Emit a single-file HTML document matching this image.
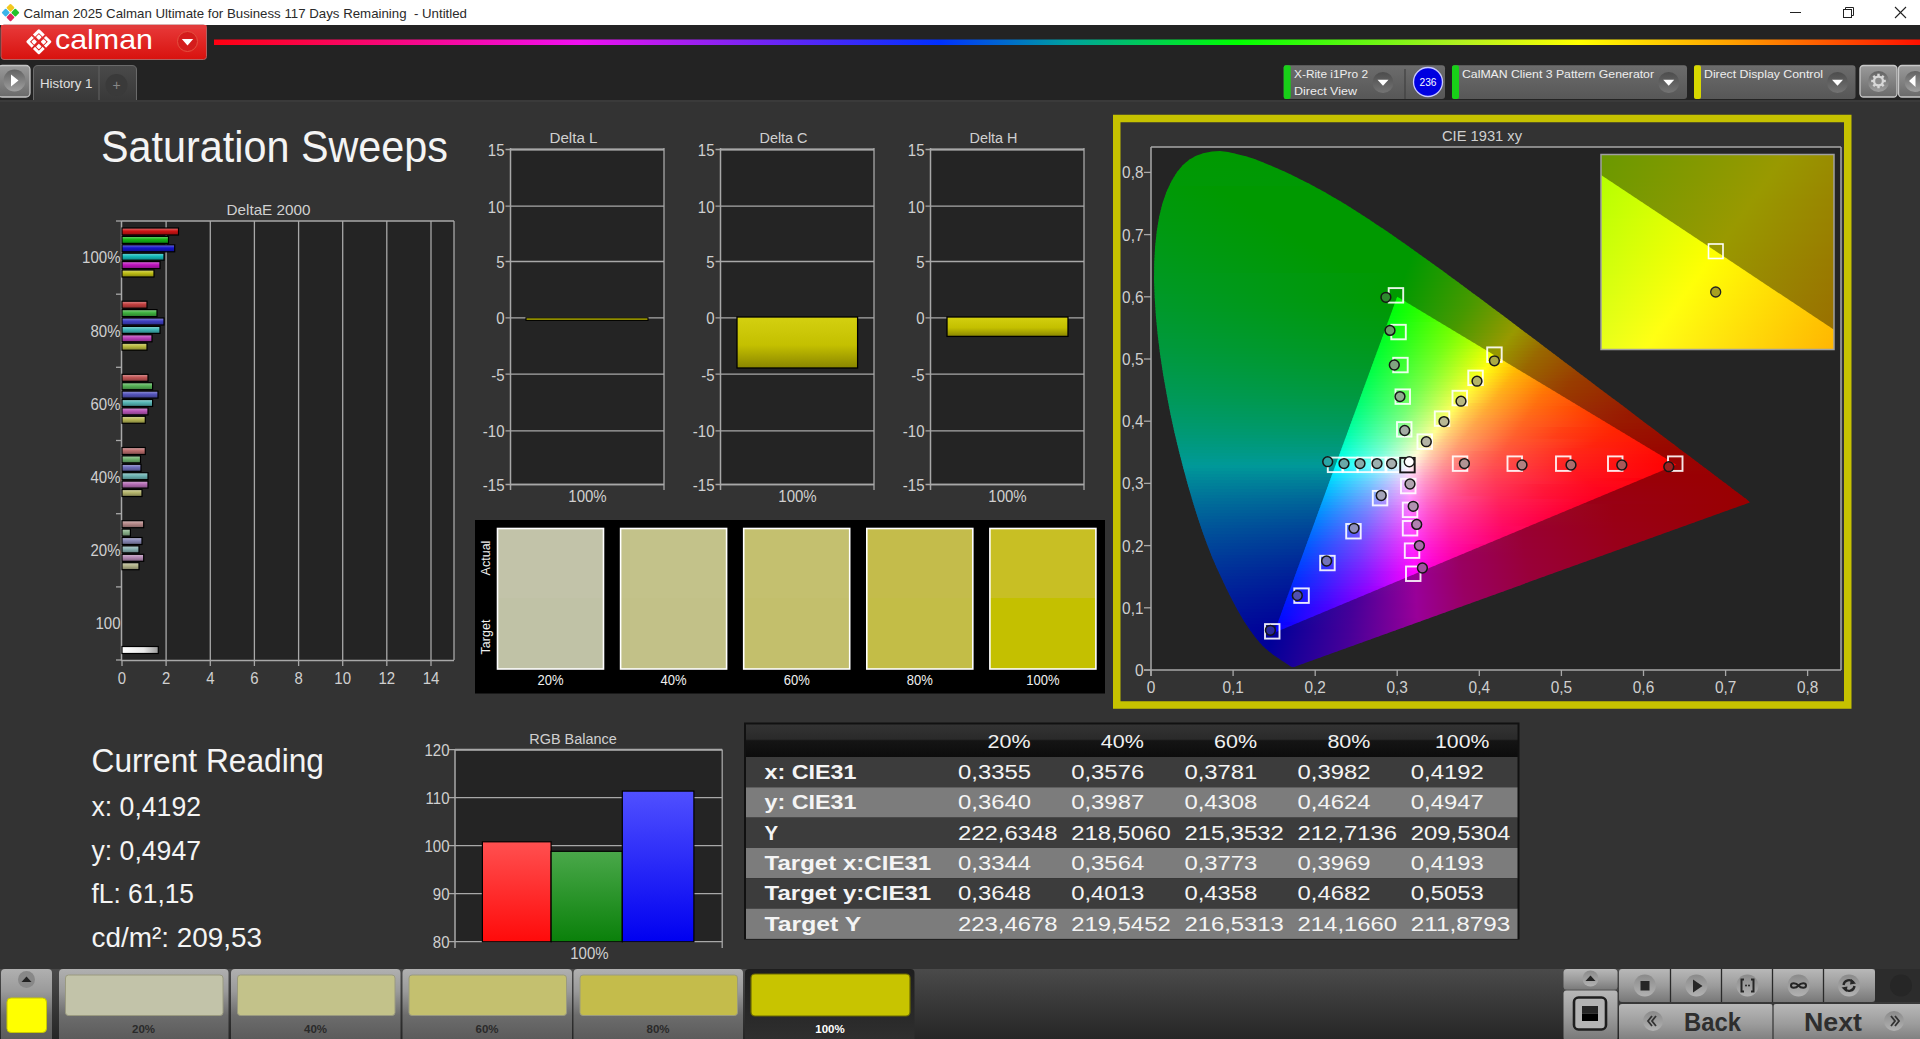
<!DOCTYPE html><html><head><meta charset="utf-8"><style>html,body{margin:0;padding:0;background:#333;overflow:hidden}svg{display:block;font-family:"Liberation Sans",sans-serif}</style></head><body><svg width="1920" height="1039" viewBox="0 0 1920 1039"><defs><linearGradient id="redbtn" x1="0" y1="0" x2="0" y2="1"><stop offset="0" stop-color="#e83a3a"/><stop offset="1" stop-color="#d8120e"/></linearGradient><linearGradient id="rainbow" gradientUnits="userSpaceOnUse" x1="214" x2="1920"><stop offset="0" stop-color="#ff0010"/><stop offset="0.214" stop-color="#f010f0"/><stop offset="0.28" stop-color="#a020f0"/><stop offset="0.425" stop-color="#0030ff"/><stop offset="0.5" stop-color="#00a0a0"/><stop offset="0.6" stop-color="#00ff00"/><stop offset="0.73" stop-color="#b0f020"/><stop offset="0.8" stop-color="#ffff00"/><stop offset="0.89" stop-color="#ffa000"/><stop offset="1" stop-color="#ff1000"/></linearGradient><linearGradient id="btn" x1="0" y1="0" x2="0" y2="1"><stop offset="0" stop-color="#9a9a9a"/><stop offset="1" stop-color="#6a6a6a"/></linearGradient><linearGradient id="knobg" x1="0" y1="0" x2="0" y2="1"><stop offset="0" stop-color="#626262"/><stop offset="1" stop-color="#a0a0a0"/></linearGradient><linearGradient id="dknob" x1="0" y1="0" x2="0" y2="1"><stop offset="0" stop-color="#4c4c4c"/><stop offset="1" stop-color="#747474"/></linearGradient><radialGradient id="knob" cx="0.5" cy="0.5" r="0.5"><stop offset="0.6" stop-color="#777"/><stop offset="1" stop-color="#999"/></radialGradient><linearGradient id="tab" x1="0" y1="0" x2="0" y2="1"><stop offset="0" stop-color="#4a4a4a"/><stop offset="1" stop-color="#393939"/></linearGradient><linearGradient id="ibox" x1="0" y1="0" x2="0" y2="1"><stop offset="0" stop-color="#6c6c6c"/><stop offset="1" stop-color="#575757"/></linearGradient><linearGradient id="bar0_0" x1="0" y1="0" x2="0" y2="1"><stop offset="0" stop-color="rgb(225, 114, 114)"/><stop offset="0.45" stop-color="rgb(205, 20, 20)"/><stop offset="1" stop-color="rgb(143, 14, 14)"/></linearGradient><linearGradient id="bar0_1" x1="0" y1="0" x2="0" y2="1"><stop offset="0" stop-color="rgb(114, 210, 114)"/><stop offset="0.45" stop-color="rgb(20, 180, 20)"/><stop offset="1" stop-color="rgb(14, 125, 14)"/></linearGradient><linearGradient id="bar0_2" x1="0" y1="0" x2="0" y2="1"><stop offset="0" stop-color="rgb(114, 114, 222)"/><stop offset="0.45" stop-color="rgb(20, 20, 200)"/><stop offset="1" stop-color="rgb(14, 14, 140)"/></linearGradient><linearGradient id="bar0_3" x1="0" y1="0" x2="0" y2="1"><stop offset="0" stop-color="rgb(114, 213, 213)"/><stop offset="0.45" stop-color="rgb(20, 185, 185)"/><stop offset="1" stop-color="rgb(14, 129, 129)"/></linearGradient><linearGradient id="bar0_4" x1="0" y1="0" x2="0" y2="1"><stop offset="0" stop-color="rgb(216, 114, 216)"/><stop offset="0.45" stop-color="rgb(190, 20, 190)"/><stop offset="1" stop-color="rgb(133, 14, 133)"/></linearGradient><linearGradient id="bar0_5" x1="0" y1="0" x2="0" y2="1"><stop offset="0" stop-color="rgb(216, 216, 114)"/><stop offset="0.45" stop-color="rgb(190, 190, 20)"/><stop offset="1" stop-color="rgb(133, 133, 14)"/></linearGradient><linearGradient id="bar1_0" x1="0" y1="0" x2="0" y2="1"><stop offset="0" stop-color="rgb(219, 139, 139)"/><stop offset="0.45" stop-color="rgb(196, 63, 63)"/><stop offset="1" stop-color="rgb(137, 44, 44)"/></linearGradient><linearGradient id="bar1_1" x1="0" y1="0" x2="0" y2="1"><stop offset="0" stop-color="rgb(139, 208, 139)"/><stop offset="0.45" stop-color="rgb(63, 178, 63)"/><stop offset="1" stop-color="rgb(44, 124, 44)"/></linearGradient><linearGradient id="bar1_2" x1="0" y1="0" x2="0" y2="1"><stop offset="0" stop-color="rgb(139, 139, 217)"/><stop offset="0.45" stop-color="rgb(63, 63, 193)"/><stop offset="1" stop-color="rgb(44, 44, 135)"/></linearGradient><linearGradient id="bar1_3" x1="0" y1="0" x2="0" y2="1"><stop offset="0" stop-color="rgb(139, 211, 211)"/><stop offset="0.45" stop-color="rgb(63, 182, 182)"/><stop offset="1" stop-color="rgb(44, 127, 127)"/></linearGradient><linearGradient id="bar1_4" x1="0" y1="0" x2="0" y2="1"><stop offset="0" stop-color="rgb(213, 139, 213)"/><stop offset="0.45" stop-color="rgb(185, 63, 185)"/><stop offset="1" stop-color="rgb(129, 44, 129)"/></linearGradient><linearGradient id="bar1_5" x1="0" y1="0" x2="0" y2="1"><stop offset="0" stop-color="rgb(213, 213, 139)"/><stop offset="0.45" stop-color="rgb(185, 185, 63)"/><stop offset="1" stop-color="rgb(129, 129, 44)"/></linearGradient><linearGradient id="bar2_0" x1="0" y1="0" x2="0" y2="1"><stop offset="0" stop-color="rgb(217, 153, 153)"/><stop offset="0.45" stop-color="rgb(192, 85, 85)"/><stop offset="1" stop-color="rgb(134, 59, 59)"/></linearGradient><linearGradient id="bar2_1" x1="0" y1="0" x2="0" y2="1"><stop offset="0" stop-color="rgb(153, 208, 153)"/><stop offset="0.45" stop-color="rgb(85, 177, 85)"/><stop offset="1" stop-color="rgb(59, 123, 59)"/></linearGradient><linearGradient id="bar2_2" x1="0" y1="0" x2="0" y2="1"><stop offset="0" stop-color="rgb(153, 153, 215)"/><stop offset="0.45" stop-color="rgb(85, 85, 189)"/><stop offset="1" stop-color="rgb(59, 59, 132)"/></linearGradient><linearGradient id="bar2_3" x1="0" y1="0" x2="0" y2="1"><stop offset="0" stop-color="rgb(153, 210, 210)"/><stop offset="0.45" stop-color="rgb(85, 180, 180)"/><stop offset="1" stop-color="rgb(59, 125, 125)"/></linearGradient><linearGradient id="bar2_4" x1="0" y1="0" x2="0" y2="1"><stop offset="0" stop-color="rgb(211, 153, 211)"/><stop offset="0.45" stop-color="rgb(183, 85, 183)"/><stop offset="1" stop-color="rgb(128, 59, 128)"/></linearGradient><linearGradient id="bar2_5" x1="0" y1="0" x2="0" y2="1"><stop offset="0" stop-color="rgb(211, 211, 153)"/><stop offset="0.45" stop-color="rgb(183, 183, 85)"/><stop offset="1" stop-color="rgb(128, 128, 59)"/></linearGradient><linearGradient id="bar3_0" x1="0" y1="0" x2="0" y2="1"><stop offset="0" stop-color="rgb(214, 167, 167)"/><stop offset="0.45" stop-color="rgb(187, 109, 109)"/><stop offset="1" stop-color="rgb(130, 76, 76)"/></linearGradient><linearGradient id="bar3_1" x1="0" y1="0" x2="0" y2="1"><stop offset="0" stop-color="rgb(167, 208, 167)"/><stop offset="0.45" stop-color="rgb(109, 177, 109)"/><stop offset="1" stop-color="rgb(76, 123, 76)"/></linearGradient><linearGradient id="bar3_2" x1="0" y1="0" x2="0" y2="1"><stop offset="0" stop-color="rgb(167, 167, 213)"/><stop offset="0.45" stop-color="rgb(109, 109, 185)"/><stop offset="1" stop-color="rgb(76, 76, 129)"/></linearGradient><linearGradient id="bar3_3" x1="0" y1="0" x2="0" y2="1"><stop offset="0" stop-color="rgb(167, 209, 209)"/><stop offset="0.45" stop-color="rgb(109, 179, 179)"/><stop offset="1" stop-color="rgb(76, 125, 125)"/></linearGradient><linearGradient id="bar3_4" x1="0" y1="0" x2="0" y2="1"><stop offset="0" stop-color="rgb(210, 167, 210)"/><stop offset="0.45" stop-color="rgb(181, 109, 181)"/><stop offset="1" stop-color="rgb(126, 76, 126)"/></linearGradient><linearGradient id="bar3_5" x1="0" y1="0" x2="0" y2="1"><stop offset="0" stop-color="rgb(210, 210, 167)"/><stop offset="0.45" stop-color="rgb(181, 181, 109)"/><stop offset="1" stop-color="rgb(126, 126, 76)"/></linearGradient><linearGradient id="bar4_0" x1="0" y1="0" x2="0" y2="1"><stop offset="0" stop-color="rgb(211, 183, 183)"/><stop offset="0.45" stop-color="rgb(182, 136, 136)"/><stop offset="1" stop-color="rgb(127, 95, 95)"/></linearGradient><linearGradient id="bar4_1" x1="0" y1="0" x2="0" y2="1"><stop offset="0" stop-color="rgb(183, 207, 183)"/><stop offset="0.45" stop-color="rgb(136, 176, 136)"/><stop offset="1" stop-color="rgb(95, 123, 95)"/></linearGradient><linearGradient id="bar4_2" x1="0" y1="0" x2="0" y2="1"><stop offset="0" stop-color="rgb(183, 183, 210)"/><stop offset="0.45" stop-color="rgb(136, 136, 181)"/><stop offset="1" stop-color="rgb(95, 95, 126)"/></linearGradient><linearGradient id="bar4_3" x1="0" y1="0" x2="0" y2="1"><stop offset="0" stop-color="rgb(183, 208, 208)"/><stop offset="0.45" stop-color="rgb(136, 177, 177)"/><stop offset="1" stop-color="rgb(95, 123, 123)"/></linearGradient><linearGradient id="bar4_4" x1="0" y1="0" x2="0" y2="1"><stop offset="0" stop-color="rgb(208, 183, 208)"/><stop offset="0.45" stop-color="rgb(178, 136, 178)"/><stop offset="1" stop-color="rgb(124, 95, 124)"/></linearGradient><linearGradient id="bar4_5" x1="0" y1="0" x2="0" y2="1"><stop offset="0" stop-color="rgb(208, 208, 183)"/><stop offset="0.45" stop-color="rgb(178, 178, 136)"/><stop offset="1" stop-color="rgb(124, 124, 95)"/></linearGradient><linearGradient id="wbar" x1="0" y1="0" x2="1" y2="0"><stop offset="0" stop-color="#fff"/><stop offset="0.6" stop-color="#e8e8e8"/><stop offset="1" stop-color="#9a9a9a"/></linearGradient><linearGradient id="ybar" x1="0" y1="0" x2="0" y2="1"><stop offset="0" stop-color="#d4d010"/><stop offset="0.55" stop-color="#c4c000"/><stop offset="1" stop-color="#8a8600"/></linearGradient><clipPath id="locus"><path d="M1293.9,666.9 1293.9,666.9 1293.9,666.9 1293.8,666.9 1293.8,666.9 1293.8,666.9 1293.7,666.9 1293.7,666.9 1293.7,667.0 1293.6,667.0 1293.6,667.0 1293.5,666.9 1293.5,667.0 1293.4,667.0 1293.4,667.0 1293.3,667.0 1293.2,667.0 1293.2,667.0 1293.1,667.0 1293.1,667.0 1293.0,667.0 1292.9,667.0 1292.8,667.0 1292.8,667.0 1292.7,667.0 1292.6,667.0 1292.5,667.0 1292.4,667.0 1292.3,667.0 1292.1,667.0 1292.0,666.9 1291.9,666.9 1291.7,666.8 1291.5,666.7 1291.3,666.6 1291.0,666.5 1290.8,666.4 1290.5,666.2 1290.3,666.1 1290.0,665.9 1289.6,665.7 1289.3,665.5 1288.9,665.2 1288.4,665.0 1288.0,664.7 1287.5,664.3 1287.0,664.0 1286.5,663.6 1285.9,663.2 1285.3,662.8 1284.7,662.4 1284.0,661.9 1283.2,661.4 1282.4,660.9 1281.5,660.3 1280.5,659.7 1279.5,659.0 1278.5,658.3 1277.4,657.6 1276.2,656.8 1274.9,655.9 1273.6,654.9 1272.2,653.9 1270.7,652.8 1269.2,651.5 1267.6,650.2 1265.9,648.8 1264.2,647.2 1262.2,645.2 1260.1,642.9 1257.8,640.3 1255.4,637.4 1252.9,634.0 1250.1,630.3 1247.3,626.1 1244.2,621.4 1241.0,616.0 1237.5,609.9 1233.9,603.3 1230.0,595.8 1225.9,587.5 1221.6,578.2 1216.9,568.2 1212.1,557.2 1207.4,545.2 1202.6,532.0 1197.8,517.8 1193.0,502.6 1188.3,486.5 1183.6,469.3 1178.9,451.1 1174.4,432.3 1170.3,413.3 1166.6,394.0 1163.1,374.2 1160.1,354.4 1157.7,335.1 1155.9,316.3 1154.7,297.7 1154.0,279.8 1154.2,262.7 1155.1,246.5 1156.8,230.9 1159.2,216.4 1162.4,203.4 1166.5,191.7 1171.4,181.3 1176.9,172.3 1182.9,164.9 1189.5,159.4 1196.7,155.5 1204.3,152.9 1212.0,151.4 1219.9,151.1 1228.1,152.1 1236.4,153.9 1244.7,156.1 1253.1,158.6 1261.4,161.8 1269.8,165.2 1278.0,168.7 1286.0,172.3 1293.8,176.0 1301.6,179.9 1309.3,183.8 1317.0,187.9 1324.5,192.1 1332.0,196.4 1339.5,200.8 1346.9,205.3 1354.4,210.0 1361.8,214.7 1369.2,219.5 1376.5,224.4 1383.9,229.3 1391.2,234.3 1398.6,239.4 1405.9,244.5 1413.2,249.7 1420.5,254.9 1427.9,260.2 1435.2,265.5 1442.6,270.8 1449.9,276.2 1457.2,281.6 1464.6,287.0 1471.9,292.4 1479.2,297.8 1486.5,303.3 1493.8,308.7 1501.0,314.1 1508.3,319.6 1515.5,325.0 1522.7,330.4 1529.8,335.8 1536.9,341.1 1544.0,346.4 1551.0,351.7 1558.0,357.0 1564.8,362.2 1571.7,367.3 1578.4,372.4 1585.1,377.5 1591.7,382.5 1598.2,387.4 1604.6,392.2 1610.9,396.9 1617.1,401.6 1623.1,406.1 1629.0,410.6 1634.8,415.0 1640.4,419.3 1645.9,423.4 1651.1,427.3 1656.1,431.1 1660.9,434.8 1665.6,438.3 1670.2,441.8 1674.7,445.1 1679.0,448.4 1683.0,451.4 1686.9,454.3 1690.6,457.1 1694.1,459.7 1697.5,462.3 1700.7,464.7 1703.7,466.9 1706.5,469.1 1709.2,471.1 1711.8,473.1 1714.2,474.9 1716.4,476.6 1718.6,478.2 1720.6,479.8 1722.5,481.2 1724.3,482.5 1726.1,483.8 1727.7,485.1 1729.2,486.2 1730.7,487.3 1732.0,488.4 1733.4,489.4 1734.7,490.4 1735.9,491.3 1737.1,492.2 1738.2,493.0 1739.2,493.8 1740.2,494.6 1741.2,495.3 1742.1,495.9 1742.9,496.6 1743.7,497.2 1744.4,497.7 1745.1,498.2 1745.7,498.6 1746.3,499.1 1746.9,499.6 1747.7,500.3 1748.5,501.1 1749.2,501.8 1749.8,502.4Z"/></clipPath><clipPath id="tri"><path d="M1676.3,464.7 L1397.2,296.8 L1274.1,632.7 Z"/></clipPath><linearGradient id="o0" gradientUnits="userSpaceOnUse" x1="1153" x2="1751"><stop offset=".000" stop-color="#009900"/><stop offset=".497" stop-color="#009900"/><stop offset=".679" stop-color="#479900"/><stop offset=".844" stop-color="#999900"/><stop offset="1.000" stop-color="#995d00"/></linearGradient><linearGradient id="o1" gradientUnits="userSpaceOnUse" x1="1153" x2="1751"><stop offset=".000" stop-color="#009901"/><stop offset=".495" stop-color="#009900"/><stop offset=".677" stop-color="#479900"/><stop offset=".841" stop-color="#999900"/><stop offset="1.000" stop-color="#995c00"/></linearGradient><linearGradient id="o2" gradientUnits="userSpaceOnUse" x1="1153" x2="1751"><stop offset=".000" stop-color="#009902"/><stop offset=".493" stop-color="#009900"/><stop offset=".674" stop-color="#479900"/><stop offset=".836" stop-color="#999900"/><stop offset="1.000" stop-color="#995a00"/></linearGradient><linearGradient id="o3" gradientUnits="userSpaceOnUse" x1="1153" x2="1751"><stop offset=".000" stop-color="#009902"/><stop offset=".492" stop-color="#009900"/><stop offset=".672" stop-color="#489900"/><stop offset=".833" stop-color="#999900"/><stop offset=".908" stop-color="#997600"/><stop offset="1.000" stop-color="#995900"/></linearGradient><linearGradient id="o4" gradientUnits="userSpaceOnUse" x1="1153" x2="1751"><stop offset=".000" stop-color="#009903"/><stop offset=".490" stop-color="#009900"/><stop offset=".667" stop-color="#479900"/><stop offset=".829" stop-color="#999900"/><stop offset=".906" stop-color="#997500"/><stop offset="1.000" stop-color="#995800"/></linearGradient><linearGradient id="o5" gradientUnits="userSpaceOnUse" x1="1153" x2="1751"><stop offset=".000" stop-color="#009903"/><stop offset=".488" stop-color="#009900"/><stop offset=".666" stop-color="#479900"/><stop offset=".824" stop-color="#999900"/><stop offset=".903" stop-color="#997400"/><stop offset="1.000" stop-color="#995600"/></linearGradient><linearGradient id="o6" gradientUnits="userSpaceOnUse" x1="1153" x2="1751"><stop offset=".000" stop-color="#009904"/><stop offset=".487" stop-color="#009900"/><stop offset=".664" stop-color="#489900"/><stop offset=".821" stop-color="#999900"/><stop offset=".901" stop-color="#997300"/><stop offset="1.000" stop-color="#995500"/></linearGradient><linearGradient id="o7" gradientUnits="userSpaceOnUse" x1="1153" x2="1751"><stop offset=".000" stop-color="#009905"/><stop offset=".485" stop-color="#009900"/><stop offset=".661" stop-color="#489900"/><stop offset=".816" stop-color="#999900"/><stop offset=".900" stop-color="#997200"/><stop offset="1.000" stop-color="#995400"/></linearGradient><linearGradient id="o8" gradientUnits="userSpaceOnUse" x1="1153" x2="1751"><stop offset=".000" stop-color="#009905"/><stop offset=".483" stop-color="#009900"/><stop offset=".657" stop-color="#489900"/><stop offset=".813" stop-color="#999900"/><stop offset=".896" stop-color="#997200"/><stop offset="1.000" stop-color="#995300"/></linearGradient><linearGradient id="o9" gradientUnits="userSpaceOnUse" x1="1153" x2="1751"><stop offset=".000" stop-color="#009906"/><stop offset=".482" stop-color="#009900"/><stop offset=".654" stop-color="#489900"/><stop offset=".809" stop-color="#999900"/><stop offset=".895" stop-color="#997100"/><stop offset="1.000" stop-color="#995100"/></linearGradient><linearGradient id="o10" gradientUnits="userSpaceOnUse" x1="1153" x2="1751"><stop offset=".000" stop-color="#009907"/><stop offset=".478" stop-color="#009900"/><stop offset=".651" stop-color="#479900"/><stop offset=".804" stop-color="#999900"/><stop offset=".891" stop-color="#997000"/><stop offset="1.000" stop-color="#995000"/></linearGradient><linearGradient id="o11" gradientUnits="userSpaceOnUse" x1="1153" x2="1751"><stop offset=".000" stop-color="#009907"/><stop offset=".477" stop-color="#009900"/><stop offset=".647" stop-color="#479900"/><stop offset=".801" stop-color="#999900"/><stop offset=".888" stop-color="#997000"/><stop offset="1.000" stop-color="#994f00"/></linearGradient><linearGradient id="o12" gradientUnits="userSpaceOnUse" x1="1153" x2="1751"><stop offset=".000" stop-color="#009908"/><stop offset=".105" stop-color="#009900"/><stop offset=".475" stop-color="#009900"/><stop offset=".644" stop-color="#479900"/><stop offset=".796" stop-color="#999900"/><stop offset=".886" stop-color="#996f00"/><stop offset="1.000" stop-color="#994e00"/></linearGradient><linearGradient id="o13" gradientUnits="userSpaceOnUse" x1="1153" x2="1751"><stop offset=".000" stop-color="#009909"/><stop offset=".114" stop-color="#009900"/><stop offset=".473" stop-color="#009900"/><stop offset=".642" stop-color="#489900"/><stop offset=".793" stop-color="#999900"/><stop offset=".883" stop-color="#996e00"/><stop offset="1.000" stop-color="#994c00"/></linearGradient><linearGradient id="o14" gradientUnits="userSpaceOnUse" x1="1153" x2="1751"><stop offset=".000" stop-color="#009909"/><stop offset=".122" stop-color="#009900"/><stop offset=".472" stop-color="#009900"/><stop offset=".639" stop-color="#479900"/><stop offset=".789" stop-color="#999900"/><stop offset=".881" stop-color="#996d00"/><stop offset="1.000" stop-color="#994b00"/></linearGradient><linearGradient id="o15" gradientUnits="userSpaceOnUse" x1="1153" x2="1751"><stop offset=".000" stop-color="#00990a"/><stop offset=".130" stop-color="#009900"/><stop offset=".470" stop-color="#009900"/><stop offset=".637" stop-color="#489900"/><stop offset=".784" stop-color="#999900"/><stop offset=".880" stop-color="#996c00"/><stop offset="1.000" stop-color="#994a00"/></linearGradient><linearGradient id="o16" gradientUnits="userSpaceOnUse" x1="1153" x2="1751"><stop offset=".000" stop-color="#00990b"/><stop offset=".139" stop-color="#009900"/><stop offset=".468" stop-color="#009900"/><stop offset=".634" stop-color="#489900"/><stop offset=".781" stop-color="#999900"/><stop offset=".876" stop-color="#996c00"/><stop offset="1.000" stop-color="#994900"/></linearGradient><linearGradient id="o17" gradientUnits="userSpaceOnUse" x1="1153" x2="1751"><stop offset=".000" stop-color="#00990c"/><stop offset=".147" stop-color="#009900"/><stop offset=".467" stop-color="#009900"/><stop offset=".629" stop-color="#479900"/><stop offset=".778" stop-color="#999800"/><stop offset=".875" stop-color="#996a00"/><stop offset="1.000" stop-color="#994800"/></linearGradient><linearGradient id="o18" gradientUnits="userSpaceOnUse" x1="1153" x2="1751"><stop offset=".000" stop-color="#00990c"/><stop offset=".156" stop-color="#009900"/><stop offset=".465" stop-color="#009900"/><stop offset=".627" stop-color="#489900"/><stop offset=".773" stop-color="#999900"/><stop offset=".871" stop-color="#996a00"/><stop offset="1.000" stop-color="#994700"/></linearGradient><linearGradient id="o19" gradientUnits="userSpaceOnUse" x1="1153" x2="1751"><stop offset=".000" stop-color="#00990d"/><stop offset=".164" stop-color="#009900"/><stop offset=".462" stop-color="#009900"/><stop offset=".622" stop-color="#479900"/><stop offset=".769" stop-color="#999900"/><stop offset=".868" stop-color="#996900"/><stop offset="1.000" stop-color="#994500"/></linearGradient><linearGradient id="o20" gradientUnits="userSpaceOnUse" x1="1153" x2="1751"><stop offset=".000" stop-color="#00990e"/><stop offset=".172" stop-color="#009900"/><stop offset=".460" stop-color="#009900"/><stop offset=".620" stop-color="#479900"/><stop offset=".764" stop-color="#999900"/><stop offset=".866" stop-color="#996800"/><stop offset="1.000" stop-color="#994400"/></linearGradient><linearGradient id="o21" gradientUnits="userSpaceOnUse" x1="1153" x2="1751"><stop offset=".000" stop-color="#00990f"/><stop offset=".181" stop-color="#009900"/><stop offset=".458" stop-color="#009900"/><stop offset=".617" stop-color="#479900"/><stop offset=".761" stop-color="#999900"/><stop offset=".863" stop-color="#996800"/><stop offset="1.000" stop-color="#994300"/></linearGradient><linearGradient id="o22" gradientUnits="userSpaceOnUse" x1="1153" x2="1751"><stop offset=".000" stop-color="#00990f"/><stop offset=".189" stop-color="#009900"/><stop offset=".457" stop-color="#009900"/><stop offset=".614" stop-color="#479900"/><stop offset=".758" stop-color="#999800"/><stop offset=".861" stop-color="#996700"/><stop offset="1.000" stop-color="#994200"/></linearGradient><linearGradient id="o23" gradientUnits="userSpaceOnUse" x1="1153" x2="1751"><stop offset=".000" stop-color="#009910"/><stop offset=".197" stop-color="#009900"/><stop offset=".455" stop-color="#009900"/><stop offset=".612" stop-color="#489900"/><stop offset=".753" stop-color="#999900"/><stop offset=".858" stop-color="#996600"/><stop offset="1.000" stop-color="#994100"/></linearGradient><linearGradient id="o24" gradientUnits="userSpaceOnUse" x1="1153" x2="1751"><stop offset=".000" stop-color="#009911"/><stop offset=".206" stop-color="#009900"/><stop offset=".453" stop-color="#009900"/><stop offset=".609" stop-color="#479900"/><stop offset=".749" stop-color="#999900"/><stop offset=".856" stop-color="#996500"/><stop offset="1.000" stop-color="#994000"/></linearGradient><linearGradient id="o25" gradientUnits="userSpaceOnUse" x1="1153" x2="1751"><stop offset=".000" stop-color="#009912"/><stop offset=".214" stop-color="#009900"/><stop offset=".452" stop-color="#009900"/><stop offset=".607" stop-color="#489900"/><stop offset=".744" stop-color="#999900"/><stop offset=".853" stop-color="#996500"/><stop offset="1.000" stop-color="#993f00"/></linearGradient><linearGradient id="o26" gradientUnits="userSpaceOnUse" x1="1153" x2="1751"><stop offset=".000" stop-color="#009912"/><stop offset=".221" stop-color="#009900"/><stop offset=".450" stop-color="#009900"/><stop offset=".604" stop-color="#489900"/><stop offset=".741" stop-color="#999900"/><stop offset=".849" stop-color="#996400"/><stop offset="1.000" stop-color="#993d00"/></linearGradient><linearGradient id="o27" gradientUnits="userSpaceOnUse" x1="1153" x2="1751"><stop offset=".000" stop-color="#009913"/><stop offset=".229" stop-color="#009900"/><stop offset=".448" stop-color="#009900"/><stop offset=".599" stop-color="#479900"/><stop offset=".737" stop-color="#999800"/><stop offset=".848" stop-color="#996300"/><stop offset="1.000" stop-color="#993c00"/></linearGradient><linearGradient id="o28" gradientUnits="userSpaceOnUse" x1="1153" x2="1751"><stop offset=".000" stop-color="#009914"/><stop offset=".237" stop-color="#009900"/><stop offset=".446" stop-color="#009900"/><stop offset=".599" stop-color="#489900"/><stop offset=".732" stop-color="#999900"/><stop offset=".844" stop-color="#996200"/><stop offset="1.000" stop-color="#993b00"/></linearGradient><linearGradient id="o29" gradientUnits="userSpaceOnUse" x1="1153" x2="1751"><stop offset=".000" stop-color="#009915"/><stop offset=".246" stop-color="#009900"/><stop offset=".445" stop-color="#009900"/><stop offset=".595" stop-color="#489900"/><stop offset=".727" stop-color="#989900"/><stop offset=".843" stop-color="#996100"/><stop offset="1.000" stop-color="#993a00"/></linearGradient><linearGradient id="o30" gradientUnits="userSpaceOnUse" x1="1153" x2="1751"><stop offset=".000" stop-color="#009916"/><stop offset=".254" stop-color="#009900"/><stop offset=".443" stop-color="#009900"/><stop offset=".592" stop-color="#489900"/><stop offset=".724" stop-color="#999900"/><stop offset=".839" stop-color="#996100"/><stop offset="1.000" stop-color="#993900"/></linearGradient><linearGradient id="o31" gradientUnits="userSpaceOnUse" x1="1153" x2="1751"><stop offset=".000" stop-color="#009917"/><stop offset=".263" stop-color="#009900"/><stop offset=".440" stop-color="#009900"/><stop offset=".587" stop-color="#479900"/><stop offset=".721" stop-color="#999900"/><stop offset=".836" stop-color="#996000"/><stop offset="1.000" stop-color="#993800"/></linearGradient><linearGradient id="o32" gradientUnits="userSpaceOnUse" x1="1153" x2="1751"><stop offset=".000" stop-color="#009918"/><stop offset=".271" stop-color="#009900"/><stop offset=".438" stop-color="#009900"/><stop offset=".584" stop-color="#479900"/><stop offset=".716" stop-color="#989900"/><stop offset=".834" stop-color="#995f00"/><stop offset="1.000" stop-color="#993700"/></linearGradient><linearGradient id="o33" gradientUnits="userSpaceOnUse" x1="1153" x2="1751"><stop offset=".000" stop-color="#009918"/><stop offset=".279" stop-color="#009900"/><stop offset=".436" stop-color="#009900"/><stop offset=".582" stop-color="#479900"/><stop offset=".712" stop-color="#999900"/><stop offset=".831" stop-color="#995f00"/><stop offset="1.000" stop-color="#993600"/></linearGradient><linearGradient id="o34" gradientUnits="userSpaceOnUse" x1="1153" x2="1751"><stop offset=".000" stop-color="#009919"/><stop offset=".288" stop-color="#009900"/><stop offset=".435" stop-color="#009900"/><stop offset=".579" stop-color="#479900"/><stop offset=".707" stop-color="#989900"/><stop offset=".829" stop-color="#995e00"/><stop offset="1.000" stop-color="#993500"/></linearGradient><linearGradient id="o35" gradientUnits="userSpaceOnUse" x1="1153" x2="1751"><stop offset=".000" stop-color="#00991a"/><stop offset=".296" stop-color="#009900"/><stop offset=".433" stop-color="#009900"/><stop offset=".577" stop-color="#489900"/><stop offset=".704" stop-color="#999900"/><stop offset=".826" stop-color="#995d00"/><stop offset="1.000" stop-color="#993400"/></linearGradient><linearGradient id="o36" gradientUnits="userSpaceOnUse" x1="1153" x2="1751"><stop offset=".000" stop-color="#00991b"/><stop offset=".304" stop-color="#009900"/><stop offset=".431" stop-color="#009900"/><stop offset=".574" stop-color="#489900"/><stop offset=".701" stop-color="#999900"/><stop offset=".823" stop-color="#995c00"/><stop offset="1.000" stop-color="#993300"/></linearGradient><linearGradient id="o37" gradientUnits="userSpaceOnUse" x1="1153" x2="1751"><stop offset=".000" stop-color="#00991c"/><stop offset=".313" stop-color="#009900"/><stop offset=".430" stop-color="#009900"/><stop offset=".570" stop-color="#479900"/><stop offset=".696" stop-color="#989900"/><stop offset=".821" stop-color="#995b00"/><stop offset="1.000" stop-color="#993200"/></linearGradient><linearGradient id="o38" gradientUnits="userSpaceOnUse" x1="1153" x2="1751"><stop offset=".000" stop-color="#00991d"/><stop offset=".321" stop-color="#009900"/><stop offset=".428" stop-color="#009900"/><stop offset=".569" stop-color="#489900"/><stop offset=".692" stop-color="#999900"/><stop offset=".818" stop-color="#995b00"/><stop offset="1.000" stop-color="#993100"/></linearGradient><linearGradient id="o39" gradientUnits="userSpaceOnUse" x1="1153" x2="1751"><stop offset=".000" stop-color="#00991e"/><stop offset=".329" stop-color="#009900"/><stop offset=".426" stop-color="#009900"/><stop offset=".565" stop-color="#489900"/><stop offset=".687" stop-color="#989900"/><stop offset=".814" stop-color="#995a00"/><stop offset="1.000" stop-color="#993000"/></linearGradient><linearGradient id="o40" gradientUnits="userSpaceOnUse" x1="1153" x2="1751"><stop offset=".000" stop-color="#00991f"/><stop offset=".338" stop-color="#009900"/><stop offset=".423" stop-color="#009900"/><stop offset=".560" stop-color="#479900"/><stop offset=".684" stop-color="#989900"/><stop offset=".742" stop-color="#997600"/><stop offset=".813" stop-color="#995900"/><stop offset="1.000" stop-color="#992f00"/></linearGradient><linearGradient id="o41" gradientUnits="userSpaceOnUse" x1="1153" x2="1751"><stop offset=".000" stop-color="#009920"/><stop offset=".421" stop-color="#009900"/><stop offset=".557" stop-color="#479900"/><stop offset=".681" stop-color="#999900"/><stop offset=".739" stop-color="#997500"/><stop offset=".809" stop-color="#995800"/><stop offset="1.000" stop-color="#992e00"/></linearGradient><linearGradient id="o42" gradientUnits="userSpaceOnUse" x1="1153" x2="1751"><stop offset=".000" stop-color="#009921"/><stop offset=".420" stop-color="#009900"/><stop offset=".555" stop-color="#479900"/><stop offset=".676" stop-color="#989900"/><stop offset=".736" stop-color="#997500"/><stop offset=".806" stop-color="#995800"/><stop offset="1.000" stop-color="#992d00"/></linearGradient><linearGradient id="o43" gradientUnits="userSpaceOnUse" x1="1153" x2="1751"><stop offset=".000" stop-color="#009922"/><stop offset=".418" stop-color="#009900"/><stop offset=".552" stop-color="#479900"/><stop offset=".672" stop-color="#999900"/><stop offset=".731" stop-color="#997500"/><stop offset=".803" stop-color="#995700"/><stop offset="1.000" stop-color="#992c00"/></linearGradient><linearGradient id="o44" gradientUnits="userSpaceOnUse" x1="1153" x2="1751"><stop offset=".000" stop-color="#009923"/><stop offset=".416" stop-color="#009900"/><stop offset=".548" stop-color="#479900"/><stop offset=".667" stop-color="#989900"/><stop offset=".729" stop-color="#997300"/><stop offset=".801" stop-color="#995600"/><stop offset="1.000" stop-color="#992b00"/></linearGradient><linearGradient id="o45" gradientUnits="userSpaceOnUse" x1="1153" x2="1751"><stop offset=".000" stop-color="#009924"/><stop offset=".415" stop-color="#009900"/><stop offset=".547" stop-color="#489900"/><stop offset=".664" stop-color="#989900"/><stop offset=".726" stop-color="#997300"/><stop offset=".798" stop-color="#995500"/><stop offset="1.000" stop-color="#992a00"/></linearGradient><linearGradient id="o46" gradientUnits="userSpaceOnUse" x1="1153" x2="1751"><stop offset=".000" stop-color="#009925"/><stop offset=".413" stop-color="#009900"/><stop offset=".543" stop-color="#489900"/><stop offset=".661" stop-color="#999900"/><stop offset=".721" stop-color="#997300"/><stop offset=".794" stop-color="#995500"/><stop offset="1.000" stop-color="#992900"/></linearGradient><linearGradient id="o47" gradientUnits="userSpaceOnUse" x1="1153" x2="1751"><stop offset=".000" stop-color="#009926"/><stop offset=".411" stop-color="#009900"/><stop offset=".540" stop-color="#479900"/><stop offset=".656" stop-color="#989900"/><stop offset=".719" stop-color="#997200"/><stop offset=".793" stop-color="#995400"/><stop offset="1.000" stop-color="#992800"/></linearGradient><linearGradient id="o48" gradientUnits="userSpaceOnUse" x1="1153" x2="1751"><stop offset=".000" stop-color="#009928"/><stop offset=".410" stop-color="#009900"/><stop offset=".538" stop-color="#489900"/><stop offset=".652" stop-color="#999900"/><stop offset=".714" stop-color="#997200"/><stop offset=".789" stop-color="#995300"/><stop offset="1.000" stop-color="#992700"/></linearGradient><linearGradient id="o49" gradientUnits="userSpaceOnUse" x1="1153" x2="1751"><stop offset=".000" stop-color="#009929"/><stop offset=".408" stop-color="#009901"/><stop offset=".535" stop-color="#489900"/><stop offset=".649" stop-color="#999900"/><stop offset=".709" stop-color="#997200"/><stop offset=".786" stop-color="#995200"/><stop offset="1.000" stop-color="#992600"/></linearGradient><linearGradient id="o50" gradientUnits="userSpaceOnUse" x1="1153" x2="1751"><stop offset=".000" stop-color="#00992a"/><stop offset=".405" stop-color="#009902"/><stop offset=".530" stop-color="#479900"/><stop offset=".644" stop-color="#989900"/><stop offset=".707" stop-color="#997100"/><stop offset=".783" stop-color="#995200"/><stop offset="1.000" stop-color="#992500"/></linearGradient><linearGradient id="o51" gradientUnits="userSpaceOnUse" x1="1153" x2="1751"><stop offset=".000" stop-color="#00992b"/><stop offset=".403" stop-color="#009904"/><stop offset=".528" stop-color="#479900"/><stop offset=".640" stop-color="#999900"/><stop offset=".702" stop-color="#997100"/><stop offset=".779" stop-color="#995100"/><stop offset="1.000" stop-color="#992400"/></linearGradient><linearGradient id="o52" gradientUnits="userSpaceOnUse" x1="1153" x2="1751"><stop offset=".000" stop-color="#00992c"/><stop offset=".401" stop-color="#009905"/><stop offset=".525" stop-color="#479900"/><stop offset=".635" stop-color="#989900"/><stop offset=".701" stop-color="#996f00"/><stop offset=".778" stop-color="#995000"/><stop offset="1.000" stop-color="#992300"/></linearGradient><linearGradient id="o53" gradientUnits="userSpaceOnUse" x1="1153" x2="1751"><stop offset=".000" stop-color="#00992d"/><stop offset=".400" stop-color="#009906"/><stop offset=".522" stop-color="#479900"/><stop offset=".632" stop-color="#999900"/><stop offset=".696" stop-color="#997000"/><stop offset=".774" stop-color="#994f00"/><stop offset="1.000" stop-color="#992200"/></linearGradient><linearGradient id="o54" gradientUnits="userSpaceOnUse" x1="1153" x2="1751"><stop offset=".000" stop-color="#00992f"/><stop offset=".398" stop-color="#009908"/><stop offset=".520" stop-color="#489900"/><stop offset=".629" stop-color="#999900"/><stop offset=".691" stop-color="#997000"/><stop offset=".771" stop-color="#994f00"/><stop offset="1.000" stop-color="#992100"/></linearGradient><linearGradient id="o55" gradientUnits="userSpaceOnUse" x1="1153" x2="1751"><stop offset=".000" stop-color="#009930"/><stop offset=".396" stop-color="#009909"/><stop offset=".517" stop-color="#489900"/><stop offset=".624" stop-color="#989900"/><stop offset=".689" stop-color="#996e00"/><stop offset=".768" stop-color="#994e00"/><stop offset="1.000" stop-color="#992000"/></linearGradient><linearGradient id="o56" gradientUnits="userSpaceOnUse" x1="1153" x2="1751"><stop offset=".000" stop-color="#009931"/><stop offset=".395" stop-color="#00990b"/><stop offset=".515" stop-color="#489900"/><stop offset=".620" stop-color="#999900"/><stop offset=".684" stop-color="#996e00"/><stop offset=".764" stop-color="#994d00"/><stop offset="1.000" stop-color="#991f00"/></linearGradient><linearGradient id="o57" gradientUnits="userSpaceOnUse" x1="1153" x2="1751"><stop offset=".000" stop-color="#009932"/><stop offset=".393" stop-color="#00990d"/><stop offset=".510" stop-color="#479900"/><stop offset=".615" stop-color="#989900"/><stop offset=".682" stop-color="#996d00"/><stop offset=".763" stop-color="#994c00"/><stop offset="1.000" stop-color="#991e00"/></linearGradient><linearGradient id="o58" gradientUnits="userSpaceOnUse" x1="1153" x2="1751"><stop offset=".000" stop-color="#009934"/><stop offset=".391" stop-color="#00990e"/><stop offset=".508" stop-color="#489900"/><stop offset=".612" stop-color="#999900"/><stop offset=".677" stop-color="#996d00"/><stop offset=".759" stop-color="#994c00"/><stop offset="1.000" stop-color="#991d00"/></linearGradient><linearGradient id="o59" gradientUnits="userSpaceOnUse" x1="1153" x2="1751"><stop offset=".000" stop-color="#009935"/><stop offset=".390" stop-color="#009910"/><stop offset=".505" stop-color="#489900"/><stop offset=".609" stop-color="#999900"/><stop offset=".672" stop-color="#996d00"/><stop offset=".756" stop-color="#994b00"/><stop offset="1.000" stop-color="#991c00"/></linearGradient><linearGradient id="o60" gradientUnits="userSpaceOnUse" x1="1153" x2="1751"><stop offset=".000" stop-color="#009936"/><stop offset=".386" stop-color="#009912"/><stop offset=".500" stop-color="#469901"/><stop offset=".604" stop-color="#989900"/><stop offset=".671" stop-color="#996c00"/><stop offset=".753" stop-color="#994a00"/><stop offset=".860" stop-color="#993000"/><stop offset="1.000" stop-color="#991c00"/></linearGradient><linearGradient id="o61" gradientUnits="userSpaceOnUse" x1="1153" x2="1751"><stop offset=".000" stop-color="#009938"/><stop offset=".385" stop-color="#009913"/><stop offset=".498" stop-color="#479903"/><stop offset=".600" stop-color="#999900"/><stop offset=".666" stop-color="#996c00"/><stop offset=".749" stop-color="#994a00"/><stop offset=".858" stop-color="#992f00"/><stop offset="1.000" stop-color="#991b00"/></linearGradient><linearGradient id="o62" gradientUnits="userSpaceOnUse" x1="1153" x2="1751"><stop offset=".000" stop-color="#009939"/><stop offset=".383" stop-color="#009915"/><stop offset=".495" stop-color="#479905"/><stop offset=".595" stop-color="#989900"/><stop offset=".662" stop-color="#996b00"/><stop offset=".746" stop-color="#994900"/><stop offset=".856" stop-color="#992e00"/><stop offset="1.000" stop-color="#991a00"/></linearGradient><linearGradient id="o63" gradientUnits="userSpaceOnUse" x1="1153" x2="1751"><stop offset=".000" stop-color="#00993b"/><stop offset=".381" stop-color="#009917"/><stop offset=".492" stop-color="#479907"/><stop offset=".592" stop-color="#989900"/><stop offset=".659" stop-color="#996b00"/><stop offset=".742" stop-color="#994800"/><stop offset=".855" stop-color="#992d00"/><stop offset="1.000" stop-color="#991900"/></linearGradient><linearGradient id="o64" gradientUnits="userSpaceOnUse" x1="1153" x2="1751"><stop offset=".000" stop-color="#00993c"/><stop offset=".380" stop-color="#009919"/><stop offset=".490" stop-color="#489908"/><stop offset=".589" stop-color="#999900"/><stop offset=".654" stop-color="#996b00"/><stop offset=".739" stop-color="#994800"/><stop offset=".851" stop-color="#992d00"/><stop offset="1.000" stop-color="#991800"/></linearGradient><linearGradient id="o65" gradientUnits="userSpaceOnUse" x1="1153" x2="1751"><stop offset=".000" stop-color="#00993d"/><stop offset=".378" stop-color="#00991a"/><stop offset=".487" stop-color="#47990b"/><stop offset=".584" stop-color="#989900"/><stop offset=".651" stop-color="#996a00"/><stop offset=".737" stop-color="#994600"/><stop offset=".851" stop-color="#992b00"/><stop offset="1.000" stop-color="#991700"/></linearGradient><linearGradient id="o66" gradientUnits="userSpaceOnUse" x1="1153" x2="1751"><stop offset=".000" stop-color="#00993f"/><stop offset=".376" stop-color="#00991c"/><stop offset=".485" stop-color="#48990c"/><stop offset=".580" stop-color="#999900"/><stop offset=".647" stop-color="#996900"/><stop offset=".734" stop-color="#994600"/><stop offset=".849" stop-color="#992b00"/><stop offset="1.000" stop-color="#991600"/></linearGradient><linearGradient id="o67" gradientUnits="userSpaceOnUse" x1="1153" x2="1751"><stop offset=".000" stop-color="#009940"/><stop offset=".375" stop-color="#00991e"/><stop offset=".482" stop-color="#48990f"/><stop offset=".575" stop-color="#989900"/><stop offset=".644" stop-color="#996800"/><stop offset=".731" stop-color="#994500"/><stop offset=".846" stop-color="#992a00"/><stop offset="1.000" stop-color="#991500"/></linearGradient><linearGradient id="o68" gradientUnits="userSpaceOnUse" x1="1153" x2="1751"><stop offset=".000" stop-color="#009942"/><stop offset=".373" stop-color="#009920"/><stop offset=".478" stop-color="#489911"/><stop offset=".572" stop-color="#989900"/><stop offset=".639" stop-color="#996900"/><stop offset=".727" stop-color="#994400"/><stop offset=".844" stop-color="#992900"/><stop offset="1.000" stop-color="#991500"/></linearGradient><linearGradient id="o69" gradientUnits="userSpaceOnUse" x1="1153" x2="1751"><stop offset=".000" stop-color="#009944"/><stop offset=".371" stop-color="#009922"/><stop offset=".475" stop-color="#479913"/><stop offset=".569" stop-color="#999902"/><stop offset=".635" stop-color="#996800"/><stop offset=".724" stop-color="#994300"/><stop offset=".843" stop-color="#992800"/><stop offset="1.000" stop-color="#991400"/></linearGradient><linearGradient id="o70" gradientUnits="userSpaceOnUse" x1="1153" x2="1751"><stop offset=".000" stop-color="#009945"/><stop offset=".368" stop-color="#009924"/><stop offset=".470" stop-color="#469916"/><stop offset=".564" stop-color="#989905"/><stop offset=".632" stop-color="#996700"/><stop offset=".721" stop-color="#994300"/><stop offset=".839" stop-color="#992700"/><stop offset="1.000" stop-color="#991300"/></linearGradient><linearGradient id="o71" gradientUnits="userSpaceOnUse" x1="1153" x2="1751"><stop offset=".000" stop-color="#009947"/><stop offset=".366" stop-color="#009926"/><stop offset=".468" stop-color="#479918"/><stop offset=".560" stop-color="#999908"/><stop offset=".627" stop-color="#996700"/><stop offset=".717" stop-color="#994200"/><stop offset=".838" stop-color="#992700"/><stop offset="1.000" stop-color="#991200"/></linearGradient><linearGradient id="o72" gradientUnits="userSpaceOnUse" x1="1153" x2="1751"><stop offset=".000" stop-color="#009949"/><stop offset=".365" stop-color="#009928"/><stop offset=".465" stop-color="#47991b"/><stop offset=".555" stop-color="#98990b"/><stop offset=".625" stop-color="#996600"/><stop offset=".714" stop-color="#994100"/><stop offset=".836" stop-color="#992600"/><stop offset="1.000" stop-color="#991100"/></linearGradient><linearGradient id="o73" gradientUnits="userSpaceOnUse" x1="1153" x2="1751"><stop offset=".000" stop-color="#00994a"/><stop offset=".363" stop-color="#00992b"/><stop offset=".462" stop-color="#46991d"/><stop offset=".552" stop-color="#98990d"/><stop offset=".620" stop-color="#996600"/><stop offset=".711" stop-color="#994100"/><stop offset=".834" stop-color="#992500"/><stop offset="1.000" stop-color="#991000"/></linearGradient><linearGradient id="o74" gradientUnits="userSpaceOnUse" x1="1153" x2="1751"><stop offset=".000" stop-color="#00994c"/><stop offset=".361" stop-color="#00992d"/><stop offset=".460" stop-color="#47991f"/><stop offset=".548" stop-color="#999910"/><stop offset=".615" stop-color="#996601"/><stop offset=".707" stop-color="#994000"/><stop offset=".831" stop-color="#992400"/><stop offset="1.000" stop-color="#991000"/></linearGradient><linearGradient id="o75" gradientUnits="userSpaceOnUse" x1="1153" x2="1751"><stop offset=".000" stop-color="#00994e"/><stop offset=".360" stop-color="#00992f"/><stop offset=".457" stop-color="#479922"/><stop offset=".543" stop-color="#989913"/><stop offset=".612" stop-color="#996503"/><stop offset=".704" stop-color="#993f00"/><stop offset=".829" stop-color="#992300"/><stop offset="1.000" stop-color="#990f00"/></linearGradient><linearGradient id="o76" gradientUnits="userSpaceOnUse" x1="1153" x2="1751"><stop offset=".000" stop-color="#009950"/><stop offset=".358" stop-color="#009931"/><stop offset=".455" stop-color="#489924"/><stop offset=".540" stop-color="#999916"/><stop offset=".609" stop-color="#996405"/><stop offset=".701" stop-color="#993e00"/><stop offset=".828" stop-color="#992200"/><stop offset="1.000" stop-color="#990e00"/></linearGradient><linearGradient id="o77" gradientUnits="userSpaceOnUse" x1="1153" x2="1751"><stop offset=".000" stop-color="#009951"/><stop offset=".356" stop-color="#009934"/><stop offset=".452" stop-color="#489927"/><stop offset=".535" stop-color="#989919"/><stop offset=".605" stop-color="#996307"/><stop offset=".697" stop-color="#993d00"/><stop offset=".824" stop-color="#992200"/><stop offset="1.000" stop-color="#990d00"/></linearGradient><linearGradient id="o78" gradientUnits="userSpaceOnUse" x1="1153" x2="1751"><stop offset=".000" stop-color="#009953"/><stop offset=".355" stop-color="#009936"/><stop offset=".448" stop-color="#48992a"/><stop offset=".532" stop-color="#98991c"/><stop offset=".600" stop-color="#996309"/><stop offset=".694" stop-color="#993d00"/><stop offset=".823" stop-color="#992100"/><stop offset="1.000" stop-color="#990c00"/></linearGradient><linearGradient id="o79" gradientUnits="userSpaceOnUse" x1="1153" x2="1751"><stop offset=".000" stop-color="#009955"/><stop offset=".353" stop-color="#009939"/><stop offset=".446" stop-color="#49992d"/><stop offset=".528" stop-color="#99991f"/><stop offset=".597" stop-color="#99630b"/><stop offset=".691" stop-color="#993c00"/><stop offset=".821" stop-color="#992000"/><stop offset="1.000" stop-color="#990c00"/></linearGradient><linearGradient id="o80" gradientUnits="userSpaceOnUse" x1="1153" x2="1751"><stop offset=".000" stop-color="#009957"/><stop offset=".349" stop-color="#00993c"/><stop offset=".440" stop-color="#459930"/><stop offset=".523" stop-color="#989923"/><stop offset=".594" stop-color="#99620d"/><stop offset=".687" stop-color="#993b00"/><stop offset=".818" stop-color="#991f00"/><stop offset="1.000" stop-color="#990b00"/></linearGradient><linearGradient id="o81" gradientUnits="userSpaceOnUse" x1="1153" x2="1751"><stop offset=".000" stop-color="#009959"/><stop offset=".348" stop-color="#00993e"/><stop offset=".438" stop-color="#479933"/><stop offset=".520" stop-color="#999926"/><stop offset=".589" stop-color="#996210"/><stop offset=".684" stop-color="#993a00"/><stop offset=".816" stop-color="#991e00"/><stop offset="1.000" stop-color="#990a00"/></linearGradient><linearGradient id="o82" gradientUnits="userSpaceOnUse" x1="1153" x2="1751"><stop offset=".000" stop-color="#00995b"/><stop offset=".346" stop-color="#009941"/><stop offset=".435" stop-color="#469936"/><stop offset=".515" stop-color="#97992a"/><stop offset=".585" stop-color="#996112"/><stop offset=".681" stop-color="#993901"/><stop offset=".814" stop-color="#991d00"/><stop offset="1.000" stop-color="#990900"/></linearGradient><linearGradient id="o83" gradientUnits="userSpaceOnUse" x1="1153" x2="1751"><stop offset=".000" stop-color="#00995d"/><stop offset=".344" stop-color="#009944"/><stop offset=".431" stop-color="#469939"/><stop offset=".513" stop-color="#99982d"/><stop offset=".582" stop-color="#996014"/><stop offset=".677" stop-color="#993902"/><stop offset=".811" stop-color="#991d00"/><stop offset="1.000" stop-color="#990800"/></linearGradient><linearGradient id="o84" gradientUnits="userSpaceOnUse" x1="1153" x2="1751"><stop offset=".000" stop-color="#00995f"/><stop offset=".343" stop-color="#009947"/><stop offset=".430" stop-color="#47993c"/><stop offset=".508" stop-color="#999931"/><stop offset=".577" stop-color="#996016"/><stop offset=".672" stop-color="#993804"/><stop offset=".808" stop-color="#991c00"/><stop offset="1.000" stop-color="#990800"/></linearGradient><linearGradient id="o85" gradientUnits="userSpaceOnUse" x1="1153" x2="1751"><stop offset=".000" stop-color="#009962"/><stop offset=".341" stop-color="#00994a"/><stop offset=".426" stop-color="#479940"/><stop offset=".505" stop-color="#999834"/><stop offset=".574" stop-color="#995f19"/><stop offset=".669" stop-color="#993706"/><stop offset=".806" stop-color="#991b00"/><stop offset="1.000" stop-color="#990700"/></linearGradient><linearGradient id="o86" gradientUnits="userSpaceOnUse" x1="1153" x2="1751"><stop offset=".000" stop-color="#009964"/><stop offset=".339" stop-color="#00994d"/><stop offset=".421" stop-color="#459943"/><stop offset=".502" stop-color="#999838"/><stop offset=".570" stop-color="#995e1b"/><stop offset=".667" stop-color="#993607"/><stop offset=".804" stop-color="#991a00"/><stop offset="1.000" stop-color="#990600"/></linearGradient><linearGradient id="o87" gradientUnits="userSpaceOnUse" x1="1153" x2="1751"><stop offset=".000" stop-color="#009966"/><stop offset=".338" stop-color="#009950"/><stop offset=".421" stop-color="#489947"/><stop offset=".497" stop-color="#99993c"/><stop offset=".565" stop-color="#995e1e"/><stop offset=".662" stop-color="#993609"/><stop offset=".801" stop-color="#991900"/><stop offset="1.000" stop-color="#990500"/></linearGradient><linearGradient id="o88" gradientUnits="userSpaceOnUse" x1="1153" x2="1751"><stop offset=".000" stop-color="#009968"/><stop offset=".336" stop-color="#009953"/><stop offset=".416" stop-color="#46994a"/><stop offset=".493" stop-color="#999840"/><stop offset=".562" stop-color="#995d20"/><stop offset=".659" stop-color="#99350a"/><stop offset=".799" stop-color="#991800"/><stop offset="1.000" stop-color="#990500"/></linearGradient><linearGradient id="o89" gradientUnits="userSpaceOnUse" x1="1153" x2="1751"><stop offset=".000" stop-color="#00996b"/><stop offset=".334" stop-color="#009956"/><stop offset=".416" stop-color="#49994e"/><stop offset=".488" stop-color="#999944"/><stop offset=".557" stop-color="#995d23"/><stop offset=".656" stop-color="#99340c"/><stop offset=".796" stop-color="#991800"/><stop offset="1.000" stop-color="#990400"/></linearGradient><linearGradient id="o90" gradientUnits="userSpaceOnUse" x1="1153" x2="1751"><stop offset=".000" stop-color="#00996d"/><stop offset=".331" stop-color="#00995a"/><stop offset=".410" stop-color="#459952"/><stop offset=".485" stop-color="#999848"/><stop offset=".554" stop-color="#995c25"/><stop offset=".652" stop-color="#99330d"/><stop offset=".756" stop-color="#991d00"/><stop offset="1.000" stop-color="#990300"/></linearGradient><linearGradient id="o91" gradientUnits="userSpaceOnUse" x1="1153" x2="1751"><stop offset=".000" stop-color="#009970"/><stop offset=".329" stop-color="#00995d"/><stop offset=".406" stop-color="#449956"/><stop offset=".482" stop-color="#99974c"/><stop offset=".550" stop-color="#995b28"/><stop offset=".649" stop-color="#99320f"/><stop offset=".764" stop-color="#991a00"/><stop offset="1.000" stop-color="#990200"/></linearGradient><linearGradient id="o92" gradientUnits="userSpaceOnUse" x1="1153" x2="1751"><stop offset=".000" stop-color="#009972"/><stop offset=".328" stop-color="#009961"/><stop offset=".405" stop-color="#46995a"/><stop offset=".477" stop-color="#999952"/><stop offset=".545" stop-color="#995b2b"/><stop offset=".644" stop-color="#993211"/><stop offset=".771" stop-color="#991800"/><stop offset="1.000" stop-color="#990200"/></linearGradient><linearGradient id="o93" gradientUnits="userSpaceOnUse" x1="1153" x2="1751"><stop offset=".000" stop-color="#009975"/><stop offset=".326" stop-color="#009964"/><stop offset=".401" stop-color="#45995e"/><stop offset=".473" stop-color="#999856"/><stop offset=".542" stop-color="#995a2d"/><stop offset=".640" stop-color="#993112"/><stop offset=".779" stop-color="#991500"/><stop offset="1.000" stop-color="#990100"/></linearGradient><linearGradient id="o94" gradientUnits="userSpaceOnUse" x1="1153" x2="1751"><stop offset=".000" stop-color="#009977"/><stop offset=".324" stop-color="#009968"/><stop offset=".400" stop-color="#479962"/><stop offset=".468" stop-color="#99995b"/><stop offset=".537" stop-color="#995a31"/><stop offset=".637" stop-color="#993014"/><stop offset=".788" stop-color="#991300"/><stop offset="1.000" stop-color="#990000"/></linearGradient><linearGradient id="o95" gradientUnits="userSpaceOnUse" x1="1153" x2="1751"><stop offset=".000" stop-color="#00997a"/><stop offset=".323" stop-color="#00996c"/><stop offset=".396" stop-color="#469967"/><stop offset=".465" stop-color="#999860"/><stop offset=".495" stop-color="#997648"/><stop offset=".533" stop-color="#995933"/><stop offset=".634" stop-color="#992f15"/><stop offset=".796" stop-color="#991100"/><stop offset="1.000" stop-color="#990000"/></linearGradient><linearGradient id="o96" gradientUnits="userSpaceOnUse" x1="1153" x2="1751"><stop offset=".000" stop-color="#00997d"/><stop offset=".321" stop-color="#009970"/><stop offset=".393" stop-color="#46996b"/><stop offset=".462" stop-color="#999764"/><stop offset=".492" stop-color="#99754b"/><stop offset=".530" stop-color="#995836"/><stop offset=".632" stop-color="#992e17"/><stop offset=".804" stop-color="#990f00"/><stop offset="1.000" stop-color="#990000"/></linearGradient><linearGradient id="o97" gradientUnits="userSpaceOnUse" x1="1153" x2="1751"><stop offset=".000" stop-color="#009980"/><stop offset=".319" stop-color="#009974"/><stop offset=".391" stop-color="#479970"/><stop offset=".457" stop-color="#99996a"/><stop offset=".487" stop-color="#997650"/><stop offset=".525" stop-color="#995839"/><stop offset=".627" stop-color="#992d19"/><stop offset=".813" stop-color="#990d00"/><stop offset="1.000" stop-color="#990000"/></linearGradient><linearGradient id="o98" gradientUnits="userSpaceOnUse" x1="1153" x2="1751"><stop offset=".000" stop-color="#009983"/><stop offset=".318" stop-color="#009978"/><stop offset=".388" stop-color="#479975"/><stop offset=".453" stop-color="#99986f"/><stop offset=".483" stop-color="#997554"/><stop offset=".522" stop-color="#99573c"/><stop offset=".625" stop-color="#992c1a"/><stop offset=".821" stop-color="#990b00"/><stop offset="1.000" stop-color="#990000"/></linearGradient><linearGradient id="o99" gradientUnits="userSpaceOnUse" x1="1153" x2="1751"><stop offset=".000" stop-color="#009986"/><stop offset=".316" stop-color="#01997d"/><stop offset=".383" stop-color="#45997a"/><stop offset=".450" stop-color="#999774"/><stop offset=".480" stop-color="#997457"/><stop offset=".518" stop-color="#99563f"/><stop offset=".622" stop-color="#992b1c"/><stop offset=".829" stop-color="#990900"/><stop offset="1.000" stop-color="#990000"/></linearGradient><linearGradient id="o100" gradientUnits="userSpaceOnUse" x1="1153" x2="1751"><stop offset=".000" stop-color="#009989"/><stop offset=".313" stop-color="#009981"/><stop offset=".380" stop-color="#44997f"/><stop offset=".445" stop-color="#99987b"/><stop offset=".475" stop-color="#99745c"/><stop offset=".513" stop-color="#995643"/><stop offset=".619" stop-color="#992a1d"/><stop offset=".838" stop-color="#990700"/><stop offset="1.000" stop-color="#990000"/></linearGradient><linearGradient id="o101" gradientUnits="userSpaceOnUse" x1="1153" x2="1751"><stop offset=".000" stop-color="#00998c"/><stop offset=".311" stop-color="#009986"/><stop offset=".376" stop-color="#449984"/><stop offset=".441" stop-color="#999780"/><stop offset=".472" stop-color="#997360"/><stop offset=".510" stop-color="#995546"/><stop offset=".615" stop-color="#99291f"/><stop offset=".831" stop-color="#990701"/><stop offset="1.000" stop-color="#990000"/></linearGradient><linearGradient id="o102" gradientUnits="userSpaceOnUse" x1="1153" x2="1751"><stop offset=".000" stop-color="#00998f"/><stop offset=".309" stop-color="#00998b"/><stop offset=".376" stop-color="#479989"/><stop offset=".436" stop-color="#999988"/><stop offset=".467" stop-color="#997466"/><stop offset=".505" stop-color="#99554a"/><stop offset=".610" stop-color="#992821"/><stop offset=".821" stop-color="#990703"/><stop offset="1.000" stop-color="#990000"/></linearGradient><linearGradient id="o103" gradientUnits="userSpaceOnUse" x1="1153" x2="1751"><stop offset=".000" stop-color="#009993"/><stop offset=".308" stop-color="#009990"/><stop offset=".371" stop-color="#45998f"/><stop offset=".433" stop-color="#99988d"/><stop offset=".463" stop-color="#99726a"/><stop offset=".502" stop-color="#99534d"/><stop offset=".609" stop-color="#992723"/><stop offset=".814" stop-color="#990604"/><stop offset="1.000" stop-color="#990000"/></linearGradient><linearGradient id="o104" gradientUnits="userSpaceOnUse" x1="1153" x2="1751"><stop offset=".000" stop-color="#009996"/><stop offset=".306" stop-color="#009995"/><stop offset=".368" stop-color="#449995"/><stop offset=".430" stop-color="#999793"/><stop offset=".460" stop-color="#99716e"/><stop offset=".498" stop-color="#995250"/><stop offset=".605" stop-color="#992624"/><stop offset=".806" stop-color="#990605"/><stop offset="1.000" stop-color="#990000"/></linearGradient><linearGradient id="o105" gradientUnits="userSpaceOnUse" x1="1153" x2="1751"><stop offset=".000" stop-color="#009899"/><stop offset=".304" stop-color="#009799"/><stop offset=".368" stop-color="#479799"/><stop offset=".426" stop-color="#999698"/><stop offset=".457" stop-color="#997072"/><stop offset=".495" stop-color="#995153"/><stop offset=".602" stop-color="#992526"/><stop offset=".806" stop-color="#990506"/><stop offset="1.000" stop-color="#990000"/></linearGradient><linearGradient id="o106" gradientUnits="userSpaceOnUse" x1="1153" x2="1751"><stop offset=".000" stop-color="#009599"/><stop offset=".303" stop-color="#009299"/><stop offset=".368" stop-color="#489199"/><stop offset=".426" stop-color="#998f99"/><stop offset=".457" stop-color="#996b73"/><stop offset=".495" stop-color="#994e54"/><stop offset=".602" stop-color="#992327"/><stop offset=".813" stop-color="#990406"/><stop offset="1.000" stop-color="#990000"/></linearGradient><linearGradient id="o107" gradientUnits="userSpaceOnUse" x1="1153" x2="1751"><stop offset=".000" stop-color="#009199"/><stop offset=".301" stop-color="#008d99"/><stop offset=".365" stop-color="#458b99"/><stop offset=".428" stop-color="#998797"/><stop offset=".460" stop-color="#996470"/><stop offset=".498" stop-color="#994853"/><stop offset=".605" stop-color="#992027"/><stop offset=".824" stop-color="#990206"/><stop offset="1.000" stop-color="#990000"/></linearGradient><linearGradient id="o108" gradientUnits="userSpaceOnUse" x1="1153" x2="1751"><stop offset=".000" stop-color="#008e99"/><stop offset=".299" stop-color="#008899"/><stop offset=".365" stop-color="#458699"/><stop offset=".428" stop-color="#998197"/><stop offset=".460" stop-color="#996071"/><stop offset=".498" stop-color="#994554"/><stop offset=".605" stop-color="#991f28"/><stop offset=".831" stop-color="#990006"/><stop offset="1.000" stop-color="#990000"/></linearGradient><linearGradient id="o109" gradientUnits="userSpaceOnUse" x1="1153" x2="1751"><stop offset=".000" stop-color="#008b99"/><stop offset=".298" stop-color="#018399"/><stop offset=".365" stop-color="#468099"/><stop offset=".428" stop-color="#997c98"/><stop offset=".460" stop-color="#995c72"/><stop offset=".498" stop-color="#994254"/><stop offset=".605" stop-color="#991d29"/><stop offset=".819" stop-color="#990007"/><stop offset="1.000" stop-color="#990000"/></linearGradient><linearGradient id="o110" gradientUnits="userSpaceOnUse" x1="1153" x2="1751"><stop offset=".000" stop-color="#008799"/><stop offset=".294" stop-color="#007e99"/><stop offset=".363" stop-color="#457b99"/><stop offset=".428" stop-color="#997698"/><stop offset=".460" stop-color="#995773"/><stop offset=".498" stop-color="#993f55"/><stop offset=".605" stop-color="#991b2a"/><stop offset=".808" stop-color="#990009"/><stop offset="1.000" stop-color="#990000"/></linearGradient><linearGradient id="o111" gradientUnits="userSpaceOnUse" x1="1153" x2="1751"><stop offset=".000" stop-color="#008499"/><stop offset=".293" stop-color="#007a99"/><stop offset=".363" stop-color="#467699"/><stop offset=".428" stop-color="#997199"/><stop offset=".460" stop-color="#995474"/><stop offset=".498" stop-color="#993c56"/><stop offset=".605" stop-color="#99192b"/><stop offset=".796" stop-color="#99000b"/><stop offset="1.000" stop-color="#990000"/></linearGradient><linearGradient id="o112" gradientUnits="userSpaceOnUse" x1="1153" x2="1751"><stop offset=".000" stop-color="#008199"/><stop offset=".291" stop-color="#007699"/><stop offset=".363" stop-color="#477199"/><stop offset=".428" stop-color="#996c99"/><stop offset=".460" stop-color="#995074"/><stop offset=".500" stop-color="#993856"/><stop offset=".607" stop-color="#99172b"/><stop offset=".784" stop-color="#99000d"/><stop offset="1.000" stop-color="#990000"/></linearGradient><linearGradient id="o113" gradientUnits="userSpaceOnUse" x1="1153" x2="1751"><stop offset=".000" stop-color="#007e99"/><stop offset=".289" stop-color="#007199"/><stop offset=".360" stop-color="#446c99"/><stop offset=".430" stop-color="#996597"/><stop offset=".462" stop-color="#994b74"/><stop offset=".502" stop-color="#993556"/><stop offset=".609" stop-color="#99152b"/><stop offset=".773" stop-color="#99000f"/><stop offset="1.000" stop-color="#990000"/></linearGradient><linearGradient id="o114" gradientUnits="userSpaceOnUse" x1="1153" x2="1751"><stop offset=".000" stop-color="#007b99"/><stop offset=".288" stop-color="#006d99"/><stop offset=".360" stop-color="#456899"/><stop offset=".430" stop-color="#996098"/><stop offset=".462" stop-color="#994774"/><stop offset=".502" stop-color="#993257"/><stop offset=".609" stop-color="#99142c"/><stop offset=".759" stop-color="#990011"/><stop offset="1.000" stop-color="#990000"/></linearGradient><linearGradient id="o115" gradientUnits="userSpaceOnUse" x1="1153" x2="1751"><stop offset=".000" stop-color="#007899"/><stop offset=".286" stop-color="#006999"/><stop offset=".360" stop-color="#466399"/><stop offset=".430" stop-color="#995c98"/><stop offset=".462" stop-color="#994375"/><stop offset=".502" stop-color="#992f58"/><stop offset=".609" stop-color="#99122d"/><stop offset=".747" stop-color="#990013"/><stop offset="1.000" stop-color="#990000"/></linearGradient><linearGradient id="o116" gradientUnits="userSpaceOnUse" x1="1153" x2="1751"><stop offset=".000" stop-color="#007599"/><stop offset=".284" stop-color="#006599"/><stop offset=".361" stop-color="#485f99"/><stop offset=".430" stop-color="#995799"/><stop offset=".462" stop-color="#994076"/><stop offset=".502" stop-color="#992d59"/><stop offset=".609" stop-color="#99102e"/><stop offset=".736" stop-color="#990015"/><stop offset="1.000" stop-color="#990000"/></linearGradient><linearGradient id="o117" gradientUnits="userSpaceOnUse" x1="1153" x2="1751"><stop offset=".000" stop-color="#007299"/><stop offset=".283" stop-color="#006299"/><stop offset=".361" stop-color="#495b99"/><stop offset=".430" stop-color="#995399"/><stop offset=".462" stop-color="#993d77"/><stop offset=".502" stop-color="#992a59"/><stop offset=".609" stop-color="#990f2f"/><stop offset=".724" stop-color="#990018"/><stop offset="1.000" stop-color="#990000"/></linearGradient><linearGradient id="o118" gradientUnits="userSpaceOnUse" x1="1153" x2="1751"><stop offset=".000" stop-color="#006f99"/><stop offset=".281" stop-color="#005e99"/><stop offset=".356" stop-color="#445799"/><stop offset=".431" stop-color="#994d97"/><stop offset=".463" stop-color="#993876"/><stop offset=".503" stop-color="#992759"/><stop offset=".610" stop-color="#990d2f"/><stop offset=".771" stop-color="#990012"/><stop offset="1.000" stop-color="#990000"/></linearGradient><linearGradient id="o119" gradientUnits="userSpaceOnUse" x1="1153" x2="1751"><stop offset=".000" stop-color="#006c99"/><stop offset=".279" stop-color="#005b99"/><stop offset=".356" stop-color="#455399"/><stop offset=".431" stop-color="#994998"/><stop offset=".503" stop-color="#99245a"/><stop offset=".610" stop-color="#990b30"/><stop offset=".769" stop-color="#990013"/><stop offset="1.000" stop-color="#990000"/></linearGradient><linearGradient id="o120" gradientUnits="userSpaceOnUse" x1="1153" x2="1751"><stop offset=".000" stop-color="#006a99"/><stop offset=".276" stop-color="#005799"/><stop offset=".355" stop-color="#444f99"/><stop offset=".431" stop-color="#994598"/><stop offset=".465" stop-color="#993176"/><stop offset=".505" stop-color="#99215a"/><stop offset=".612" stop-color="#990930"/><stop offset=".769" stop-color="#990014"/><stop offset="1.000" stop-color="#990000"/></linearGradient><linearGradient id="o121" gradientUnits="userSpaceOnUse" x1="1153" x2="1751"><stop offset=".000" stop-color="#006799"/><stop offset=".274" stop-color="#005499"/><stop offset=".355" stop-color="#454b99"/><stop offset=".431" stop-color="#994198"/><stop offset=".505" stop-color="#991f5b"/><stop offset=".612" stop-color="#990831"/><stop offset=".769" stop-color="#990014"/><stop offset="1.000" stop-color="#990001"/></linearGradient><linearGradient id="o122" gradientUnits="userSpaceOnUse" x1="1153" x2="1751"><stop offset=".000" stop-color="#006499"/><stop offset=".273" stop-color="#005199"/><stop offset=".356" stop-color="#474799"/><stop offset=".431" stop-color="#993d99"/><stop offset=".505" stop-color="#991c5b"/><stop offset=".612" stop-color="#990632"/><stop offset=".769" stop-color="#990015"/><stop offset="1.000" stop-color="#990001"/></linearGradient><linearGradient id="o123" gradientUnits="userSpaceOnUse" x1="1153" x2="1751"><stop offset=".000" stop-color="#006299"/><stop offset=".271" stop-color="#004d99"/><stop offset=".355" stop-color="#464499"/><stop offset=".431" stop-color="#993999"/><stop offset=".505" stop-color="#991a5c"/><stop offset=".614" stop-color="#990532"/><stop offset=".771" stop-color="#990015"/><stop offset="1.000" stop-color="#990002"/></linearGradient><linearGradient id="o124" gradientUnits="userSpaceOnUse" x1="1153" x2="1751"><stop offset=".000" stop-color="#005f99"/><stop offset=".269" stop-color="#004a99"/><stop offset=".353" stop-color="#454199"/><stop offset=".433" stop-color="#993498"/><stop offset=".507" stop-color="#99175c"/><stop offset=".615" stop-color="#990332"/><stop offset=".773" stop-color="#990016"/><stop offset="1.000" stop-color="#990002"/></linearGradient><linearGradient id="o125" gradientUnits="userSpaceOnUse" x1="1153" x2="1751"><stop offset=".000" stop-color="#005d99"/><stop offset=".268" stop-color="#004799"/><stop offset=".353" stop-color="#463d99"/><stop offset=".433" stop-color="#993198"/><stop offset=".507" stop-color="#99155d"/><stop offset=".615" stop-color="#990133"/><stop offset=".773" stop-color="#990016"/><stop offset="1.000" stop-color="#990003"/></linearGradient><linearGradient id="o126" gradientUnits="userSpaceOnUse" x1="1153" x2="1751"><stop offset=".000" stop-color="#005a99"/><stop offset=".266" stop-color="#004499"/><stop offset=".353" stop-color="#473a99"/><stop offset=".433" stop-color="#992d98"/><stop offset=".508" stop-color="#99125c"/><stop offset=".617" stop-color="#990033"/><stop offset=".774" stop-color="#990017"/><stop offset="1.000" stop-color="#990003"/></linearGradient><linearGradient id="o127" gradientUnits="userSpaceOnUse" x1="1153" x2="1751"><stop offset=".000" stop-color="#005899"/><stop offset=".264" stop-color="#004299"/><stop offset=".353" stop-color="#473799"/><stop offset=".433" stop-color="#992a99"/><stop offset=".508" stop-color="#99105d"/><stop offset=".617" stop-color="#990034"/><stop offset=".774" stop-color="#990017"/><stop offset="1.000" stop-color="#990004"/></linearGradient><linearGradient id="o128" gradientUnits="userSpaceOnUse" x1="1153" x2="1751"><stop offset=".000" stop-color="#005599"/><stop offset=".263" stop-color="#003f99"/><stop offset=".353" stop-color="#483399"/><stop offset=".433" stop-color="#992699"/><stop offset=".508" stop-color="#990e5e"/><stop offset=".617" stop-color="#990034"/><stop offset=".774" stop-color="#990018"/><stop offset="1.000" stop-color="#990004"/></linearGradient><linearGradient id="o129" gradientUnits="userSpaceOnUse" x1="1153" x2="1751"><stop offset=".000" stop-color="#005399"/><stop offset=".261" stop-color="#003c99"/><stop offset=".349" stop-color="#463199"/><stop offset=".435" stop-color="#992298"/><stop offset=".510" stop-color="#990c5e"/><stop offset=".619" stop-color="#990035"/><stop offset=".776" stop-color="#990018"/><stop offset="1.000" stop-color="#990004"/></linearGradient><linearGradient id="o130" gradientUnits="userSpaceOnUse" x1="1153" x2="1751"><stop offset=".000" stop-color="#005199"/><stop offset=".259" stop-color="#013999"/><stop offset=".349" stop-color="#462e99"/><stop offset=".435" stop-color="#991f98"/><stop offset=".512" stop-color="#99095d"/><stop offset=".620" stop-color="#990035"/><stop offset=".776" stop-color="#990019"/><stop offset="1.000" stop-color="#990005"/></linearGradient><linearGradient id="o131" gradientUnits="userSpaceOnUse" x1="1153" x2="1751"><stop offset=".000" stop-color="#004e99"/><stop offset=".256" stop-color="#003799"/><stop offset=".348" stop-color="#462b99"/><stop offset=".435" stop-color="#991c98"/><stop offset=".512" stop-color="#99075e"/><stop offset=".620" stop-color="#990036"/><stop offset=".776" stop-color="#990019"/><stop offset="1.000" stop-color="#990005"/></linearGradient><linearGradient id="o132" gradientUnits="userSpaceOnUse" x1="1153" x2="1751"><stop offset=".000" stop-color="#004c99"/><stop offset=".254" stop-color="#003599"/><stop offset=".348" stop-color="#462899"/><stop offset=".435" stop-color="#991999"/><stop offset=".512" stop-color="#99055f"/><stop offset=".620" stop-color="#990036"/><stop offset=".778" stop-color="#99001a"/><stop offset="1.000" stop-color="#990006"/></linearGradient><linearGradient id="o133" gradientUnits="userSpaceOnUse" x1="1153" x2="1751"><stop offset=".000" stop-color="#004a99"/><stop offset=".253" stop-color="#003299"/><stop offset=".348" stop-color="#472599"/><stop offset=".435" stop-color="#991699"/><stop offset=".512" stop-color="#99035f"/><stop offset=".622" stop-color="#990037"/><stop offset=".778" stop-color="#99001a"/><stop offset="1.000" stop-color="#990006"/></linearGradient><linearGradient id="o134" gradientUnits="userSpaceOnUse" x1="1153" x2="1751"><stop offset=".000" stop-color="#004899"/><stop offset=".251" stop-color="#003099"/><stop offset=".348" stop-color="#472299"/><stop offset=".435" stop-color="#991399"/><stop offset=".512" stop-color="#990160"/><stop offset=".622" stop-color="#990037"/><stop offset=".778" stop-color="#99001b"/><stop offset="1.000" stop-color="#990007"/></linearGradient><linearGradient id="o135" gradientUnits="userSpaceOnUse" x1="1153" x2="1751"><stop offset=".000" stop-color="#004599"/><stop offset=".249" stop-color="#002d99"/><stop offset=".344" stop-color="#452099"/><stop offset=".436" stop-color="#991098"/><stop offset=".513" stop-color="#990060"/><stop offset=".624" stop-color="#990037"/><stop offset=".779" stop-color="#99001b"/><stop offset="1.000" stop-color="#990007"/></linearGradient><linearGradient id="o136" gradientUnits="userSpaceOnUse" x1="1153" x2="1751"><stop offset=".000" stop-color="#004399"/><stop offset=".247" stop-color="#002b99"/><stop offset=".346" stop-color="#471d99"/><stop offset=".436" stop-color="#990d98"/><stop offset=".515" stop-color="#99005f"/><stop offset=".625" stop-color="#990038"/><stop offset=".781" stop-color="#99001b"/><stop offset="1.000" stop-color="#990008"/></linearGradient><linearGradient id="o137" gradientUnits="userSpaceOnUse" x1="1153" x2="1751"><stop offset=".000" stop-color="#004199"/><stop offset=".246" stop-color="#002999"/><stop offset=".346" stop-color="#481b99"/><stop offset=".436" stop-color="#990a98"/><stop offset=".515" stop-color="#990060"/><stop offset=".625" stop-color="#990038"/><stop offset=".781" stop-color="#99001c"/><stop offset="1.000" stop-color="#990008"/></linearGradient><linearGradient id="o138" gradientUnits="userSpaceOnUse" x1="1153" x2="1751"><stop offset=".000" stop-color="#003f99"/><stop offset=".244" stop-color="#002799"/><stop offset=".346" stop-color="#481899"/><stop offset=".436" stop-color="#990899"/><stop offset=".515" stop-color="#990061"/><stop offset=".625" stop-color="#990039"/><stop offset=".781" stop-color="#99001d"/><stop offset="1.000" stop-color="#990008"/></linearGradient><linearGradient id="o139" gradientUnits="userSpaceOnUse" x1="1153" x2="1751"><stop offset=".000" stop-color="#003d99"/><stop offset=".242" stop-color="#002499"/><stop offset=".344" stop-color="#481699"/><stop offset=".436" stop-color="#990599"/><stop offset=".515" stop-color="#990061"/><stop offset=".625" stop-color="#990039"/><stop offset=".781" stop-color="#99001d"/><stop offset="1.000" stop-color="#990009"/></linearGradient><linearGradient id="o140" gradientUnits="userSpaceOnUse" x1="1153" x2="1751"><stop offset=".000" stop-color="#003b99"/><stop offset=".241" stop-color="#002299"/><stop offset=".343" stop-color="#471499"/><stop offset=".438" stop-color="#990298"/><stop offset=".517" stop-color="#990061"/><stop offset=".629" stop-color="#990039"/><stop offset=".784" stop-color="#99001d"/><stop offset="1.000" stop-color="#990009"/></linearGradient><linearGradient id="o141" gradientUnits="userSpaceOnUse" x1="1153" x2="1751"><stop offset=".000" stop-color="#003999"/><stop offset=".239" stop-color="#012099"/><stop offset=".343" stop-color="#471199"/><stop offset=".438" stop-color="#990098"/><stop offset=".518" stop-color="#990061"/><stop offset=".629" stop-color="#99003a"/><stop offset=".784" stop-color="#99001e"/><stop offset="1.000" stop-color="#99000a"/></linearGradient><linearGradient id="o142" gradientUnits="userSpaceOnUse" x1="1153" x2="1751"><stop offset=".000" stop-color="#003799"/><stop offset=".236" stop-color="#001e99"/><stop offset=".341" stop-color="#470f99"/><stop offset=".438" stop-color="#990098"/><stop offset=".518" stop-color="#990061"/><stop offset=".629" stop-color="#99003a"/><stop offset=".784" stop-color="#99001e"/><stop offset="1.000" stop-color="#99000a"/></linearGradient><linearGradient id="o143" gradientUnits="userSpaceOnUse" x1="1153" x2="1751"><stop offset=".000" stop-color="#003599"/><stop offset=".234" stop-color="#001c99"/><stop offset=".341" stop-color="#470d99"/><stop offset=".438" stop-color="#990099"/><stop offset=".518" stop-color="#990062"/><stop offset=".629" stop-color="#99003b"/><stop offset=".784" stop-color="#99001f"/><stop offset="1.000" stop-color="#99000b"/></linearGradient><linearGradient id="o144" gradientUnits="userSpaceOnUse" x1="1153" x2="1751"><stop offset=".000" stop-color="#003399"/><stop offset=".232" stop-color="#001b99"/><stop offset=".341" stop-color="#480a99"/><stop offset=".438" stop-color="#990099"/><stop offset=".518" stop-color="#990062"/><stop offset=".630" stop-color="#99003b"/><stop offset=".786" stop-color="#99001f"/><stop offset="1.000" stop-color="#99000b"/></linearGradient><linearGradient id="o145" gradientUnits="userSpaceOnUse" x1="1153" x2="1751"><stop offset=".000" stop-color="#003199"/><stop offset=".231" stop-color="#001999"/><stop offset=".338" stop-color="#460999"/><stop offset=".440" stop-color="#990098"/><stop offset=".520" stop-color="#990062"/><stop offset=".632" stop-color="#99003b"/><stop offset=".786" stop-color="#990020"/><stop offset="1.000" stop-color="#99000b"/></linearGradient><linearGradient id="o146" gradientUnits="userSpaceOnUse" x1="1153" x2="1751"><stop offset=".000" stop-color="#002f99"/><stop offset=".229" stop-color="#001799"/><stop offset=".338" stop-color="#460799"/><stop offset=".440" stop-color="#990098"/><stop offset=".520" stop-color="#990063"/><stop offset=".632" stop-color="#99003c"/><stop offset=".786" stop-color="#990020"/><stop offset="1.000" stop-color="#99000c"/></linearGradient><linearGradient id="o147" gradientUnits="userSpaceOnUse" x1="1153" x2="1751"><stop offset=".000" stop-color="#002e99"/><stop offset=".227" stop-color="#001599"/><stop offset=".338" stop-color="#470499"/><stop offset=".440" stop-color="#990098"/><stop offset=".520" stop-color="#990063"/><stop offset=".632" stop-color="#99003d"/><stop offset=".786" stop-color="#990021"/><stop offset="1.000" stop-color="#99000c"/></linearGradient><linearGradient id="o148" gradientUnits="userSpaceOnUse" x1="1153" x2="1751"><stop offset=".000" stop-color="#002c99"/><stop offset=".226" stop-color="#001399"/><stop offset=".338" stop-color="#470299"/><stop offset=".440" stop-color="#990099"/><stop offset=".520" stop-color="#990064"/><stop offset=".632" stop-color="#99003d"/><stop offset=".786" stop-color="#990021"/><stop offset="1.000" stop-color="#99000d"/></linearGradient><linearGradient id="o149" gradientUnits="userSpaceOnUse" x1="1153" x2="1751"><stop offset=".000" stop-color="#002a99"/><stop offset=".224" stop-color="#001199"/><stop offset=".338" stop-color="#480099"/><stop offset=".440" stop-color="#990099"/><stop offset=".522" stop-color="#990064"/><stop offset=".634" stop-color="#99003d"/><stop offset=".788" stop-color="#990021"/><stop offset="1.000" stop-color="#99000d"/></linearGradient><linearGradient id="o150" gradientUnits="userSpaceOnUse" x1="1153" x2="1751"><stop offset=".000" stop-color="#002899"/><stop offset=".222" stop-color="#001099"/><stop offset=".338" stop-color="#480099"/><stop offset=".440" stop-color="#990099"/><stop offset=".522" stop-color="#990064"/><stop offset=".634" stop-color="#99003e"/><stop offset=".788" stop-color="#990022"/><stop offset="1.000" stop-color="#99000d"/></linearGradient><linearGradient id="o151" gradientUnits="userSpaceOnUse" x1="1153" x2="1751"><stop offset=".000" stop-color="#002799"/><stop offset=".221" stop-color="#000e99"/><stop offset=".334" stop-color="#460099"/><stop offset=".441" stop-color="#990098"/><stop offset=".523" stop-color="#990064"/><stop offset=".635" stop-color="#99003e"/><stop offset=".789" stop-color="#990022"/><stop offset="1.000" stop-color="#99000e"/></linearGradient><linearGradient id="o152" gradientUnits="userSpaceOnUse" x1="1153" x2="1751"><stop offset=".000" stop-color="#002599"/><stop offset=".217" stop-color="#000d99"/><stop offset=".333" stop-color="#460099"/><stop offset=".441" stop-color="#990098"/><stop offset=".523" stop-color="#990064"/><stop offset=".635" stop-color="#99003e"/><stop offset=".789" stop-color="#990023"/><stop offset="1.000" stop-color="#99000e"/></linearGradient><linearGradient id="o153" gradientUnits="userSpaceOnUse" x1="1153" x2="1751"><stop offset=".000" stop-color="#002399"/><stop offset=".216" stop-color="#000b99"/><stop offset=".333" stop-color="#460099"/><stop offset=".441" stop-color="#990099"/><stop offset=".523" stop-color="#990065"/><stop offset=".637" stop-color="#99003f"/><stop offset=".791" stop-color="#990023"/><stop offset="1.000" stop-color="#99000f"/></linearGradient><linearGradient id="o154" gradientUnits="userSpaceOnUse" x1="1153" x2="1751"><stop offset=".000" stop-color="#002199"/><stop offset=".214" stop-color="#000999"/><stop offset=".333" stop-color="#470099"/><stop offset=".441" stop-color="#990099"/><stop offset=".523" stop-color="#990065"/><stop offset=".637" stop-color="#99003f"/><stop offset=".791" stop-color="#990023"/><stop offset="1.000" stop-color="#99000f"/></linearGradient><linearGradient id="o155" gradientUnits="userSpaceOnUse" x1="1153" x2="1751"><stop offset=".000" stop-color="#002099"/><stop offset=".212" stop-color="#000899"/><stop offset=".333" stop-color="#470099"/><stop offset=".441" stop-color="#990099"/><stop offset=".525" stop-color="#990065"/><stop offset=".637" stop-color="#990040"/><stop offset=".791" stop-color="#990024"/><stop offset="1.000" stop-color="#99000f"/></linearGradient><linearGradient id="o156" gradientUnits="userSpaceOnUse" x1="1153" x2="1751"><stop offset=".000" stop-color="#001e99"/><stop offset=".211" stop-color="#000699"/><stop offset=".331" stop-color="#470099"/><stop offset=".443" stop-color="#990098"/><stop offset=".527" stop-color="#990065"/><stop offset=".639" stop-color="#990040"/><stop offset=".793" stop-color="#990024"/><stop offset="1.000" stop-color="#990010"/></linearGradient><linearGradient id="o157" gradientUnits="userSpaceOnUse" x1="1153" x2="1751"><stop offset=".000" stop-color="#001d99"/><stop offset=".209" stop-color="#000599"/><stop offset=".331" stop-color="#470099"/><stop offset=".443" stop-color="#990098"/><stop offset=".527" stop-color="#990065"/><stop offset=".639" stop-color="#990040"/><stop offset=".793" stop-color="#990025"/><stop offset="1.000" stop-color="#990010"/></linearGradient><linearGradient id="o158" gradientUnits="userSpaceOnUse" x1="1153" x2="1751"><stop offset=".000" stop-color="#001b99"/><stop offset=".207" stop-color="#000399"/><stop offset=".331" stop-color="#480099"/><stop offset=".443" stop-color="#990098"/><stop offset=".527" stop-color="#990066"/><stop offset=".640" stop-color="#990040"/><stop offset=".793" stop-color="#990025"/><stop offset="1.000" stop-color="#990011"/></linearGradient><linearGradient id="o159" gradientUnits="userSpaceOnUse" x1="1153" x2="1751"><stop offset=".000" stop-color="#001999"/><stop offset=".206" stop-color="#000299"/><stop offset=".331" stop-color="#480099"/><stop offset=".443" stop-color="#990099"/><stop offset=".527" stop-color="#990066"/><stop offset=".640" stop-color="#990041"/><stop offset=".793" stop-color="#990025"/><stop offset="1.000" stop-color="#990011"/></linearGradient><linearGradient id="o160" gradientUnits="userSpaceOnUse" x1="1153" x2="1751"><stop offset=".000" stop-color="#001899"/><stop offset=".204" stop-color="#000099"/><stop offset=".331" stop-color="#480099"/><stop offset=".443" stop-color="#990099"/><stop offset=".527" stop-color="#990067"/><stop offset=".640" stop-color="#990041"/><stop offset=".793" stop-color="#990026"/><stop offset="1.000" stop-color="#990011"/></linearGradient><linearGradient id="o161" gradientUnits="userSpaceOnUse" x1="1153" x2="1751"><stop offset=".000" stop-color="#001699"/><stop offset=".202" stop-color="#000099"/><stop offset=".329" stop-color="#480099"/><stop offset=".443" stop-color="#990099"/><stop offset=".527" stop-color="#990067"/><stop offset=".640" stop-color="#990042"/><stop offset=".794" stop-color="#990026"/><stop offset="1.000" stop-color="#990012"/></linearGradient><linearGradient id="o162" gradientUnits="userSpaceOnUse" x1="1153" x2="1751"><stop offset=".000" stop-color="#001599"/><stop offset=".201" stop-color="#010099"/><stop offset=".328" stop-color="#470099"/><stop offset=".445" stop-color="#990098"/><stop offset=".528" stop-color="#990067"/><stop offset=".642" stop-color="#990042"/><stop offset=".794" stop-color="#990027"/><stop offset="1.000" stop-color="#990012"/></linearGradient><linearGradient id="o163" gradientUnits="userSpaceOnUse" x1="1153" x2="1751"><stop offset=".000" stop-color="#001399"/><stop offset=".197" stop-color="#000099"/><stop offset=".326" stop-color="#470099"/><stop offset=".445" stop-color="#990098"/><stop offset=".528" stop-color="#990067"/><stop offset=".642" stop-color="#990043"/><stop offset=".794" stop-color="#990027"/><stop offset="1.000" stop-color="#990013"/></linearGradient><linearGradient id="o164" gradientUnits="userSpaceOnUse" x1="1153" x2="1751"><stop offset=".000" stop-color="#001299"/><stop offset=".196" stop-color="#000099"/><stop offset=".326" stop-color="#470099"/><stop offset=".445" stop-color="#990099"/><stop offset=".530" stop-color="#990067"/><stop offset=".644" stop-color="#990043"/><stop offset=".796" stop-color="#990027"/><stop offset="1.000" stop-color="#990013"/></linearGradient><linearGradient id="o165" gradientUnits="userSpaceOnUse" x1="1153" x2="1751"><stop offset=".000" stop-color="#001099"/><stop offset=".194" stop-color="#000099"/><stop offset=".326" stop-color="#480099"/><stop offset=".445" stop-color="#990099"/><stop offset=".530" stop-color="#990068"/><stop offset=".644" stop-color="#990043"/><stop offset=".796" stop-color="#990028"/><stop offset="1.000" stop-color="#990013"/></linearGradient><linearGradient id="o166" gradientUnits="userSpaceOnUse" x1="1153" x2="1751"><stop offset=".000" stop-color="#000f99"/><stop offset=".192" stop-color="#000099"/><stop offset=".326" stop-color="#480099"/><stop offset=".445" stop-color="#990099"/><stop offset=".530" stop-color="#990068"/><stop offset=".644" stop-color="#990044"/><stop offset=".796" stop-color="#990028"/><stop offset="1.000" stop-color="#990014"/></linearGradient><linearGradient id="o167" gradientUnits="userSpaceOnUse" x1="1153" x2="1751"><stop offset=".000" stop-color="#000e99"/><stop offset=".191" stop-color="#000099"/><stop offset=".323" stop-color="#460099"/><stop offset=".446" stop-color="#990098"/><stop offset=".532" stop-color="#990068"/><stop offset=".645" stop-color="#990044"/><stop offset=".798" stop-color="#990028"/><stop offset="1.000" stop-color="#990014"/></linearGradient><linearGradient id="o168" gradientUnits="userSpaceOnUse" x1="1153" x2="1751"><stop offset=".000" stop-color="#000c99"/><stop offset=".189" stop-color="#000099"/><stop offset=".323" stop-color="#470099"/><stop offset=".446" stop-color="#990098"/><stop offset=".532" stop-color="#990068"/><stop offset=".645" stop-color="#990044"/><stop offset=".798" stop-color="#990029"/><stop offset="1.000" stop-color="#990014"/></linearGradient><linearGradient id="o169" gradientUnits="userSpaceOnUse" x1="1153" x2="1751"><stop offset=".000" stop-color="#000b99"/><stop offset=".187" stop-color="#000099"/><stop offset=".323" stop-color="#470099"/><stop offset=".446" stop-color="#990099"/><stop offset=".532" stop-color="#990069"/><stop offset=".647" stop-color="#990044"/><stop offset=".799" stop-color="#990029"/><stop offset="1.000" stop-color="#990015"/></linearGradient><linearGradient id="o170" gradientUnits="userSpaceOnUse" x1="1153" x2="1751"><stop offset=".000" stop-color="#000999"/><stop offset=".186" stop-color="#000099"/><stop offset=".323" stop-color="#480099"/><stop offset=".446" stop-color="#990099"/><stop offset=".533" stop-color="#990068"/><stop offset=".647" stop-color="#990045"/><stop offset=".799" stop-color="#99002a"/><stop offset="1.000" stop-color="#990015"/></linearGradient><linearGradient id="o171" gradientUnits="userSpaceOnUse" x1="1153" x2="1751"><stop offset=".000" stop-color="#000899"/><stop offset=".184" stop-color="#000099"/><stop offset=".323" stop-color="#480099"/><stop offset=".446" stop-color="#990099"/><stop offset=".533" stop-color="#990069"/><stop offset=".647" stop-color="#990045"/><stop offset=".799" stop-color="#99002a"/><stop offset="1.000" stop-color="#990016"/></linearGradient><linearGradient id="o172" gradientUnits="userSpaceOnUse" x1="1153" x2="1751"><stop offset=".000" stop-color="#000799"/><stop offset=".182" stop-color="#000099"/><stop offset=".323" stop-color="#480099"/><stop offset=".446" stop-color="#990099"/><stop offset=".533" stop-color="#990069"/><stop offset=".647" stop-color="#990046"/><stop offset=".799" stop-color="#99002a"/><stop offset="1.000" stop-color="#990016"/></linearGradient><linearGradient id="i0" gradientUnits="userSpaceOnUse" x1="1273" x2="1678"><stop offset=".000" stop-color="#00ff27"/><stop offset=".309" stop-color="#01ff00"/><stop offset=".496" stop-color="#77ff00"/><stop offset=".664" stop-color="#feff00"/><stop offset=".733" stop-color="#ffcb00"/><stop offset=".807" stop-color="#ffa300"/><stop offset="1.000" stop-color="#ff6300"/></linearGradient><linearGradient id="i1" gradientUnits="userSpaceOnUse" x1="1273" x2="1678"><stop offset=".000" stop-color="#00ff29"/><stop offset=".304" stop-color="#00ff02"/><stop offset=".491" stop-color="#77ff00"/><stop offset=".659" stop-color="#ffff00"/><stop offset=".726" stop-color="#ffcc00"/><stop offset=".802" stop-color="#ffa200"/><stop offset="1.000" stop-color="#ff6000"/></linearGradient><linearGradient id="i2" gradientUnits="userSpaceOnUse" x1="1273" x2="1678"><stop offset=".000" stop-color="#00ff2b"/><stop offset=".301" stop-color="#00ff04"/><stop offset=".486" stop-color="#77ff00"/><stop offset=".652" stop-color="#fdff00"/><stop offset=".721" stop-color="#ffcb00"/><stop offset=".798" stop-color="#ffa100"/><stop offset="1.000" stop-color="#ff5e00"/></linearGradient><linearGradient id="i3" gradientUnits="userSpaceOnUse" x1="1273" x2="1678"><stop offset=".000" stop-color="#00ff2d"/><stop offset=".299" stop-color="#00ff07"/><stop offset=".484" stop-color="#78ff00"/><stop offset=".647" stop-color="#feff00"/><stop offset=".716" stop-color="#ffca00"/><stop offset=".795" stop-color="#ff9f00"/><stop offset="1.000" stop-color="#ff5c00"/></linearGradient><linearGradient id="i4" gradientUnits="userSpaceOnUse" x1="1273" x2="1678"><stop offset=".000" stop-color="#00ff2f"/><stop offset=".296" stop-color="#00ff09"/><stop offset=".356" stop-color="#24ff00"/><stop offset=".479" stop-color="#78ff00"/><stop offset=".642" stop-color="#ffff00"/><stop offset=".709" stop-color="#ffca00"/><stop offset=".790" stop-color="#ff9e00"/><stop offset="1.000" stop-color="#ff5a00"/></linearGradient><linearGradient id="i5" gradientUnits="userSpaceOnUse" x1="1273" x2="1678"><stop offset=".000" stop-color="#00ff31"/><stop offset=".294" stop-color="#00ff0c"/><stop offset=".368" stop-color="#2eff00"/><stop offset=".474" stop-color="#77ff00"/><stop offset=".635" stop-color="#feff00"/><stop offset=".706" stop-color="#ffc800"/><stop offset=".785" stop-color="#ff9d00"/><stop offset=".884" stop-color="#ff7700"/><stop offset="1.000" stop-color="#ff5800"/></linearGradient><linearGradient id="i6" gradientUnits="userSpaceOnUse" x1="1273" x2="1678"><stop offset=".000" stop-color="#00ff33"/><stop offset=".291" stop-color="#00ff0e"/><stop offset=".380" stop-color="#38ff00"/><stop offset=".472" stop-color="#79ff00"/><stop offset=".630" stop-color="#ffff00"/><stop offset=".699" stop-color="#ffc800"/><stop offset=".780" stop-color="#ff9b00"/><stop offset=".879" stop-color="#ff7600"/><stop offset="1.000" stop-color="#ff5600"/></linearGradient><linearGradient id="i7" gradientUnits="userSpaceOnUse" x1="1273" x2="1678"><stop offset=".000" stop-color="#00ff35"/><stop offset=".289" stop-color="#01ff10"/><stop offset=".393" stop-color="#43ff00"/><stop offset=".464" stop-color="#76ff00"/><stop offset=".622" stop-color="#fdff00"/><stop offset=".696" stop-color="#ffc600"/><stop offset=".778" stop-color="#ff9900"/><stop offset=".879" stop-color="#ff7300"/><stop offset="1.000" stop-color="#ff5400"/></linearGradient><linearGradient id="i8" gradientUnits="userSpaceOnUse" x1="1273" x2="1678"><stop offset=".000" stop-color="#00ff37"/><stop offset=".286" stop-color="#01ff13"/><stop offset=".405" stop-color="#4eff00"/><stop offset=".462" stop-color="#78ff00"/><stop offset=".617" stop-color="#feff00"/><stop offset=".689" stop-color="#ffc600"/><stop offset=".773" stop-color="#ff9800"/><stop offset=".877" stop-color="#ff7100"/><stop offset="1.000" stop-color="#ff5200"/></linearGradient><linearGradient id="i9" gradientUnits="userSpaceOnUse" x1="1273" x2="1678"><stop offset=".000" stop-color="#00ff39"/><stop offset=".284" stop-color="#01ff16"/><stop offset=".457" stop-color="#78ff00"/><stop offset=".612" stop-color="#ffff00"/><stop offset=".681" stop-color="#ffc700"/><stop offset=".768" stop-color="#ff9700"/><stop offset=".872" stop-color="#ff7000"/><stop offset="1.000" stop-color="#ff5000"/></linearGradient><linearGradient id="i10" gradientUnits="userSpaceOnUse" x1="1273" x2="1678"><stop offset=".000" stop-color="#00ff3c"/><stop offset=".281" stop-color="#01ff18"/><stop offset=".452" stop-color="#77ff00"/><stop offset=".605" stop-color="#feff00"/><stop offset=".679" stop-color="#ffc400"/><stop offset=".765" stop-color="#ff9500"/><stop offset=".872" stop-color="#ff6e00"/><stop offset="1.000" stop-color="#ff4e00"/></linearGradient><linearGradient id="i11" gradientUnits="userSpaceOnUse" x1="1273" x2="1678"><stop offset=".000" stop-color="#00ff3e"/><stop offset=".277" stop-color="#00ff1b"/><stop offset=".447" stop-color="#77ff00"/><stop offset=".600" stop-color="#ffff00"/><stop offset=".672" stop-color="#ffc400"/><stop offset=".760" stop-color="#ff9400"/><stop offset=".869" stop-color="#ff6c00"/><stop offset="1.000" stop-color="#ff4c00"/></linearGradient><linearGradient id="i12" gradientUnits="userSpaceOnUse" x1="1273" x2="1678"><stop offset=".000" stop-color="#00ff40"/><stop offset=".274" stop-color="#00ff1e"/><stop offset=".442" stop-color="#76ff02"/><stop offset=".593" stop-color="#fdff00"/><stop offset=".669" stop-color="#ffc200"/><stop offset=".758" stop-color="#ff9100"/><stop offset=".867" stop-color="#ff6a00"/><stop offset="1.000" stop-color="#ff4a00"/></linearGradient><linearGradient id="i13" gradientUnits="userSpaceOnUse" x1="1273" x2="1678"><stop offset=".000" stop-color="#00ff43"/><stop offset=".272" stop-color="#00ff21"/><stop offset=".440" stop-color="#78ff05"/><stop offset=".588" stop-color="#feff00"/><stop offset=".664" stop-color="#ffc100"/><stop offset=".753" stop-color="#ff9000"/><stop offset=".864" stop-color="#ff6800"/><stop offset="1.000" stop-color="#ff4800"/></linearGradient><linearGradient id="i14" gradientUnits="userSpaceOnUse" x1="1273" x2="1678"><stop offset=".000" stop-color="#00ff45"/><stop offset=".269" stop-color="#00ff24"/><stop offset=".435" stop-color="#77ff08"/><stop offset=".583" stop-color="#ffff00"/><stop offset=".657" stop-color="#ffc100"/><stop offset=".748" stop-color="#ff8f00"/><stop offset=".862" stop-color="#ff6600"/><stop offset="1.000" stop-color="#ff4600"/></linearGradient><linearGradient id="i15" gradientUnits="userSpaceOnUse" x1="1273" x2="1678"><stop offset=".000" stop-color="#00ff48"/><stop offset=".267" stop-color="#00ff27"/><stop offset=".430" stop-color="#77ff0c"/><stop offset=".491" stop-color="#acff00"/><stop offset=".578" stop-color="#fffe00"/><stop offset=".652" stop-color="#ffc000"/><stop offset=".743" stop-color="#ff8e00"/><stop offset=".857" stop-color="#ff6500"/><stop offset="1.000" stop-color="#ff4400"/></linearGradient><linearGradient id="i16" gradientUnits="userSpaceOnUse" x1="1273" x2="1678"><stop offset=".000" stop-color="#00ff4a"/><stop offset=".264" stop-color="#00ff2a"/><stop offset=".427" stop-color="#79ff0f"/><stop offset=".504" stop-color="#bcff00"/><stop offset=".570" stop-color="#ffff00"/><stop offset=".647" stop-color="#ffbf00"/><stop offset=".738" stop-color="#ff8d00"/><stop offset=".854" stop-color="#ff6400"/><stop offset="1.000" stop-color="#ff4200"/></linearGradient><linearGradient id="i17" gradientUnits="userSpaceOnUse" x1="1273" x2="1678"><stop offset=".000" stop-color="#00ff4d"/><stop offset=".262" stop-color="#01ff2d"/><stop offset=".422" stop-color="#78ff12"/><stop offset=".514" stop-color="#cbff00"/><stop offset=".565" stop-color="#fffe00"/><stop offset=".642" stop-color="#ffbd00"/><stop offset=".736" stop-color="#ff8a00"/><stop offset=".854" stop-color="#ff6100"/><stop offset="1.000" stop-color="#ff4000"/></linearGradient><linearGradient id="i18" gradientUnits="userSpaceOnUse" x1="1273" x2="1678"><stop offset=".000" stop-color="#00ff50"/><stop offset=".259" stop-color="#01ff30"/><stop offset=".415" stop-color="#76ff17"/><stop offset=".560" stop-color="#fffd00"/><stop offset=".637" stop-color="#ffbc00"/><stop offset=".731" stop-color="#ff8900"/><stop offset=".849" stop-color="#ff6000"/><stop offset="1.000" stop-color="#ff3e00"/></linearGradient><linearGradient id="i19" gradientUnits="userSpaceOnUse" x1="1273" x2="1678"><stop offset=".000" stop-color="#00ff52"/><stop offset=".257" stop-color="#01ff33"/><stop offset=".412" stop-color="#77ff1a"/><stop offset=".553" stop-color="#ffff00"/><stop offset=".630" stop-color="#ffbd00"/><stop offset=".726" stop-color="#ff8800"/><stop offset=".847" stop-color="#ff5e00"/><stop offset="1.000" stop-color="#ff3d00"/></linearGradient><linearGradient id="i20" gradientUnits="userSpaceOnUse" x1="1273" x2="1678"><stop offset=".000" stop-color="#00ff55"/><stop offset=".254" stop-color="#01ff36"/><stop offset=".407" stop-color="#77ff1e"/><stop offset=".548" stop-color="#fffe01"/><stop offset=".625" stop-color="#ffbb00"/><stop offset=".723" stop-color="#ff8600"/><stop offset=".847" stop-color="#ff5c00"/><stop offset="1.000" stop-color="#ff3b00"/></linearGradient><linearGradient id="i21" gradientUnits="userSpaceOnUse" x1="1273" x2="1678"><stop offset=".000" stop-color="#00ff58"/><stop offset=".249" stop-color="#00ff3a"/><stop offset=".402" stop-color="#76ff22"/><stop offset=".541" stop-color="#ffff05"/><stop offset=".620" stop-color="#ffba00"/><stop offset=".719" stop-color="#ff8400"/><stop offset=".842" stop-color="#ff5a00"/><stop offset="1.000" stop-color="#ff3900"/></linearGradient><linearGradient id="i22" gradientUnits="userSpaceOnUse" x1="1273" x2="1678"><stop offset=".000" stop-color="#00ff5b"/><stop offset=".247" stop-color="#00ff3d"/><stop offset=".398" stop-color="#76ff26"/><stop offset=".536" stop-color="#fffe0a"/><stop offset=".615" stop-color="#ffb900"/><stop offset=".714" stop-color="#ff8300"/><stop offset=".840" stop-color="#ff5900"/><stop offset="1.000" stop-color="#ff3700"/></linearGradient><linearGradient id="i23" gradientUnits="userSpaceOnUse" x1="1273" x2="1678"><stop offset=".000" stop-color="#00ff5e"/><stop offset=".244" stop-color="#00ff41"/><stop offset=".393" stop-color="#75ff2a"/><stop offset=".531" stop-color="#fffd0e"/><stop offset=".610" stop-color="#ffb800"/><stop offset=".709" stop-color="#ff8200"/><stop offset=".837" stop-color="#ff5700"/><stop offset="1.000" stop-color="#ff3500"/></linearGradient><linearGradient id="i24" gradientUnits="userSpaceOnUse" x1="1273" x2="1678"><stop offset=".000" stop-color="#00ff61"/><stop offset=".242" stop-color="#00ff45"/><stop offset=".390" stop-color="#77ff2d"/><stop offset=".523" stop-color="#ffff13"/><stop offset=".602" stop-color="#ffb800"/><stop offset=".704" stop-color="#ff8100"/><stop offset=".835" stop-color="#ff5500"/><stop offset="1.000" stop-color="#ff3300"/></linearGradient><linearGradient id="i25" gradientUnits="userSpaceOnUse" x1="1273" x2="1678"><stop offset=".000" stop-color="#00ff64"/><stop offset=".240" stop-color="#00ff48"/><stop offset=".385" stop-color="#77ff32"/><stop offset=".519" stop-color="#fffe17"/><stop offset=".598" stop-color="#ffb703"/><stop offset=".701" stop-color="#ff7e00"/><stop offset=".832" stop-color="#ff5300"/><stop offset="1.000" stop-color="#ff3200"/></linearGradient><linearGradient id="i26" gradientUnits="userSpaceOnUse" x1="1273" x2="1678"><stop offset=".000" stop-color="#00ff67"/><stop offset=".237" stop-color="#00ff4c"/><stop offset=".383" stop-color="#78ff36"/><stop offset=".511" stop-color="#feff1c"/><stop offset=".593" stop-color="#ffb506"/><stop offset=".694" stop-color="#ff7e00"/><stop offset=".827" stop-color="#ff5200"/><stop offset="1.000" stop-color="#ff3000"/></linearGradient><linearGradient id="i27" gradientUnits="userSpaceOnUse" x1="1273" x2="1678"><stop offset=".000" stop-color="#00ff6b"/><stop offset=".235" stop-color="#01ff50"/><stop offset=".378" stop-color="#78ff3a"/><stop offset=".506" stop-color="#fffe21"/><stop offset=".588" stop-color="#ffb40a"/><stop offset=".691" stop-color="#ff7c00"/><stop offset=".825" stop-color="#ff5000"/><stop offset="1.000" stop-color="#ff2e00"/></linearGradient><linearGradient id="i28" gradientUnits="userSpaceOnUse" x1="1273" x2="1678"><stop offset=".000" stop-color="#00ff6e"/><stop offset=".232" stop-color="#01ff54"/><stop offset=".370" stop-color="#75ff3f"/><stop offset=".501" stop-color="#fffd26"/><stop offset=".583" stop-color="#ffb30d"/><stop offset=".686" stop-color="#ff7a00"/><stop offset=".822" stop-color="#ff4e00"/><stop offset="1.000" stop-color="#ff2c00"/></linearGradient><linearGradient id="i29" gradientUnits="userSpaceOnUse" x1="1273" x2="1678"><stop offset=".000" stop-color="#00ff71"/><stop offset=".230" stop-color="#01ff58"/><stop offset=".370" stop-color="#79ff43"/><stop offset=".494" stop-color="#ffff2b"/><stop offset=".575" stop-color="#ffb311"/><stop offset=".681" stop-color="#ff7900"/><stop offset=".820" stop-color="#ff4d00"/><stop offset="1.000" stop-color="#ff2b00"/></linearGradient><linearGradient id="i30" gradientUnits="userSpaceOnUse" x1="1273" x2="1678"><stop offset=".000" stop-color="#00ff75"/><stop offset=".227" stop-color="#01ff5c"/><stop offset=".363" stop-color="#76ff48"/><stop offset=".489" stop-color="#fffe30"/><stop offset=".570" stop-color="#ffb215"/><stop offset=".677" stop-color="#ff7800"/><stop offset=".817" stop-color="#ff4b00"/><stop offset="1.000" stop-color="#ff2900"/></linearGradient><linearGradient id="i31" gradientUnits="userSpaceOnUse" x1="1273" x2="1678"><stop offset=".000" stop-color="#00ff78"/><stop offset=".222" stop-color="#00ff60"/><stop offset=".356" stop-color="#73ff4d"/><stop offset=".484" stop-color="#fffd35"/><stop offset=".565" stop-color="#ffb018"/><stop offset=".674" stop-color="#ff7502"/><stop offset=".815" stop-color="#ff4900"/><stop offset="1.000" stop-color="#ff2700"/></linearGradient><linearGradient id="i32" gradientUnits="userSpaceOnUse" x1="1273" x2="1678"><stop offset=".000" stop-color="#00ff7c"/><stop offset=".220" stop-color="#00ff65"/><stop offset=".353" stop-color="#75ff52"/><stop offset=".477" stop-color="#fffe3b"/><stop offset=".558" stop-color="#ffb11d"/><stop offset=".667" stop-color="#ff7505"/><stop offset=".810" stop-color="#ff4800"/><stop offset="1.000" stop-color="#ff2500"/></linearGradient><linearGradient id="i33" gradientUnits="userSpaceOnUse" x1="1273" x2="1678"><stop offset=".000" stop-color="#00ff80"/><stop offset=".217" stop-color="#00ff69"/><stop offset=".348" stop-color="#75ff57"/><stop offset=".472" stop-color="#fffd41"/><stop offset=".556" stop-color="#ffad20"/><stop offset=".664" stop-color="#ff7207"/><stop offset=".810" stop-color="#ff4500"/><stop offset="1.000" stop-color="#ff2400"/></linearGradient><linearGradient id="i34" gradientUnits="userSpaceOnUse" x1="1273" x2="1678"><stop offset=".000" stop-color="#00ff84"/><stop offset=".215" stop-color="#00ff6e"/><stop offset=".348" stop-color="#79ff5b"/><stop offset=".464" stop-color="#ffff47"/><stop offset=".548" stop-color="#ffae24"/><stop offset=".657" stop-color="#ff720a"/><stop offset=".805" stop-color="#ff4400"/><stop offset="1.000" stop-color="#ff2200"/></linearGradient><linearGradient id="i35" gradientUnits="userSpaceOnUse" x1="1273" x2="1678"><stop offset=".000" stop-color="#00ff88"/><stop offset=".212" stop-color="#00ff72"/><stop offset=".341" stop-color="#76ff61"/><stop offset=".459" stop-color="#fffe4d"/><stop offset=".543" stop-color="#ffac28"/><stop offset=".654" stop-color="#ff700d"/><stop offset=".802" stop-color="#ff4200"/><stop offset="1.000" stop-color="#ff2000"/></linearGradient><linearGradient id="i36" gradientUnits="userSpaceOnUse" x1="1273" x2="1678"><stop offset=".000" stop-color="#00ff8c"/><stop offset=".210" stop-color="#00ff77"/><stop offset=".336" stop-color="#75ff67"/><stop offset=".454" stop-color="#fffd52"/><stop offset=".494" stop-color="#ffd03d"/><stop offset=".538" stop-color="#ffab2c"/><stop offset=".649" stop-color="#ff6e0f"/><stop offset=".800" stop-color="#ff4000"/><stop offset="1.000" stop-color="#ff1f00"/></linearGradient><linearGradient id="i37" gradientUnits="userSpaceOnUse" x1="1273" x2="1678"><stop offset=".000" stop-color="#00ff90"/><stop offset=".207" stop-color="#01ff7c"/><stop offset=".333" stop-color="#77ff6c"/><stop offset=".447" stop-color="#ffff59"/><stop offset=".486" stop-color="#ffd143"/><stop offset=".531" stop-color="#ffab30"/><stop offset=".644" stop-color="#ff6d12"/><stop offset=".760" stop-color="#ff4700"/><stop offset="1.000" stop-color="#ff1d00"/></linearGradient><linearGradient id="i38" gradientUnits="userSpaceOnUse" x1="1273" x2="1678"><stop offset=".000" stop-color="#00ff94"/><stop offset=".205" stop-color="#01ff81"/><stop offset=".326" stop-color="#74ff72"/><stop offset=".442" stop-color="#fffd5f"/><stop offset=".481" stop-color="#ffcf48"/><stop offset=".526" stop-color="#ffa934"/><stop offset=".640" stop-color="#ff6b15"/><stop offset=".773" stop-color="#ff4200"/><stop offset="1.000" stop-color="#ff1b00"/></linearGradient><linearGradient id="i39" gradientUnits="userSpaceOnUse" x1="1273" x2="1678"><stop offset=".000" stop-color="#00ff99"/><stop offset=".202" stop-color="#01ff86"/><stop offset=".326" stop-color="#79ff77"/><stop offset=".435" stop-color="#ffff67"/><stop offset=".474" stop-color="#ffd04e"/><stop offset=".519" stop-color="#ffaa39"/><stop offset=".632" stop-color="#ff6b18"/><stop offset=".785" stop-color="#ff3d00"/><stop offset="1.000" stop-color="#ff1a00"/></linearGradient><linearGradient id="i40" gradientUnits="userSpaceOnUse" x1="1273" x2="1678"><stop offset=".000" stop-color="#00ff9d"/><stop offset=".200" stop-color="#01ff8c"/><stop offset=".319" stop-color="#76ff7e"/><stop offset=".430" stop-color="#fffe6d"/><stop offset=".469" stop-color="#ffcf53"/><stop offset=".514" stop-color="#ffa83e"/><stop offset=".630" stop-color="#ff681b"/><stop offset=".798" stop-color="#ff3800"/><stop offset="1.000" stop-color="#ff1800"/></linearGradient><linearGradient id="i41" gradientUnits="userSpaceOnUse" x1="1273" x2="1678"><stop offset=".000" stop-color="#00ffa2"/><stop offset=".195" stop-color="#00ff91"/><stop offset=".311" stop-color="#72ff84"/><stop offset=".425" stop-color="#fffd73"/><stop offset=".464" stop-color="#ffcd58"/><stop offset=".509" stop-color="#ffa642"/><stop offset=".625" stop-color="#ff671e"/><stop offset=".810" stop-color="#ff3300"/><stop offset="1.000" stop-color="#ff1700"/></linearGradient><linearGradient id="i42" gradientUnits="userSpaceOnUse" x1="1273" x2="1678"><stop offset=".000" stop-color="#00ffa7"/><stop offset=".193" stop-color="#00ff97"/><stop offset=".311" stop-color="#77ff8a"/><stop offset=".417" stop-color="#ffff7b"/><stop offset=".457" stop-color="#ffce5f"/><stop offset=".501" stop-color="#ffa647"/><stop offset=".617" stop-color="#ff6621"/><stop offset=".822" stop-color="#ff2e00"/><stop offset="1.000" stop-color="#ff1500"/></linearGradient><linearGradient id="i43" gradientUnits="userSpaceOnUse" x1="1273" x2="1678"><stop offset=".000" stop-color="#00ffac"/><stop offset=".190" stop-color="#00ff9d"/><stop offset=".304" stop-color="#74ff91"/><stop offset=".412" stop-color="#fffd82"/><stop offset=".452" stop-color="#ffcd64"/><stop offset=".496" stop-color="#ffa54c"/><stop offset=".615" stop-color="#ff6423"/><stop offset=".835" stop-color="#ff2a00"/><stop offset="1.000" stop-color="#ff1300"/></linearGradient><linearGradient id="i44" gradientUnits="userSpaceOnUse" x1="1273" x2="1678"><stop offset=".000" stop-color="#00ffb1"/><stop offset=".188" stop-color="#00ffa3"/><stop offset=".304" stop-color="#79ff97"/><stop offset=".405" stop-color="#ffff8b"/><stop offset=".444" stop-color="#ffce6b"/><stop offset=".489" stop-color="#ffa551"/><stop offset=".607" stop-color="#ff6327"/><stop offset=".714" stop-color="#ff4111"/><stop offset=".847" stop-color="#ff2600"/><stop offset="1.000" stop-color="#ff1200"/></linearGradient><linearGradient id="i45" gradientUnits="userSpaceOnUse" x1="1273" x2="1678"><stop offset=".000" stop-color="#00ffb6"/><stop offset=".185" stop-color="#00ffa9"/><stop offset=".296" stop-color="#75ff9f"/><stop offset=".400" stop-color="#fffe92"/><stop offset=".440" stop-color="#ffcc71"/><stop offset=".484" stop-color="#ffa356"/><stop offset=".602" stop-color="#ff612a"/><stop offset=".709" stop-color="#ff4014"/><stop offset=".844" stop-color="#ff2402"/><stop offset="1.000" stop-color="#ff1000"/></linearGradient><linearGradient id="i46" gradientUnits="userSpaceOnUse" x1="1273" x2="1678"><stop offset=".000" stop-color="#00ffbb"/><stop offset=".183" stop-color="#01ffaf"/><stop offset=".291" stop-color="#75ffa6"/><stop offset=".395" stop-color="#fffc99"/><stop offset=".435" stop-color="#ffca76"/><stop offset=".481" stop-color="#ffa059"/><stop offset=".600" stop-color="#ff5f2c"/><stop offset=".704" stop-color="#ff3e16"/><stop offset=".835" stop-color="#ff2404"/><stop offset="1.000" stop-color="#ff0f00"/></linearGradient><linearGradient id="i47" gradientUnits="userSpaceOnUse" x1="1273" x2="1678"><stop offset=".000" stop-color="#00ffc1"/><stop offset=".180" stop-color="#01ffb6"/><stop offset=".289" stop-color="#77ffad"/><stop offset=".388" stop-color="#ffffa3"/><stop offset=".427" stop-color="#ffcb7e"/><stop offset=".472" stop-color="#ffa260"/><stop offset=".593" stop-color="#ff5e30"/><stop offset=".694" stop-color="#ff3e19"/><stop offset=".817" stop-color="#ff2507"/><stop offset="1.000" stop-color="#ff0d00"/></linearGradient><linearGradient id="i48" gradientUnits="userSpaceOnUse" x1="1273" x2="1678"><stop offset=".000" stop-color="#00ffc7"/><stop offset=".178" stop-color="#01ffbd"/><stop offset=".284" stop-color="#76ffb5"/><stop offset=".383" stop-color="#fffdaa"/><stop offset=".422" stop-color="#ffc984"/><stop offset=".467" stop-color="#ffa065"/><stop offset=".588" stop-color="#ff5d33"/><stop offset=".805" stop-color="#ff250a"/><stop offset="1.000" stop-color="#ff0c00"/></linearGradient><linearGradient id="i49" gradientUnits="userSpaceOnUse" x1="1273" x2="1678"><stop offset=".000" stop-color="#00ffcd"/><stop offset=".175" stop-color="#01ffc4"/><stop offset=".281" stop-color="#79ffbd"/><stop offset=".375" stop-color="#feffb5"/><stop offset=".415" stop-color="#ffca8c"/><stop offset=".462" stop-color="#ff9e6a"/><stop offset=".583" stop-color="#ff5b36"/><stop offset=".795" stop-color="#ff240d"/><stop offset="1.000" stop-color="#ff0a00"/></linearGradient><linearGradient id="i50" gradientUnits="userSpaceOnUse" x1="1273" x2="1678"><stop offset=".000" stop-color="#00ffd3"/><stop offset=".173" stop-color="#02ffcb"/><stop offset=".277" stop-color="#78ffc5"/><stop offset=".370" stop-color="#fffebd"/><stop offset=".410" stop-color="#ffc892"/><stop offset=".457" stop-color="#ff9c6f"/><stop offset=".578" stop-color="#ff593a"/><stop offset=".783" stop-color="#ff240f"/><stop offset="1.000" stop-color="#ff0900"/></linearGradient><linearGradient id="i51" gradientUnits="userSpaceOnUse" x1="1273" x2="1678"><stop offset=".000" stop-color="#00ffd9"/><stop offset=".168" stop-color="#00ffd3"/><stop offset=".267" stop-color="#71ffce"/><stop offset=".365" stop-color="#fffcc5"/><stop offset=".405" stop-color="#ffc799"/><stop offset=".452" stop-color="#ff9a74"/><stop offset=".573" stop-color="#ff583d"/><stop offset=".748" stop-color="#ff2816"/><stop offset="1.000" stop-color="#ff0700"/></linearGradient><linearGradient id="i52" gradientUnits="userSpaceOnUse" x1="1273" x2="1678"><stop offset=".000" stop-color="#00ffe0"/><stop offset=".165" stop-color="#00ffda"/><stop offset=".267" stop-color="#77ffd6"/><stop offset=".358" stop-color="#ffffd1"/><stop offset=".395" stop-color="#ffcaa4"/><stop offset=".442" stop-color="#ff9c7d"/><stop offset=".499" stop-color="#ff765c"/><stop offset=".565" stop-color="#ff5741"/><stop offset=".743" stop-color="#ff2718"/><stop offset="1.000" stop-color="#ff0600"/></linearGradient><linearGradient id="i53" gradientUnits="userSpaceOnUse" x1="1273" x2="1678"><stop offset=".000" stop-color="#00ffe6"/><stop offset=".163" stop-color="#00ffe2"/><stop offset=".262" stop-color="#76ffdf"/><stop offset=".353" stop-color="#fffdd9"/><stop offset=".393" stop-color="#ffc6a8"/><stop offset=".440" stop-color="#ff9880"/><stop offset=".496" stop-color="#ff735f"/><stop offset=".563" stop-color="#ff5443"/><stop offset=".741" stop-color="#ff251a"/><stop offset="1.000" stop-color="#ff0400"/></linearGradient><linearGradient id="i54" gradientUnits="userSpaceOnUse" x1="1273" x2="1678"><stop offset=".000" stop-color="#00ffed"/><stop offset=".160" stop-color="#00ffeb"/><stop offset=".254" stop-color="#72ffe8"/><stop offset=".348" stop-color="#fffbe2"/><stop offset=".388" stop-color="#ffc4af"/><stop offset=".435" stop-color="#ff9685"/><stop offset=".491" stop-color="#ff7163"/><stop offset=".558" stop-color="#ff5247"/><stop offset=".738" stop-color="#ff231b"/><stop offset="1.000" stop-color="#ff0300"/></linearGradient><linearGradient id="i55" gradientUnits="userSpaceOnUse" x1="1273" x2="1678"><stop offset=".000" stop-color="#00fff5"/><stop offset=".158" stop-color="#00fff3"/><stop offset=".254" stop-color="#78fff2"/><stop offset=".341" stop-color="#fffeef"/><stop offset=".378" stop-color="#ffc8bc"/><stop offset=".425" stop-color="#ff988f"/><stop offset=".481" stop-color="#ff726a"/><stop offset=".551" stop-color="#ff514b"/><stop offset=".733" stop-color="#ff221e"/><stop offset="1.000" stop-color="#ff0100"/></linearGradient><linearGradient id="i56" gradientUnits="userSpaceOnUse" x1="1273" x2="1678"><stop offset=".000" stop-color="#00fffc"/><stop offset=".156" stop-color="#01fffc"/><stop offset=".247" stop-color="#74fffc"/><stop offset=".336" stop-color="#fffcf9"/><stop offset=".373" stop-color="#ffc6c3"/><stop offset=".420" stop-color="#ff9694"/><stop offset=".477" stop-color="#ff706e"/><stop offset=".546" stop-color="#ff504f"/><stop offset=".731" stop-color="#ff201f"/><stop offset="1.000" stop-color="#ff0000"/></linearGradient><linearGradient id="i57" gradientUnits="userSpaceOnUse" x1="1273" x2="1678"><stop offset=".000" stop-color="#00faff"/><stop offset=".153" stop-color="#01f9ff"/><stop offset=".247" stop-color="#77f8ff"/><stop offset=".333" stop-color="#fff6fe"/><stop offset=".370" stop-color="#ffc1c7"/><stop offset=".417" stop-color="#ff9298"/><stop offset=".474" stop-color="#ff6c71"/><stop offset=".543" stop-color="#ff4d51"/><stop offset=".733" stop-color="#ff1d20"/><stop offset="1.000" stop-color="#ff0001"/></linearGradient><linearGradient id="i58" gradientUnits="userSpaceOnUse" x1="1273" x2="1678"><stop offset=".000" stop-color="#00f3ff"/><stop offset=".151" stop-color="#01f0ff"/><stop offset=".247" stop-color="#78eeff"/><stop offset=".333" stop-color="#ffecff"/><stop offset=".373" stop-color="#ffb6c6"/><stop offset=".420" stop-color="#ff8a98"/><stop offset=".477" stop-color="#ff6671"/><stop offset=".546" stop-color="#ff4852"/><stop offset=".743" stop-color="#ff1920"/><stop offset="1.000" stop-color="#ff0002"/></linearGradient><linearGradient id="i59" gradientUnits="userSpaceOnUse" x1="1273" x2="1678"><stop offset=".000" stop-color="#00ebff"/><stop offset=".148" stop-color="#01e8ff"/><stop offset=".242" stop-color="#73e5ff"/><stop offset=".336" stop-color="#ffdefc"/><stop offset=".375" stop-color="#ffacc4"/><stop offset=".422" stop-color="#ff8397"/><stop offset=".479" stop-color="#ff6172"/><stop offset=".548" stop-color="#ff4452"/><stop offset=".751" stop-color="#ff1620"/><stop offset="1.000" stop-color="#ff0003"/></linearGradient><linearGradient id="i60" gradientUnits="userSpaceOnUse" x1="1273" x2="1678"><stop offset=".000" stop-color="#00e4ff"/><stop offset=".146" stop-color="#02e0ff"/><stop offset=".242" stop-color="#74dcff"/><stop offset=".336" stop-color="#ffd4fc"/><stop offset=".375" stop-color="#ffa4c6"/><stop offset=".422" stop-color="#ff7d99"/><stop offset=".479" stop-color="#ff5c73"/><stop offset=".548" stop-color="#ff4154"/><stop offset=".758" stop-color="#ff1320"/><stop offset="1.000" stop-color="#ff0004"/></linearGradient><linearGradient id="i61" gradientUnits="userSpaceOnUse" x1="1273" x2="1678"><stop offset=".000" stop-color="#00ddff"/><stop offset=".143" stop-color="#02d8ff"/><stop offset=".242" stop-color="#76d3ff"/><stop offset=".336" stop-color="#ffcbfd"/><stop offset=".375" stop-color="#ff9dc7"/><stop offset=".422" stop-color="#ff779a"/><stop offset=".481" stop-color="#ff5773"/><stop offset=".551" stop-color="#ff3c54"/><stop offset=".768" stop-color="#ff101f"/><stop offset=".909" stop-color="#ff000d"/><stop offset="1.000" stop-color="#ff0004"/></linearGradient><linearGradient id="i62" gradientUnits="userSpaceOnUse" x1="1273" x2="1678"><stop offset=".000" stop-color="#00d7ff"/><stop offset=".138" stop-color="#00d0ff"/><stop offset=".240" stop-color="#74caff"/><stop offset=".336" stop-color="#ffc2fe"/><stop offset=".375" stop-color="#ff96c8"/><stop offset=".425" stop-color="#ff709a"/><stop offset=".481" stop-color="#ff5275"/><stop offset=".551" stop-color="#ff3956"/><stop offset=".778" stop-color="#ff0c1f"/><stop offset="1.000" stop-color="#ff0005"/></linearGradient><linearGradient id="i63" gradientUnits="userSpaceOnUse" x1="1273" x2="1678"><stop offset=".000" stop-color="#00d0ff"/><stop offset=".136" stop-color="#00c9ff"/><stop offset=".242" stop-color="#78c2ff"/><stop offset=".336" stop-color="#ffb9ff"/><stop offset=".375" stop-color="#ff8fc9"/><stop offset=".425" stop-color="#ff6b9b"/><stop offset=".481" stop-color="#ff4e77"/><stop offset=".551" stop-color="#ff3657"/><stop offset=".657" stop-color="#ff1d38"/><stop offset=".788" stop-color="#ff091f"/><stop offset="1.000" stop-color="#ff0006"/></linearGradient><linearGradient id="i64" gradientUnits="userSpaceOnUse" x1="1273" x2="1678"><stop offset=".000" stop-color="#00c9ff"/><stop offset=".133" stop-color="#00c2ff"/><stop offset=".240" stop-color="#76baff"/><stop offset=".336" stop-color="#ffb1ff"/><stop offset=".378" stop-color="#ff87c8"/><stop offset=".425" stop-color="#ff669d"/><stop offset=".484" stop-color="#ff4977"/><stop offset=".553" stop-color="#ff3258"/><stop offset=".664" stop-color="#ff1937"/><stop offset=".802" stop-color="#ff051e"/><stop offset="1.000" stop-color="#ff0007"/></linearGradient><linearGradient id="i65" gradientUnits="userSpaceOnUse" x1="1273" x2="1678"><stop offset=".000" stop-color="#00c3ff"/><stop offset=".131" stop-color="#00bbff"/><stop offset=".237" stop-color="#75b2ff"/><stop offset=".338" stop-color="#ffa6fc"/><stop offset=".378" stop-color="#ff80c9"/><stop offset=".427" stop-color="#ff5f9c"/><stop offset=".486" stop-color="#ff4477"/><stop offset=".556" stop-color="#ff2e58"/><stop offset=".672" stop-color="#ff1537"/><stop offset=".817" stop-color="#ff021d"/><stop offset="1.000" stop-color="#ff0008"/></linearGradient><linearGradient id="i66" gradientUnits="userSpaceOnUse" x1="1273" x2="1678"><stop offset=".000" stop-color="#00bdff"/><stop offset=".128" stop-color="#01b4ff"/><stop offset=".237" stop-color="#76aaff"/><stop offset=".338" stop-color="#ff9efd"/><stop offset=".378" stop-color="#ff7aca"/><stop offset=".427" stop-color="#ff5a9e"/><stop offset=".486" stop-color="#ff4078"/><stop offset=".556" stop-color="#ff2b5a"/><stop offset=".672" stop-color="#ff1338"/><stop offset=".820" stop-color="#ff001d"/><stop offset="1.000" stop-color="#ff0009"/></linearGradient><linearGradient id="i67" gradientUnits="userSpaceOnUse" x1="1273" x2="1678"><stop offset=".000" stop-color="#00b7ff"/><stop offset=".126" stop-color="#01adff"/><stop offset=".237" stop-color="#77a3ff"/><stop offset=".338" stop-color="#ff96fe"/><stop offset=".380" stop-color="#ff72c9"/><stop offset=".430" stop-color="#ff549d"/><stop offset=".558" stop-color="#ff275a"/><stop offset=".667" stop-color="#ff113a"/><stop offset=".802" stop-color="#ff0021"/><stop offset="1.000" stop-color="#ff000a"/></linearGradient><linearGradient id="i68" gradientUnits="userSpaceOnUse" x1="1273" x2="1678"><stop offset=".000" stop-color="#00b1ff"/><stop offset=".123" stop-color="#01a7ff"/><stop offset=".237" stop-color="#799cff"/><stop offset=".338" stop-color="#ff8efe"/><stop offset=".380" stop-color="#ff6cca"/><stop offset=".430" stop-color="#ff509e"/><stop offset=".558" stop-color="#ff245c"/><stop offset=".783" stop-color="#ff0025"/><stop offset="1.000" stop-color="#ff000b"/></linearGradient><linearGradient id="i69" gradientUnits="userSpaceOnUse" x1="1273" x2="1678"><stop offset=".000" stop-color="#00abff"/><stop offset=".121" stop-color="#01a1ff"/><stop offset=".237" stop-color="#7a95ff"/><stop offset=".338" stop-color="#ff87ff"/><stop offset=".380" stop-color="#ff66cb"/><stop offset=".430" stop-color="#ff4ba0"/><stop offset=".558" stop-color="#ff215d"/><stop offset=".765" stop-color="#ff0029"/><stop offset="1.000" stop-color="#ff000c"/></linearGradient><linearGradient id="i70" gradientUnits="userSpaceOnUse" x1="1273" x2="1678"><stop offset=".000" stop-color="#00a5ff"/><stop offset=".119" stop-color="#019bff"/><stop offset=".232" stop-color="#758eff"/><stop offset=".341" stop-color="#ff7efc"/><stop offset=".383" stop-color="#ff5fca"/><stop offset=".432" stop-color="#ff459f"/><stop offset=".560" stop-color="#ff1d5d"/><stop offset=".748" stop-color="#ff002d"/><stop offset="1.000" stop-color="#ff000d"/></linearGradient><linearGradient id="i71" gradientUnits="userSpaceOnUse" x1="1273" x2="1678"><stop offset=".000" stop-color="#00a0ff"/><stop offset=".116" stop-color="#0295ff"/><stop offset=".232" stop-color="#7688ff"/><stop offset=".341" stop-color="#ff77fd"/><stop offset=".383" stop-color="#ff59cb"/><stop offset=".432" stop-color="#ff41a1"/><stop offset=".563" stop-color="#ff1a5e"/><stop offset=".731" stop-color="#ff0032"/><stop offset="1.000" stop-color="#ff000e"/></linearGradient><linearGradient id="i72" gradientUnits="userSpaceOnUse" x1="1273" x2="1678"><stop offset=".000" stop-color="#009aff"/><stop offset=".114" stop-color="#028fff"/><stop offset=".232" stop-color="#7881ff"/><stop offset=".341" stop-color="#ff70fe"/><stop offset=".383" stop-color="#ff54cc"/><stop offset=".432" stop-color="#ff3da2"/><stop offset=".563" stop-color="#ff175f"/><stop offset=".714" stop-color="#ff0036"/><stop offset="1.000" stop-color="#ff000f"/></linearGradient><linearGradient id="i73" gradientUnits="userSpaceOnUse" x1="1273" x2="1678"><stop offset=".000" stop-color="#0095ff"/><stop offset=".109" stop-color="#008aff"/><stop offset=".230" stop-color="#767bff"/><stop offset=".341" stop-color="#ff6afe"/><stop offset=".383" stop-color="#ff4fcd"/><stop offset=".435" stop-color="#ff37a1"/><stop offset=".563" stop-color="#ff1460"/><stop offset=".696" stop-color="#ff003b"/><stop offset="1.000" stop-color="#ff0010"/></linearGradient><linearGradient id="i74" gradientUnits="userSpaceOnUse" x1="1273" x2="1678"><stop offset=".000" stop-color="#008fff"/><stop offset=".106" stop-color="#0085ff"/><stop offset=".230" stop-color="#7775ff"/><stop offset=".341" stop-color="#ff63ff"/><stop offset=".383" stop-color="#ff4ace"/><stop offset=".435" stop-color="#ff33a3"/><stop offset=".563" stop-color="#ff1162"/><stop offset=".677" stop-color="#ff0041"/><stop offset=".746" stop-color="#ff0032"/><stop offset="1.000" stop-color="#ff0011"/></linearGradient><linearGradient id="i75" gradientUnits="userSpaceOnUse" x1="1273" x2="1678"><stop offset=".000" stop-color="#008aff"/><stop offset=".104" stop-color="#007fff"/><stop offset=".230" stop-color="#786fff"/><stop offset=".341" stop-color="#fe5dff"/><stop offset=".385" stop-color="#ff43cc"/><stop offset=".435" stop-color="#ff2fa4"/><stop offset=".565" stop-color="#ff0e62"/><stop offset=".659" stop-color="#ff0046"/><stop offset=".748" stop-color="#ff0033"/><stop offset="1.000" stop-color="#ff0011"/></linearGradient><linearGradient id="i76" gradientUnits="userSpaceOnUse" x1="1273" x2="1678"><stop offset=".000" stop-color="#0085ff"/><stop offset=".101" stop-color="#007aff"/><stop offset=".225" stop-color="#746aff"/><stop offset=".343" stop-color="#ff55fd"/><stop offset=".385" stop-color="#ff3ecd"/><stop offset=".437" stop-color="#ff2aa3"/><stop offset=".568" stop-color="#ff0b62"/><stop offset=".642" stop-color="#ff004c"/><stop offset=".748" stop-color="#ff0034"/><stop offset="1.000" stop-color="#ff0012"/></linearGradient><linearGradient id="i77" gradientUnits="userSpaceOnUse" x1="1273" x2="1678"><stop offset=".000" stop-color="#0080ff"/><stop offset=".099" stop-color="#0175ff"/><stop offset=".225" stop-color="#7564ff"/><stop offset=".343" stop-color="#ff4ffd"/><stop offset=".385" stop-color="#ff3ace"/><stop offset=".437" stop-color="#ff26a4"/><stop offset=".568" stop-color="#ff0864"/><stop offset=".748" stop-color="#ff0035"/><stop offset="1.000" stop-color="#ff0013"/></linearGradient><linearGradient id="i78" gradientUnits="userSpaceOnUse" x1="1273" x2="1678"><stop offset=".000" stop-color="#007bff"/><stop offset=".096" stop-color="#0170ff"/><stop offset=".225" stop-color="#765fff"/><stop offset=".343" stop-color="#ff49fe"/><stop offset=".385" stop-color="#ff35cf"/><stop offset=".437" stop-color="#ff22a6"/><stop offset=".568" stop-color="#ff0665"/><stop offset=".748" stop-color="#ff0036"/><stop offset="1.000" stop-color="#ff0014"/></linearGradient><linearGradient id="i79" gradientUnits="userSpaceOnUse" x1="1273" x2="1678"><stop offset=".000" stop-color="#0077ff"/><stop offset=".094" stop-color="#016cff"/><stop offset=".225" stop-color="#7759ff"/><stop offset=".343" stop-color="#ff44ff"/><stop offset=".388" stop-color="#ff2fce"/><stop offset=".440" stop-color="#ff1ea5"/><stop offset=".570" stop-color="#ff0365"/><stop offset=".751" stop-color="#ff0037"/><stop offset="1.000" stop-color="#ff0015"/></linearGradient><linearGradient id="i80" gradientUnits="userSpaceOnUse" x1="1273" x2="1678"><stop offset=".000" stop-color="#0072ff"/><stop offset=".091" stop-color="#0167ff"/><stop offset=".225" stop-color="#7954ff"/><stop offset=".343" stop-color="#ff3eff"/><stop offset=".388" stop-color="#ff2bcf"/><stop offset=".440" stop-color="#ff1aa6"/><stop offset=".570" stop-color="#ff0066"/><stop offset=".751" stop-color="#ff0038"/><stop offset="1.000" stop-color="#ff0016"/></linearGradient><linearGradient id="i81" gradientUnits="userSpaceOnUse" x1="1273" x2="1678"><stop offset=".000" stop-color="#006dff"/><stop offset=".089" stop-color="#0163ff"/><stop offset=".220" stop-color="#754fff"/><stop offset=".346" stop-color="#ff38fd"/><stop offset=".390" stop-color="#ff25ce"/><stop offset=".442" stop-color="#ff16a6"/><stop offset=".573" stop-color="#ff0067"/><stop offset=".753" stop-color="#ff0038"/><stop offset="1.000" stop-color="#ff0017"/></linearGradient><linearGradient id="i82" gradientUnits="userSpaceOnUse" x1="1273" x2="1678"><stop offset=".000" stop-color="#0069ff"/><stop offset=".086" stop-color="#025eff"/><stop offset=".220" stop-color="#764aff"/><stop offset=".346" stop-color="#ff32fd"/><stop offset=".390" stop-color="#ff21cf"/><stop offset=".442" stop-color="#ff12a7"/><stop offset=".573" stop-color="#ff0068"/><stop offset=".753" stop-color="#ff0039"/><stop offset="1.000" stop-color="#ff0017"/></linearGradient><linearGradient id="i83" gradientUnits="userSpaceOnUse" x1="1273" x2="1678"><stop offset=".000" stop-color="#0065ff"/><stop offset=".084" stop-color="#025aff"/><stop offset=".220" stop-color="#7745ff"/><stop offset=".346" stop-color="#ff2dfe"/><stop offset=".390" stop-color="#ff1dcf"/><stop offset=".442" stop-color="#ff0fa8"/><stop offset=".519" stop-color="#ff007e"/><stop offset=".573" stop-color="#ff0069"/><stop offset=".753" stop-color="#ff003a"/><stop offset="1.000" stop-color="#ff0018"/></linearGradient><linearGradient id="i84" gradientUnits="userSpaceOnUse" x1="1273" x2="1678"><stop offset=".000" stop-color="#0060ff"/><stop offset=".079" stop-color="#0056ff"/><stop offset=".220" stop-color="#7841ff"/><stop offset=".346" stop-color="#ff28fe"/><stop offset=".390" stop-color="#ff18d0"/><stop offset=".442" stop-color="#ff0ba9"/><stop offset=".501" stop-color="#ff0088"/><stop offset=".575" stop-color="#ff0069"/><stop offset=".756" stop-color="#ff003b"/><stop offset="1.000" stop-color="#ff0019"/></linearGradient><linearGradient id="i85" gradientUnits="userSpaceOnUse" x1="1273" x2="1678"><stop offset=".000" stop-color="#005cff"/><stop offset=".077" stop-color="#0052ff"/><stop offset=".220" stop-color="#793cff"/><stop offset=".346" stop-color="#ff23ff"/><stop offset=".390" stop-color="#ff14d1"/><stop offset=".442" stop-color="#ff08aa"/><stop offset=".575" stop-color="#ff006a"/><stop offset=".756" stop-color="#ff003c"/><stop offset="1.000" stop-color="#ff001a"/></linearGradient><linearGradient id="i86" gradientUnits="userSpaceOnUse" x1="1273" x2="1678"><stop offset=".000" stop-color="#0058ff"/><stop offset=".074" stop-color="#004eff"/><stop offset=".217" stop-color="#7738ff"/><stop offset=".346" stop-color="#fe1eff"/><stop offset=".393" stop-color="#ff10d0"/><stop offset=".444" stop-color="#ff04a9"/><stop offset=".575" stop-color="#ff006b"/><stop offset=".756" stop-color="#ff003d"/><stop offset="1.000" stop-color="#ff001b"/></linearGradient><linearGradient id="i87" gradientUnits="userSpaceOnUse" x1="1273" x2="1678"><stop offset=".000" stop-color="#0054ff"/><stop offset=".074" stop-color="#024aff"/><stop offset=".215" stop-color="#7634ff"/><stop offset=".348" stop-color="#ff19fd"/><stop offset=".393" stop-color="#ff0cd1"/><stop offset=".447" stop-color="#ff00a9"/><stop offset=".578" stop-color="#ff006c"/><stop offset=".758" stop-color="#ff003d"/><stop offset="1.000" stop-color="#ff001c"/></linearGradient><linearGradient id="i88" gradientUnits="userSpaceOnUse" x1="1273" x2="1678"><stop offset=".000" stop-color="#0050ff"/><stop offset=".067" stop-color="#0047ff"/><stop offset=".079" stop-color="#0845ff"/><stop offset=".217" stop-color="#792fff"/><stop offset=".348" stop-color="#ff14fe"/><stop offset=".393" stop-color="#ff08d2"/><stop offset=".447" stop-color="#ff00aa"/><stop offset=".578" stop-color="#ff006d"/><stop offset=".758" stop-color="#ff003e"/><stop offset="1.000" stop-color="#ff001c"/></linearGradient><linearGradient id="i89" gradientUnits="userSpaceOnUse" x1="1273" x2="1678"><stop offset=".000" stop-color="#004cff"/><stop offset=".064" stop-color="#0043ff"/><stop offset=".084" stop-color="#0d40ff"/><stop offset=".222" stop-color="#7f29ff"/><stop offset=".348" stop-color="#ff10fe"/><stop offset=".395" stop-color="#ff04d0"/><stop offset=".447" stop-color="#ff00ab"/><stop offset=".580" stop-color="#ff006d"/><stop offset=".758" stop-color="#ff003f"/><stop offset="1.000" stop-color="#ff001d"/></linearGradient><linearGradient id="i90" gradientUnits="userSpaceOnUse" x1="1273" x2="1678"><stop offset=".000" stop-color="#0048ff"/><stop offset=".062" stop-color="#003fff"/><stop offset=".089" stop-color="#133bff"/><stop offset=".225" stop-color="#8225ff"/><stop offset=".348" stop-color="#ff0bff"/><stop offset=".395" stop-color="#ff00d1"/><stop offset=".447" stop-color="#ff00ac"/><stop offset=".580" stop-color="#ff006e"/><stop offset=".758" stop-color="#ff0040"/><stop offset="1.000" stop-color="#ff001e"/></linearGradient><linearGradient id="i91" gradientUnits="userSpaceOnUse" x1="1273" x2="1678"><stop offset=".000" stop-color="#0044ff"/><stop offset=".059" stop-color="#003cff"/><stop offset=".091" stop-color="#1637ff"/><stop offset=".227" stop-color="#8520ff"/><stop offset=".348" stop-color="#ff07ff"/><stop offset=".447" stop-color="#ff00ad"/><stop offset=".580" stop-color="#ff006f"/><stop offset=".760" stop-color="#ff0041"/><stop offset="1.000" stop-color="#ff001f"/></linearGradient><linearGradient id="i92" gradientUnits="userSpaceOnUse" x1="1273" x2="1678"><stop offset=".000" stop-color="#0040ff"/><stop offset=".057" stop-color="#0038ff"/><stop offset=".094" stop-color="#1a33ff"/><stop offset=".225" stop-color="#831cff"/><stop offset=".351" stop-color="#ff02fd"/><stop offset=".449" stop-color="#ff00ac"/><stop offset=".583" stop-color="#ff006f"/><stop offset=".760" stop-color="#ff0042"/><stop offset="1.000" stop-color="#ff0020"/></linearGradient><linearGradient id="i93" gradientUnits="userSpaceOnUse" x1="1273" x2="1678"><stop offset=".000" stop-color="#003cff"/><stop offset=".054" stop-color="#0035ff"/><stop offset=".099" stop-color="#1f2eff"/><stop offset=".227" stop-color="#8618ff"/><stop offset=".351" stop-color="#ff00fe"/><stop offset=".449" stop-color="#ff00ad"/><stop offset=".583" stop-color="#ff0070"/><stop offset=".760" stop-color="#ff0043"/><stop offset="1.000" stop-color="#ff0021"/></linearGradient><linearGradient id="i94" gradientUnits="userSpaceOnUse" x1="1273" x2="1678"><stop offset=".000" stop-color="#0039ff"/><stop offset=".052" stop-color="#0031ff"/><stop offset=".104" stop-color="#242aff"/><stop offset=".232" stop-color="#8c13ff"/><stop offset=".351" stop-color="#ff00fe"/><stop offset=".452" stop-color="#ff00ad"/><stop offset=".585" stop-color="#ff0070"/><stop offset=".763" stop-color="#ff0043"/><stop offset="1.000" stop-color="#ff0021"/></linearGradient><linearGradient id="i95" gradientUnits="userSpaceOnUse" x1="1273" x2="1678"><stop offset=".000" stop-color="#0035ff"/><stop offset=".049" stop-color="#002eff"/><stop offset=".109" stop-color="#2925ff"/><stop offset=".235" stop-color="#8e0fff"/><stop offset=".351" stop-color="#ff00ff"/><stop offset=".452" stop-color="#ff00ad"/><stop offset=".585" stop-color="#ff0071"/><stop offset=".763" stop-color="#ff0044"/><stop offset="1.000" stop-color="#ff0022"/></linearGradient><linearGradient id="i96" gradientUnits="userSpaceOnUse" x1="1273" x2="1678"><stop offset=".000" stop-color="#0032ff"/><stop offset=".047" stop-color="#002bff"/><stop offset=".114" stop-color="#2f21ff"/><stop offset=".237" stop-color="#910aff"/><stop offset=".351" stop-color="#ff00ff"/><stop offset=".452" stop-color="#ff00ae"/><stop offset=".585" stop-color="#ff0072"/><stop offset=".763" stop-color="#ff0045"/><stop offset="1.000" stop-color="#ff0023"/></linearGradient><linearGradient id="i97" gradientUnits="userSpaceOnUse" x1="1273" x2="1678"><stop offset=".000" stop-color="#002eff"/><stop offset=".044" stop-color="#0128ff"/><stop offset=".116" stop-color="#321dff"/><stop offset=".269" stop-color="#ae00ff"/><stop offset=".351" stop-color="#fe00ff"/><stop offset=".452" stop-color="#ff00af"/><stop offset=".585" stop-color="#ff0073"/><stop offset=".763" stop-color="#ff0046"/><stop offset="1.000" stop-color="#ff0024"/></linearGradient><linearGradient id="i98" gradientUnits="userSpaceOnUse" x1="1273" x2="1678"><stop offset=".000" stop-color="#002bff"/><stop offset=".042" stop-color="#0125ff"/><stop offset=".119" stop-color="#3519ff"/><stop offset=".252" stop-color="#9f00ff"/><stop offset=".353" stop-color="#ff00fe"/><stop offset=".454" stop-color="#ff00af"/><stop offset=".588" stop-color="#ff0073"/><stop offset=".765" stop-color="#ff0046"/><stop offset="1.000" stop-color="#ff0024"/></linearGradient><linearGradient id="i99" gradientUnits="userSpaceOnUse" x1="1273" x2="1678"><stop offset=".000" stop-color="#0028ff"/><stop offset=".040" stop-color="#0122ff"/><stop offset=".123" stop-color="#3a14ff"/><stop offset=".235" stop-color="#9100ff"/><stop offset=".353" stop-color="#ff00fe"/><stop offset=".454" stop-color="#ff00b0"/><stop offset=".588" stop-color="#ff0074"/><stop offset=".765" stop-color="#ff0047"/><stop offset="1.000" stop-color="#ff0025"/></linearGradient><linearGradient id="i100" gradientUnits="userSpaceOnUse" x1="1273" x2="1678"><stop offset=".000" stop-color="#0024ff"/><stop offset=".037" stop-color="#011fff"/><stop offset=".131" stop-color="#4110ff"/><stop offset=".217" stop-color="#8300ff"/><stop offset=".353" stop-color="#ff00fe"/><stop offset=".454" stop-color="#ff00b0"/><stop offset=".590" stop-color="#ff0075"/><stop offset=".768" stop-color="#ff0048"/><stop offset="1.000" stop-color="#ff0026"/></linearGradient><linearGradient id="i101" gradientUnits="userSpaceOnUse" x1="1273" x2="1678"><stop offset=".000" stop-color="#0021ff"/><stop offset=".035" stop-color="#011cff"/><stop offset=".136" stop-color="#450cff"/><stop offset=".200" stop-color="#7600ff"/><stop offset=".353" stop-color="#ff00ff"/><stop offset=".454" stop-color="#ff00b1"/><stop offset=".590" stop-color="#ff0075"/><stop offset=".768" stop-color="#ff0049"/><stop offset="1.000" stop-color="#ff0027"/></linearGradient><linearGradient id="i102" gradientUnits="userSpaceOnUse" x1="1273" x2="1678"><stop offset=".000" stop-color="#001eff"/><stop offset=".032" stop-color="#0119ff"/><stop offset=".138" stop-color="#4808ff"/><stop offset=".249" stop-color="#9f00ff"/><stop offset=".353" stop-color="#ff00ff"/><stop offset=".457" stop-color="#ff00b1"/><stop offset=".590" stop-color="#ff0076"/><stop offset=".768" stop-color="#ff0049"/><stop offset="1.000" stop-color="#ff0028"/></linearGradient><linearGradient id="i103" gradientUnits="userSpaceOnUse" x1="1273" x2="1678"><stop offset=".000" stop-color="#001bff"/><stop offset=".027" stop-color="#0017ff"/><stop offset=".141" stop-color="#4b04ff"/><stop offset=".247" stop-color="#9e00ff"/><stop offset=".356" stop-color="#ff00fd"/><stop offset=".459" stop-color="#ff00b0"/><stop offset=".593" stop-color="#ff0077"/><stop offset=".768" stop-color="#ff004a"/><stop offset="1.000" stop-color="#ff0028"/></linearGradient><linearGradient id="i104" gradientUnits="userSpaceOnUse" x1="1273" x2="1678"><stop offset=".000" stop-color="#0018ff"/><stop offset=".025" stop-color="#0014ff"/><stop offset=".146" stop-color="#5000ff"/><stop offset=".249" stop-color="#a000ff"/><stop offset=".356" stop-color="#ff00fe"/><stop offset=".459" stop-color="#ff00b1"/><stop offset=".593" stop-color="#ff0077"/><stop offset=".768" stop-color="#ff004b"/><stop offset="1.000" stop-color="#ff0029"/></linearGradient><linearGradient id="i105" gradientUnits="userSpaceOnUse" x1="1273" x2="1678"><stop offset=".000" stop-color="#0015ff"/><stop offset=".022" stop-color="#0011ff"/><stop offset=".151" stop-color="#5500ff"/><stop offset=".254" stop-color="#a500ff"/><stop offset=".356" stop-color="#ff00fe"/><stop offset=".459" stop-color="#ff00b2"/><stop offset=".593" stop-color="#ff0078"/><stop offset=".768" stop-color="#ff004c"/><stop offset="1.000" stop-color="#ff002a"/></linearGradient><linearGradient id="i106" gradientUnits="userSpaceOnUse" x1="1273" x2="1678"><stop offset=".000" stop-color="#0012ff"/><stop offset=".020" stop-color="#000fff"/><stop offset=".158" stop-color="#5b00ff"/><stop offset=".356" stop-color="#ff00ff"/><stop offset=".459" stop-color="#ff00b3"/><stop offset=".593" stop-color="#ff0079"/><stop offset=".768" stop-color="#ff004d"/><stop offset="1.000" stop-color="#ff002b"/></linearGradient><linearGradient id="i107" gradientUnits="userSpaceOnUse" x1="1273" x2="1678"><stop offset=".000" stop-color="#000fff"/><stop offset=".017" stop-color="#000cff"/><stop offset=".160" stop-color="#5e00ff"/><stop offset=".356" stop-color="#ff00ff"/><stop offset=".459" stop-color="#ff00b3"/><stop offset=".595" stop-color="#ff0079"/><stop offset=".770" stop-color="#ff004d"/><stop offset="1.000" stop-color="#ff002b"/></linearGradient><linearGradient id="i108" gradientUnits="userSpaceOnUse" x1="1273" x2="1678"><stop offset=".000" stop-color="#000cff"/><stop offset=".020" stop-color="#0409ff"/><stop offset=".163" stop-color="#6000ff"/><stop offset=".358" stop-color="#ff00fd"/><stop offset=".462" stop-color="#ff00b3"/><stop offset=".598" stop-color="#ff0079"/><stop offset=".773" stop-color="#ff004e"/><stop offset="1.000" stop-color="#ff002c"/></linearGradient><linearGradient id="i109" gradientUnits="userSpaceOnUse" x1="1273" x2="1678"><stop offset=".000" stop-color="#0009ff"/><stop offset=".037" stop-color="#0f03ff"/><stop offset=".168" stop-color="#6500ff"/><stop offset=".358" stop-color="#ff00fe"/><stop offset=".462" stop-color="#ff00b4"/><stop offset=".598" stop-color="#ff007a"/><stop offset=".773" stop-color="#ff004e"/><stop offset="1.000" stop-color="#ff002d"/></linearGradient><linearGradient id="i110" gradientUnits="userSpaceOnUse" x1="1273" x2="1678"><stop offset=".000" stop-color="#0006ff"/><stop offset=".173" stop-color="#6900ff"/><stop offset=".358" stop-color="#ff00fe"/><stop offset=".462" stop-color="#ff00b4"/><stop offset=".598" stop-color="#ff007b"/><stop offset=".773" stop-color="#ff004f"/><stop offset="1.000" stop-color="#ff002d"/></linearGradient><linearGradient id="i111" gradientUnits="userSpaceOnUse" x1="1273" x2="1678"><stop offset=".000" stop-color="#0003ff"/><stop offset=".180" stop-color="#6f00ff"/><stop offset=".358" stop-color="#ff00ff"/><stop offset=".462" stop-color="#ff00b5"/><stop offset=".598" stop-color="#ff007c"/><stop offset=".773" stop-color="#ff0050"/><stop offset="1.000" stop-color="#ff002e"/></linearGradient><linearGradient id="i112" gradientUnits="userSpaceOnUse" x1="1273" x2="1678"><stop offset=".000" stop-color="#0001ff"/><stop offset=".185" stop-color="#7400ff"/><stop offset=".358" stop-color="#ff00ff"/><stop offset=".462" stop-color="#ff00b6"/><stop offset=".598" stop-color="#ff007d"/><stop offset=".773" stop-color="#ff0051"/><stop offset="1.000" stop-color="#ff002f"/></linearGradient><clipPath id="insbox"><rect x="1601.0" y="154.5" width="233.0" height="195.0"/></clipPath><clipPath id="inslo"><path d="M1601.0,174.9 L1834.0,329.8 V349.5 H1601.0 Z"/></clipPath><linearGradient id="nu0" gradientUnits="userSpaceOnUse" x1="1601" x2="1835"><stop offset=".000" stop-color="#6a9900"/><stop offset=".782" stop-color="#999900"/><stop offset="1.000" stop-color="#998c00"/></linearGradient><linearGradient id="nu1" gradientUnits="userSpaceOnUse" x1="1601" x2="1835"><stop offset=".000" stop-color="#6b9900"/><stop offset=".769" stop-color="#999900"/><stop offset="1.000" stop-color="#998b00"/></linearGradient><linearGradient id="nu2" gradientUnits="userSpaceOnUse" x1="1601" x2="1835"><stop offset=".000" stop-color="#6b9900"/><stop offset=".756" stop-color="#999900"/><stop offset="1.000" stop-color="#998b00"/></linearGradient><linearGradient id="nu3" gradientUnits="userSpaceOnUse" x1="1601" x2="1835"><stop offset=".000" stop-color="#6c9900"/><stop offset=".744" stop-color="#999900"/><stop offset="1.000" stop-color="#998a00"/></linearGradient><linearGradient id="nu4" gradientUnits="userSpaceOnUse" x1="1601" x2="1835"><stop offset=".000" stop-color="#6d9900"/><stop offset=".731" stop-color="#999900"/><stop offset="1.000" stop-color="#998900"/></linearGradient><linearGradient id="nu5" gradientUnits="userSpaceOnUse" x1="1601" x2="1835"><stop offset=".000" stop-color="#6d9900"/><stop offset=".722" stop-color="#999900"/><stop offset="1.000" stop-color="#998800"/></linearGradient><linearGradient id="nu6" gradientUnits="userSpaceOnUse" x1="1601" x2="1835"><stop offset=".000" stop-color="#6e9900"/><stop offset=".709" stop-color="#999900"/><stop offset="1.000" stop-color="#998800"/></linearGradient><linearGradient id="nu7" gradientUnits="userSpaceOnUse" x1="1601" x2="1835"><stop offset=".000" stop-color="#6e9901"/><stop offset=".697" stop-color="#999900"/><stop offset="1.000" stop-color="#998700"/></linearGradient><linearGradient id="nu8" gradientUnits="userSpaceOnUse" x1="1601" x2="1835"><stop offset=".000" stop-color="#6f9901"/><stop offset=".684" stop-color="#999900"/><stop offset="1.000" stop-color="#998600"/></linearGradient><linearGradient id="nu9" gradientUnits="userSpaceOnUse" x1="1601" x2="1835"><stop offset=".000" stop-color="#709901"/><stop offset=".671" stop-color="#999900"/><stop offset="1.000" stop-color="#998600"/></linearGradient><linearGradient id="nu10" gradientUnits="userSpaceOnUse" x1="1601" x2="1835"><stop offset=".000" stop-color="#709902"/><stop offset=".658" stop-color="#999900"/><stop offset="1.000" stop-color="#998500"/></linearGradient><linearGradient id="nu11" gradientUnits="userSpaceOnUse" x1="1601" x2="1835"><stop offset=".000" stop-color="#719902"/><stop offset=".645" stop-color="#999900"/><stop offset="1.000" stop-color="#998400"/></linearGradient><linearGradient id="nu12" gradientUnits="userSpaceOnUse" x1="1601" x2="1835"><stop offset=".000" stop-color="#729903"/><stop offset=".632" stop-color="#999900"/><stop offset="1.000" stop-color="#998400"/></linearGradient><linearGradient id="nu13" gradientUnits="userSpaceOnUse" x1="1601" x2="1835"><stop offset=".000" stop-color="#729903"/><stop offset=".624" stop-color="#999900"/><stop offset="1.000" stop-color="#998300"/></linearGradient><linearGradient id="nu14" gradientUnits="userSpaceOnUse" x1="1601" x2="1835"><stop offset=".000" stop-color="#739903"/><stop offset=".611" stop-color="#999900"/><stop offset="1.000" stop-color="#998200"/></linearGradient><linearGradient id="nu15" gradientUnits="userSpaceOnUse" x1="1601" x2="1835"><stop offset=".000" stop-color="#739904"/><stop offset=".598" stop-color="#999900"/><stop offset="1.000" stop-color="#998200"/></linearGradient><linearGradient id="nu16" gradientUnits="userSpaceOnUse" x1="1601" x2="1835"><stop offset=".000" stop-color="#749904"/><stop offset=".585" stop-color="#999900"/><stop offset="1.000" stop-color="#998100"/></linearGradient><linearGradient id="nu17" gradientUnits="userSpaceOnUse" x1="1601" x2="1835"><stop offset=".000" stop-color="#759904"/><stop offset=".573" stop-color="#999900"/><stop offset="1.000" stop-color="#998000"/></linearGradient><linearGradient id="nu18" gradientUnits="userSpaceOnUse" x1="1601" x2="1835"><stop offset=".000" stop-color="#759905"/><stop offset=".560" stop-color="#999900"/><stop offset="1.000" stop-color="#998000"/></linearGradient><linearGradient id="nu19" gradientUnits="userSpaceOnUse" x1="1601" x2="1835"><stop offset=".000" stop-color="#769905"/><stop offset=".547" stop-color="#999900"/><stop offset="1.000" stop-color="#997f00"/></linearGradient><linearGradient id="nu20" gradientUnits="userSpaceOnUse" x1="1601" x2="1835"><stop offset=".000" stop-color="#779905"/><stop offset=".534" stop-color="#999900"/><stop offset="1.000" stop-color="#997e00"/></linearGradient><linearGradient id="nu21" gradientUnits="userSpaceOnUse" x1="1601" x2="1835"><stop offset=".000" stop-color="#779906"/><stop offset=".526" stop-color="#999900"/><stop offset="1.000" stop-color="#997e00"/></linearGradient><linearGradient id="nu22" gradientUnits="userSpaceOnUse" x1="1601" x2="1835"><stop offset=".000" stop-color="#789906"/><stop offset=".513" stop-color="#999900"/><stop offset="1.000" stop-color="#997d00"/></linearGradient><linearGradient id="nu23" gradientUnits="userSpaceOnUse" x1="1601" x2="1835"><stop offset=".000" stop-color="#799906"/><stop offset=".500" stop-color="#999900"/><stop offset="1.000" stop-color="#997c00"/></linearGradient><linearGradient id="nu24" gradientUnits="userSpaceOnUse" x1="1601" x2="1835"><stop offset=".000" stop-color="#7a9907"/><stop offset=".487" stop-color="#999900"/><stop offset="1.000" stop-color="#997c00"/></linearGradient><linearGradient id="nu25" gradientUnits="userSpaceOnUse" x1="1601" x2="1835"><stop offset=".000" stop-color="#7a9907"/><stop offset=".474" stop-color="#999901"/><stop offset="1.000" stop-color="#997b00"/></linearGradient><linearGradient id="nu26" gradientUnits="userSpaceOnUse" x1="1601" x2="1835"><stop offset=".000" stop-color="#7b9908"/><stop offset=".462" stop-color="#999901"/><stop offset="1.000" stop-color="#997a00"/></linearGradient><linearGradient id="nu27" gradientUnits="userSpaceOnUse" x1="1601" x2="1835"><stop offset=".000" stop-color="#7c9908"/><stop offset=".449" stop-color="#999902"/><stop offset="1.000" stop-color="#997a00"/></linearGradient><linearGradient id="nu28" gradientUnits="userSpaceOnUse" x1="1601" x2="1835"><stop offset=".000" stop-color="#7c9908"/><stop offset=".436" stop-color="#999902"/><stop offset="1.000" stop-color="#997900"/></linearGradient><linearGradient id="nu29" gradientUnits="userSpaceOnUse" x1="1601" x2="1835"><stop offset=".000" stop-color="#7d9909"/><stop offset=".427" stop-color="#999903"/><stop offset="1.000" stop-color="#997800"/></linearGradient><linearGradient id="nu30" gradientUnits="userSpaceOnUse" x1="1601" x2="1835"><stop offset=".000" stop-color="#7e9909"/><stop offset=".415" stop-color="#999903"/><stop offset="1.000" stop-color="#997800"/></linearGradient><linearGradient id="nu31" gradientUnits="userSpaceOnUse" x1="1601" x2="1835"><stop offset=".000" stop-color="#7e9909"/><stop offset=".402" stop-color="#999904"/><stop offset="1.000" stop-color="#997700"/></linearGradient><linearGradient id="nu32" gradientUnits="userSpaceOnUse" x1="1601" x2="1835"><stop offset=".000" stop-color="#7f990a"/><stop offset=".389" stop-color="#999905"/><stop offset="1.000" stop-color="#997600"/></linearGradient><linearGradient id="nu33" gradientUnits="userSpaceOnUse" x1="1601" x2="1835"><stop offset=".000" stop-color="#80990a"/><stop offset=".376" stop-color="#999905"/><stop offset="1.000" stop-color="#997600"/></linearGradient><linearGradient id="nu34" gradientUnits="userSpaceOnUse" x1="1601" x2="1835"><stop offset=".000" stop-color="#81990b"/><stop offset=".363" stop-color="#999906"/><stop offset="1.000" stop-color="#997500"/></linearGradient><linearGradient id="nu35" gradientUnits="userSpaceOnUse" x1="1601" x2="1835"><stop offset=".000" stop-color="#81990b"/><stop offset=".350" stop-color="#999906"/><stop offset="1.000" stop-color="#997400"/></linearGradient><linearGradient id="nu36" gradientUnits="userSpaceOnUse" x1="1601" x2="1835"><stop offset=".000" stop-color="#82990b"/><stop offset=".338" stop-color="#999907"/><stop offset="1.000" stop-color="#997400"/></linearGradient><linearGradient id="nu37" gradientUnits="userSpaceOnUse" x1="1601" x2="1835"><stop offset=".000" stop-color="#83990c"/><stop offset=".329" stop-color="#999907"/><stop offset="1.000" stop-color="#997300"/></linearGradient><linearGradient id="nu38" gradientUnits="userSpaceOnUse" x1="1601" x2="1835"><stop offset=".000" stop-color="#84990c"/><stop offset=".316" stop-color="#999908"/><stop offset="1.000" stop-color="#997300"/></linearGradient><linearGradient id="nu39" gradientUnits="userSpaceOnUse" x1="1601" x2="1835"><stop offset=".000" stop-color="#84990d"/><stop offset=".303" stop-color="#999909"/><stop offset="1.000" stop-color="#997200"/></linearGradient><linearGradient id="nu40" gradientUnits="userSpaceOnUse" x1="1601" x2="1835"><stop offset=".000" stop-color="#85990d"/><stop offset=".291" stop-color="#999909"/><stop offset="1.000" stop-color="#997100"/></linearGradient><linearGradient id="nu41" gradientUnits="userSpaceOnUse" x1="1601" x2="1835"><stop offset=".000" stop-color="#86990e"/><stop offset=".278" stop-color="#99990a"/><stop offset="1.000" stop-color="#997100"/></linearGradient><linearGradient id="nu42" gradientUnits="userSpaceOnUse" x1="1601" x2="1835"><stop offset=".000" stop-color="#87990e"/><stop offset=".265" stop-color="#99990a"/><stop offset="1.000" stop-color="#997000"/></linearGradient><linearGradient id="nu43" gradientUnits="userSpaceOnUse" x1="1601" x2="1835"><stop offset=".000" stop-color="#88990e"/><stop offset=".252" stop-color="#99990b"/><stop offset="1.000" stop-color="#996f00"/></linearGradient><linearGradient id="nu44" gradientUnits="userSpaceOnUse" x1="1601" x2="1835"><stop offset=".000" stop-color="#88990f"/><stop offset=".239" stop-color="#99990c"/><stop offset="1.000" stop-color="#996f00"/></linearGradient><linearGradient id="nu45" gradientUnits="userSpaceOnUse" x1="1601" x2="1835"><stop offset=".000" stop-color="#89990f"/><stop offset=".226" stop-color="#99990c"/><stop offset="1.000" stop-color="#996e00"/></linearGradient><linearGradient id="nu46" gradientUnits="userSpaceOnUse" x1="1601" x2="1835"><stop offset=".000" stop-color="#8a9910"/><stop offset=".218" stop-color="#99990d"/><stop offset="1.000" stop-color="#996e01"/></linearGradient><linearGradient id="nu47" gradientUnits="userSpaceOnUse" x1="1601" x2="1835"><stop offset=".000" stop-color="#8b9910"/><stop offset=".205" stop-color="#99990d"/><stop offset="1.000" stop-color="#996d01"/></linearGradient><linearGradient id="nu48" gradientUnits="userSpaceOnUse" x1="1601" x2="1835"><stop offset=".000" stop-color="#8c9911"/><stop offset=".192" stop-color="#99990e"/><stop offset="1.000" stop-color="#996c01"/></linearGradient><linearGradient id="nl0" gradientUnits="userSpaceOnUse" x1="1601" x2="1835"><stop offset=".000" stop-color="#b1ff00"/><stop offset=".782" stop-color="#ffff00"/><stop offset="1.000" stop-color="#ffe900"/></linearGradient><linearGradient id="nl1" gradientUnits="userSpaceOnUse" x1="1601" x2="1835"><stop offset=".000" stop-color="#b2ff00"/><stop offset=".769" stop-color="#ffff00"/><stop offset="1.000" stop-color="#ffe800"/></linearGradient><linearGradient id="nl2" gradientUnits="userSpaceOnUse" x1="1601" x2="1835"><stop offset=".000" stop-color="#b3ff00"/><stop offset=".756" stop-color="#ffff00"/><stop offset="1.000" stop-color="#ffe700"/></linearGradient><linearGradient id="nl3" gradientUnits="userSpaceOnUse" x1="1601" x2="1835"><stop offset=".000" stop-color="#b4ff00"/><stop offset=".744" stop-color="#ffff00"/><stop offset="1.000" stop-color="#ffe600"/></linearGradient><linearGradient id="nl4" gradientUnits="userSpaceOnUse" x1="1601" x2="1835"><stop offset=".000" stop-color="#b5ff00"/><stop offset=".731" stop-color="#ffff00"/><stop offset="1.000" stop-color="#ffe500"/></linearGradient><linearGradient id="nl5" gradientUnits="userSpaceOnUse" x1="1601" x2="1835"><stop offset=".000" stop-color="#b6ff00"/><stop offset=".722" stop-color="#ffff00"/><stop offset="1.000" stop-color="#ffe300"/></linearGradient><linearGradient id="nl6" gradientUnits="userSpaceOnUse" x1="1601" x2="1835"><stop offset=".000" stop-color="#b7ff01"/><stop offset=".709" stop-color="#ffff00"/><stop offset="1.000" stop-color="#ffe200"/></linearGradient><linearGradient id="nl7" gradientUnits="userSpaceOnUse" x1="1601" x2="1835"><stop offset=".000" stop-color="#b8ff01"/><stop offset=".697" stop-color="#ffff00"/><stop offset="1.000" stop-color="#ffe100"/></linearGradient><linearGradient id="nl8" gradientUnits="userSpaceOnUse" x1="1601" x2="1835"><stop offset=".000" stop-color="#b9ff02"/><stop offset=".684" stop-color="#ffff00"/><stop offset="1.000" stop-color="#ffe000"/></linearGradient><linearGradient id="nl9" gradientUnits="userSpaceOnUse" x1="1601" x2="1835"><stop offset=".000" stop-color="#baff02"/><stop offset=".671" stop-color="#ffff00"/><stop offset="1.000" stop-color="#ffdf00"/></linearGradient><linearGradient id="nl10" gradientUnits="userSpaceOnUse" x1="1601" x2="1835"><stop offset=".000" stop-color="#bbff03"/><stop offset=".658" stop-color="#ffff00"/><stop offset="1.000" stop-color="#ffde00"/></linearGradient><linearGradient id="nl11" gradientUnits="userSpaceOnUse" x1="1601" x2="1835"><stop offset=".000" stop-color="#bcff04"/><stop offset=".645" stop-color="#ffff00"/><stop offset="1.000" stop-color="#ffdc00"/></linearGradient><linearGradient id="nl12" gradientUnits="userSpaceOnUse" x1="1601" x2="1835"><stop offset=".000" stop-color="#bdff04"/><stop offset=".632" stop-color="#ffff00"/><stop offset="1.000" stop-color="#ffdb00"/></linearGradient><linearGradient id="nl13" gradientUnits="userSpaceOnUse" x1="1601" x2="1835"><stop offset=".000" stop-color="#beff05"/><stop offset=".624" stop-color="#ffff00"/><stop offset="1.000" stop-color="#ffda00"/></linearGradient><linearGradient id="nl14" gradientUnits="userSpaceOnUse" x1="1601" x2="1835"><stop offset=".000" stop-color="#bfff05"/><stop offset=".611" stop-color="#ffff00"/><stop offset="1.000" stop-color="#ffd900"/></linearGradient><linearGradient id="nl15" gradientUnits="userSpaceOnUse" x1="1601" x2="1835"><stop offset=".000" stop-color="#c0ff06"/><stop offset=".598" stop-color="#ffff00"/><stop offset="1.000" stop-color="#ffd800"/></linearGradient><linearGradient id="nl16" gradientUnits="userSpaceOnUse" x1="1601" x2="1835"><stop offset=".000" stop-color="#c2ff07"/><stop offset=".585" stop-color="#ffff00"/><stop offset="1.000" stop-color="#ffd700"/></linearGradient><linearGradient id="nl17" gradientUnits="userSpaceOnUse" x1="1601" x2="1835"><stop offset=".000" stop-color="#c3ff07"/><stop offset=".573" stop-color="#ffff00"/><stop offset="1.000" stop-color="#ffd600"/></linearGradient><linearGradient id="nl18" gradientUnits="userSpaceOnUse" x1="1601" x2="1835"><stop offset=".000" stop-color="#c4ff08"/><stop offset=".560" stop-color="#ffff00"/><stop offset="1.000" stop-color="#ffd500"/></linearGradient><linearGradient id="nl19" gradientUnits="userSpaceOnUse" x1="1601" x2="1835"><stop offset=".000" stop-color="#c5ff08"/><stop offset=".547" stop-color="#ffff00"/><stop offset="1.000" stop-color="#ffd300"/></linearGradient><linearGradient id="nl20" gradientUnits="userSpaceOnUse" x1="1601" x2="1835"><stop offset=".000" stop-color="#c6ff09"/><stop offset=".534" stop-color="#ffff00"/><stop offset="1.000" stop-color="#ffd200"/></linearGradient><linearGradient id="nl21" gradientUnits="userSpaceOnUse" x1="1601" x2="1835"><stop offset=".000" stop-color="#c7ff0a"/><stop offset=".526" stop-color="#ffff00"/><stop offset="1.000" stop-color="#ffd100"/></linearGradient><linearGradient id="nl22" gradientUnits="userSpaceOnUse" x1="1601" x2="1835"><stop offset=".000" stop-color="#c8ff0a"/><stop offset=".513" stop-color="#ffff00"/><stop offset="1.000" stop-color="#ffd000"/></linearGradient><linearGradient id="nl23" gradientUnits="userSpaceOnUse" x1="1601" x2="1835"><stop offset=".000" stop-color="#c9ff0b"/><stop offset=".500" stop-color="#ffff00"/><stop offset="1.000" stop-color="#ffcf00"/></linearGradient><linearGradient id="nl24" gradientUnits="userSpaceOnUse" x1="1601" x2="1835"><stop offset=".000" stop-color="#cbff0b"/><stop offset=".487" stop-color="#ffff00"/><stop offset="1.000" stop-color="#ffce00"/></linearGradient><linearGradient id="nl25" gradientUnits="userSpaceOnUse" x1="1601" x2="1835"><stop offset=".000" stop-color="#ccff0c"/><stop offset=".474" stop-color="#ffff01"/><stop offset="1.000" stop-color="#ffcd00"/></linearGradient><linearGradient id="nl26" gradientUnits="userSpaceOnUse" x1="1601" x2="1835"><stop offset=".000" stop-color="#cdff0d"/><stop offset=".462" stop-color="#ffff02"/><stop offset="1.000" stop-color="#ffcc00"/></linearGradient><linearGradient id="nl27" gradientUnits="userSpaceOnUse" x1="1601" x2="1835"><stop offset=".000" stop-color="#ceff0d"/><stop offset=".449" stop-color="#ffff03"/><stop offset="1.000" stop-color="#ffcb00"/></linearGradient><linearGradient id="nl28" gradientUnits="userSpaceOnUse" x1="1601" x2="1835"><stop offset=".000" stop-color="#cfff0e"/><stop offset=".436" stop-color="#ffff04"/><stop offset="1.000" stop-color="#ffca00"/></linearGradient><linearGradient id="nl29" gradientUnits="userSpaceOnUse" x1="1601" x2="1835"><stop offset=".000" stop-color="#d0ff0f"/><stop offset=".427" stop-color="#ffff05"/><stop offset="1.000" stop-color="#ffc800"/></linearGradient><linearGradient id="nl30" gradientUnits="userSpaceOnUse" x1="1601" x2="1835"><stop offset=".000" stop-color="#d2ff0f"/><stop offset=".415" stop-color="#ffff06"/><stop offset="1.000" stop-color="#ffc700"/></linearGradient><linearGradient id="nl31" gradientUnits="userSpaceOnUse" x1="1601" x2="1835"><stop offset=".000" stop-color="#d3ff10"/><stop offset=".402" stop-color="#ffff07"/><stop offset="1.000" stop-color="#ffc600"/></linearGradient><linearGradient id="nl32" gradientUnits="userSpaceOnUse" x1="1601" x2="1835"><stop offset=".000" stop-color="#d4ff10"/><stop offset=".389" stop-color="#ffff08"/><stop offset="1.000" stop-color="#ffc500"/></linearGradient><linearGradient id="nl33" gradientUnits="userSpaceOnUse" x1="1601" x2="1835"><stop offset=".000" stop-color="#d5ff11"/><stop offset=".376" stop-color="#ffff09"/><stop offset="1.000" stop-color="#ffc400"/></linearGradient><linearGradient id="nl34" gradientUnits="userSpaceOnUse" x1="1601" x2="1835"><stop offset=".000" stop-color="#d6ff12"/><stop offset=".363" stop-color="#ffff0a"/><stop offset="1.000" stop-color="#ffc300"/></linearGradient><linearGradient id="nl35" gradientUnits="userSpaceOnUse" x1="1601" x2="1835"><stop offset=".000" stop-color="#d8ff12"/><stop offset=".350" stop-color="#ffff0b"/><stop offset="1.000" stop-color="#ffc200"/></linearGradient><linearGradient id="nl36" gradientUnits="userSpaceOnUse" x1="1601" x2="1835"><stop offset=".000" stop-color="#d9ff13"/><stop offset=".338" stop-color="#ffff0b"/><stop offset="1.000" stop-color="#ffc100"/></linearGradient><linearGradient id="nl37" gradientUnits="userSpaceOnUse" x1="1601" x2="1835"><stop offset=".000" stop-color="#daff14"/><stop offset=".329" stop-color="#ffff0c"/><stop offset="1.000" stop-color="#ffc000"/></linearGradient><linearGradient id="nl38" gradientUnits="userSpaceOnUse" x1="1601" x2="1835"><stop offset=".000" stop-color="#dbff14"/><stop offset=".316" stop-color="#ffff0d"/><stop offset="1.000" stop-color="#ffbf00"/></linearGradient><linearGradient id="nl39" gradientUnits="userSpaceOnUse" x1="1601" x2="1835"><stop offset=".000" stop-color="#ddff15"/><stop offset=".303" stop-color="#ffff0e"/><stop offset="1.000" stop-color="#ffbe00"/></linearGradient><linearGradient id="nl40" gradientUnits="userSpaceOnUse" x1="1601" x2="1835"><stop offset=".000" stop-color="#deff16"/><stop offset=".291" stop-color="#ffff0f"/><stop offset="1.000" stop-color="#ffbd00"/></linearGradient><linearGradient id="nl41" gradientUnits="userSpaceOnUse" x1="1601" x2="1835"><stop offset=".000" stop-color="#dfff17"/><stop offset=".278" stop-color="#ffff10"/><stop offset="1.000" stop-color="#ffbc00"/></linearGradient><linearGradient id="nl42" gradientUnits="userSpaceOnUse" x1="1601" x2="1835"><stop offset=".000" stop-color="#e1ff17"/><stop offset=".265" stop-color="#ffff11"/><stop offset="1.000" stop-color="#ffbb00"/></linearGradient><linearGradient id="nl43" gradientUnits="userSpaceOnUse" x1="1601" x2="1835"><stop offset=".000" stop-color="#e2ff18"/><stop offset=".252" stop-color="#ffff12"/><stop offset="1.000" stop-color="#ffba00"/></linearGradient><linearGradient id="nl44" gradientUnits="userSpaceOnUse" x1="1601" x2="1835"><stop offset=".000" stop-color="#e3ff19"/><stop offset=".239" stop-color="#ffff13"/><stop offset="1.000" stop-color="#ffb900"/></linearGradient><linearGradient id="nl45" gradientUnits="userSpaceOnUse" x1="1601" x2="1835"><stop offset=".000" stop-color="#e5ff19"/><stop offset=".226" stop-color="#ffff14"/><stop offset="1.000" stop-color="#ffb801"/></linearGradient><linearGradient id="nl46" gradientUnits="userSpaceOnUse" x1="1601" x2="1835"><stop offset=".000" stop-color="#e6ff1a"/><stop offset=".218" stop-color="#ffff15"/><stop offset="1.000" stop-color="#ffb701"/></linearGradient><linearGradient id="nl47" gradientUnits="userSpaceOnUse" x1="1601" x2="1835"><stop offset=".000" stop-color="#e7ff1b"/><stop offset=".205" stop-color="#ffff16"/><stop offset="1.000" stop-color="#ffb602"/></linearGradient><linearGradient id="nl48" gradientUnits="userSpaceOnUse" x1="1601" x2="1835"><stop offset=".000" stop-color="#e9ff1c"/><stop offset=".192" stop-color="#ffff17"/><stop offset="1.000" stop-color="#ffb502"/></linearGradient><linearGradient id="rb" x1="0" y1="0" x2="0" y2="1"><stop offset="0" stop-color="#ff5050"/><stop offset="1" stop-color="#ff0a0a"/></linearGradient><linearGradient id="gb" x1="0" y1="0" x2="0" y2="1"><stop offset="0" stop-color="#4aa84a"/><stop offset="1" stop-color="#0a800a"/></linearGradient><linearGradient id="bb" x1="0" y1="0" x2="0" y2="1"><stop offset="0" stop-color="#5050ff"/><stop offset="1" stop-color="#0000f0"/></linearGradient><linearGradient id="thead" x1="0" y1="0" x2="0" y2="1"><stop offset="0" stop-color="#333"/><stop offset="0.45" stop-color="#2a2a2a"/><stop offset="0.5" stop-color="#141414"/><stop offset="1" stop-color="#0c0c0c"/></linearGradient><linearGradient id="bbar" x1="0" y1="0" x2="0" y2="1"><stop offset="0" stop-color="#4a4a4a"/><stop offset="1" stop-color="#262626"/></linearGradient><linearGradient id="bbtn" x1="0" y1="0" x2="0" y2="1"><stop offset="0" stop-color="#b0b0b0"/><stop offset="0.3" stop-color="#9a9a9a"/><stop offset="0.62" stop-color="#6c6c6c"/><stop offset="1" stop-color="#585858"/></linearGradient><linearGradient id="selbtn" x1="0" y1="0" x2="0" y2="1"><stop offset="0" stop-color="#1e1e1e"/><stop offset="1" stop-color="#303030"/></linearGradient><linearGradient id="cbtn" x1="0" y1="0" x2="0" y2="1"><stop offset="0" stop-color="#b8b8b8"/><stop offset="0.5" stop-color="#9c9c9c"/><stop offset="1" stop-color="#787878"/></linearGradient><linearGradient id="ckn" x1="0" y1="0" x2="0" y2="1"><stop offset="0" stop-color="#8a8a8a"/><stop offset="1" stop-color="#b2b2b2"/></linearGradient></defs><rect x="0.0" y="0.0" width="1920.0" height="25.0" fill="#ffffff"/><rect x="0.0" y="25.0" width="1920.0" height="75.0" fill="#232323"/><rect x="0.0" y="100.0" width="1920.0" height="869.0" fill="#333333"/><rect x="0.0" y="100.0" width="1920.0" height="2.0" fill="#3a3a3a"/><g transform="translate(10.5,12.6) rotate(45)"><rect x="-6.4" y="-6.4" width="6" height="6" rx="1" fill="#f2c820"/><rect x="0.4" y="-6.4" width="6" height="6" rx="1" fill="#22c22a"/><rect x="-6.4" y="0.4" width="6" height="6" rx="1" fill="#3cb4ea"/><rect x="0.4" y="0.4" width="6" height="6" rx="1" fill="#dc2a5e"/></g><text x="23.5" y="18.0" font-size="13.6" fill="#2a2a2a" textLength="443.5" lengthAdjust="spacingAndGlyphs">Calman 2025 Calman Ultimate for Business 117 Days Remaining&#160; - Untitled</text><line x1="1790.0" y1="12.5" x2="1801.0" y2="12.5" stroke="#222" stroke-width="1.0"/><rect x="1843.5" y="9.5" width="8" height="8" fill="none" stroke="#222" stroke-width="1"/><path d="M1845.5,9.5 V7.5 H1853.5 V15.5 H1851.5" fill="none" stroke="#222" stroke-width="1"/><line x1="1895.0" y1="7.0" x2="1906.0" y2="18.0" stroke="#222" stroke-width="1.1"/><line x1="1906.0" y1="7.0" x2="1895.0" y2="18.0" stroke="#222" stroke-width="1.1"/><rect x="1" y="25" width="205.5" height="34.5" rx="3" fill="url(#redbtn)" stroke="#b06060" stroke-width="1"/><rect x="1.0" y="25.0" width="205.5" height="4.0" fill="#e23b3b"/><g transform="translate(38.85,41.8) rotate(45)" fill="none" stroke="#fff" stroke-width="3.0" stroke-linejoin="round"><path d="M-0.9,-7.75 H-7.75 V-0.9"/><path d="M0.9,-7.75 H7.75 V-0.9"/><path d="M7.75,0.9 V7.75 H0.9"/><path d="M-0.9,7.75 H-7.75 V0.9"/><g fill="#fff" stroke="none"><rect x="-5.35" y="-5.35" width="4.1" height="4.1" rx="0.8"/><rect x="1.25" y="-5.35" width="4.1" height="4.1" rx="0.8"/><rect x="-5.35" y="1.25" width="4.1" height="4.1" rx="0.8"/><rect x="1.25" y="1.25" width="4.1" height="4.1" rx="0.8"/></g></g><text x="55.0" y="48.5" font-size="28.0" fill="#ffffff" textLength="98.0" lengthAdjust="spacingAndGlyphs">calman</text><circle cx="187.5" cy="41.5" r="10" fill="#d41c1c" stroke="#e4503f" stroke-width="1"/><path d="M181.8,39 L193.2,39 L187.5,45.5 Z" fill="#fff"/><rect x="214.0" y="39.5" width="1706.0" height="5.5" fill="url(#rainbow)"/><rect x="-2" y="65.5" width="32" height="31.5" rx="4" fill="url(#btn)" stroke="#c4c4c4" stroke-width="1.3"/><circle cx="14.5" cy="80.5" r="11" fill="url(#knobg)"/><path d="M11,74.5 L18.5,80.5 L11,86.5 Z" fill="#fff"/><path d="M33.5,100 V70 Q33.5,65.5 38,65.5 H132 Q136.5,65.5 136.5,70 V100" fill="url(#tab)" stroke="#6a6a6a" stroke-width="1"/><line x1="99.0" y1="66.0" x2="99.0" y2="100.0" stroke="#5e5e5e" stroke-width="1.2"/><text x="40.0" y="88.2" font-size="13.4" fill="#e0e0e0" textLength="52.5" lengthAdjust="spacingAndGlyphs">History 1</text><circle cx="116.5" cy="85" r="11" fill="#3a3a3a"/><text x="116.5" y="90.0" font-size="14.0" fill="#888" text-anchor="middle">+</text><rect x="1283.7" y="65.2" width="161.3" height="33.7" rx="3" fill="url(#ibox)"/><rect x="1283.7" y="65.2" width="7" height="33.7" rx="2" fill="#18d018"/><line x1="1405.0" y1="69.0" x2="1405.0" y2="99.0" stroke="#404040" stroke-width="1.2"/><text x="1294.0" y="78.3" font-size="11.8" fill="#eee" textLength="74.0" lengthAdjust="spacingAndGlyphs">X-Rite i1Pro 2</text><text x="1294.0" y="94.7" font-size="11.8" fill="#eee" textLength="63.0" lengthAdjust="spacingAndGlyphs">Direct View</text><circle cx="1383.0" cy="82.5" r="10.5" fill="url(#dknob)"/><path d="M1377.5,79.8 L1388.5,79.8 L1383.0,85.8 Z" fill="#fff"/><circle cx="1428" cy="82" r="14.5" fill="#0000e0" stroke="#c8c8ff" stroke-width="1.3"/><text x="1428.0" y="85.8" font-size="10.0" fill="#fff" text-anchor="middle" textLength="17.0" lengthAdjust="spacingAndGlyphs">236</text><rect x="1452.0" y="65.2" width="235.0" height="33.7" rx="3" fill="url(#ibox)"/><rect x="1452.0" y="65.2" width="7" height="33.7" rx="2" fill="#18d018"/><text x="1462.0" y="78.0" font-size="11.8" fill="#eee" textLength="192.0" lengthAdjust="spacingAndGlyphs">CalMAN Client 3 Pattern Generator</text><circle cx="1668.7" cy="82.5" r="10.5" fill="url(#dknob)"/><path d="M1663.2,79.8 L1674.2,79.8 L1668.7,85.8 Z" fill="#fff"/><rect x="1694.0" y="65.2" width="161.5" height="33.7" rx="3" fill="url(#ibox)"/><rect x="1694.0" y="65.2" width="7" height="33.7" rx="2" fill="#d8d800"/><text x="1704.0" y="78.0" font-size="11.8" fill="#eee" textLength="119.0" lengthAdjust="spacingAndGlyphs">Direct Display Control</text><circle cx="1837.5" cy="82.5" r="10.5" fill="url(#dknob)"/><path d="M1832.0,79.8 L1843.0,79.8 L1837.5,85.8 Z" fill="#fff"/><rect x="1860" y="65.5" width="37" height="31.5" rx="3.5" fill="url(#btn)" stroke="#c8c8c8" stroke-width="1.3"/><circle cx="1878.5" cy="81.5" r="10.5" fill="url(#knobg)"/><g transform="translate(1878.5,81)" fill="#d8d8d8"><circle r="5.6"/><rect x="-1.2" y="-7.3" width="2.4" height="3.5" transform="rotate(0)"/><rect x="-1.2" y="-7.3" width="2.4" height="3.5" transform="rotate(45)"/><rect x="-1.2" y="-7.3" width="2.4" height="3.5" transform="rotate(90)"/><rect x="-1.2" y="-7.3" width="2.4" height="3.5" transform="rotate(135)"/><rect x="-1.2" y="-7.3" width="2.4" height="3.5" transform="rotate(180)"/><rect x="-1.2" y="-7.3" width="2.4" height="3.5" transform="rotate(225)"/><rect x="-1.2" y="-7.3" width="2.4" height="3.5" transform="rotate(270)"/><rect x="-1.2" y="-7.3" width="2.4" height="3.5" transform="rotate(315)"/><circle r="3.3" fill="#8a8a8a"/></g><rect x="1898.5" y="65.5" width="30" height="31.5" rx="3.5" fill="url(#btn)" stroke="#c8c8c8" stroke-width="1.3"/><circle cx="1915" cy="81.5" r="10.5" fill="url(#knobg)"/><path d="M1915.5,75 L1909,81 L1915.5,87 Z" fill="#fff"/><text x="101.0" y="162.3" font-size="45.0" fill="#f4f4f4" textLength="347.0" lengthAdjust="spacingAndGlyphs">Saturation Sweeps</text><text x="268.5" y="215.0" font-size="15.4" fill="#d0d0d0" text-anchor="middle" textLength="84.0" lengthAdjust="spacingAndGlyphs">DeltaE 2000</text><rect x="122.0" y="221.0" width="332.0" height="439.0" fill="#242424"/><line x1="166.1" y1="221.0" x2="166.1" y2="660.0" stroke="#a8a8a8" stroke-width="1.3"/><line x1="210.3" y1="221.0" x2="210.3" y2="660.0" stroke="#a8a8a8" stroke-width="1.3"/><line x1="254.4" y1="221.0" x2="254.4" y2="660.0" stroke="#a8a8a8" stroke-width="1.3"/><line x1="298.6" y1="221.0" x2="298.6" y2="660.0" stroke="#a8a8a8" stroke-width="1.3"/><line x1="342.7" y1="221.0" x2="342.7" y2="660.0" stroke="#a8a8a8" stroke-width="1.3"/><line x1="386.8" y1="221.0" x2="386.8" y2="660.0" stroke="#a8a8a8" stroke-width="1.3"/><line x1="431.0" y1="221.0" x2="431.0" y2="660.0" stroke="#a8a8a8" stroke-width="1.3"/><line x1="122.0" y1="221.0" x2="454.0" y2="221.0" stroke="#a8a8a8" stroke-width="1.5"/><line x1="454.0" y1="221.0" x2="454.0" y2="660.0" stroke="#a8a8a8" stroke-width="1.3"/><line x1="121.5" y1="221.0" x2="121.5" y2="661.0" stroke="#a8a8a8" stroke-width="1.5"/><line x1="121.5" y1="660.5" x2="454.0" y2="660.5" stroke="#a8a8a8" stroke-width="1.5"/><line x1="116.0" y1="221.0" x2="122.0" y2="221.0" stroke="#a8a8a8" stroke-width="1.3"/><line x1="116.0" y1="294.2" x2="122.0" y2="294.2" stroke="#a8a8a8" stroke-width="1.3"/><line x1="116.0" y1="367.3" x2="122.0" y2="367.3" stroke="#a8a8a8" stroke-width="1.3"/><line x1="116.0" y1="440.5" x2="122.0" y2="440.5" stroke="#a8a8a8" stroke-width="1.3"/><line x1="116.0" y1="513.7" x2="122.0" y2="513.7" stroke="#a8a8a8" stroke-width="1.3"/><line x1="116.0" y1="586.9" x2="122.0" y2="586.9" stroke="#a8a8a8" stroke-width="1.3"/><line x1="116.0" y1="660.0" x2="122.0" y2="660.0" stroke="#a8a8a8" stroke-width="1.3"/><line x1="122.0" y1="660.0" x2="122.0" y2="666.0" stroke="#a8a8a8" stroke-width="1.3"/><text x="122.0" y="684.4" font-size="16.9" fill="#d0d0d0" text-anchor="middle" textLength="8.3" lengthAdjust="spacingAndGlyphs">0</text><line x1="166.1" y1="660.0" x2="166.1" y2="666.0" stroke="#a8a8a8" stroke-width="1.3"/><text x="166.1" y="684.4" font-size="16.9" fill="#d0d0d0" text-anchor="middle" textLength="8.3" lengthAdjust="spacingAndGlyphs">2</text><line x1="210.3" y1="660.0" x2="210.3" y2="666.0" stroke="#a8a8a8" stroke-width="1.3"/><text x="210.3" y="684.4" font-size="16.9" fill="#d0d0d0" text-anchor="middle" textLength="8.3" lengthAdjust="spacingAndGlyphs">4</text><line x1="254.4" y1="660.0" x2="254.4" y2="666.0" stroke="#a8a8a8" stroke-width="1.3"/><text x="254.4" y="684.4" font-size="16.9" fill="#d0d0d0" text-anchor="middle" textLength="8.3" lengthAdjust="spacingAndGlyphs">6</text><line x1="298.6" y1="660.0" x2="298.6" y2="666.0" stroke="#a8a8a8" stroke-width="1.3"/><text x="298.6" y="684.4" font-size="16.9" fill="#d0d0d0" text-anchor="middle" textLength="8.3" lengthAdjust="spacingAndGlyphs">8</text><line x1="342.7" y1="660.0" x2="342.7" y2="666.0" stroke="#a8a8a8" stroke-width="1.3"/><text x="342.7" y="684.4" font-size="16.9" fill="#d0d0d0" text-anchor="middle" textLength="16.7" lengthAdjust="spacingAndGlyphs">10</text><line x1="386.8" y1="660.0" x2="386.8" y2="666.0" stroke="#a8a8a8" stroke-width="1.3"/><text x="386.8" y="684.4" font-size="16.9" fill="#d0d0d0" text-anchor="middle" textLength="16.7" lengthAdjust="spacingAndGlyphs">12</text><line x1="431.0" y1="660.0" x2="431.0" y2="666.0" stroke="#a8a8a8" stroke-width="1.3"/><text x="431.0" y="684.4" font-size="16.9" fill="#d0d0d0" text-anchor="middle" textLength="16.7" lengthAdjust="spacingAndGlyphs">14</text><text x="120.5" y="263.3" font-size="16.5" fill="#d0d0d0" text-anchor="end" textLength="38.4" lengthAdjust="spacingAndGlyphs">100%</text><text x="120.5" y="336.5" font-size="16.5" fill="#d0d0d0" text-anchor="end" textLength="30.0" lengthAdjust="spacingAndGlyphs">80%</text><text x="120.5" y="409.6" font-size="16.5" fill="#d0d0d0" text-anchor="end" textLength="30.0" lengthAdjust="spacingAndGlyphs">60%</text><text x="120.5" y="482.8" font-size="16.5" fill="#d0d0d0" text-anchor="end" textLength="30.0" lengthAdjust="spacingAndGlyphs">40%</text><text x="120.5" y="556.0" font-size="16.5" fill="#d0d0d0" text-anchor="end" textLength="30.0" lengthAdjust="spacingAndGlyphs">20%</text><text x="120.5" y="629.2" font-size="16.5" fill="#d0d0d0" text-anchor="end" textLength="25.0" lengthAdjust="spacingAndGlyphs">100</text><rect x="122" y="228.0" width="56.5" height="7" fill="url(#bar0_0)" stroke="#000" stroke-width="1.2"/><rect x="122" y="236.4" width="46.5" height="7" fill="url(#bar0_1)" stroke="#000" stroke-width="1.2"/><rect x="122" y="244.8" width="52.7" height="7" fill="url(#bar0_2)" stroke="#000" stroke-width="1.2"/><rect x="122" y="253.2" width="42.0" height="7" fill="url(#bar0_3)" stroke="#000" stroke-width="1.2"/><rect x="122" y="261.6" width="38.0" height="7" fill="url(#bar0_4)" stroke="#000" stroke-width="1.2"/><rect x="122" y="270.0" width="32.0" height="7" fill="url(#bar0_5)" stroke="#000" stroke-width="1.2"/><rect x="122" y="301.2" width="25.0" height="7" fill="url(#bar1_0)" stroke="#000" stroke-width="1.2"/><rect x="122" y="309.6" width="35.0" height="7" fill="url(#bar1_1)" stroke="#000" stroke-width="1.2"/><rect x="122" y="318.0" width="42.0" height="7" fill="url(#bar1_2)" stroke="#000" stroke-width="1.2"/><rect x="122" y="326.4" width="38.0" height="7" fill="url(#bar1_3)" stroke="#000" stroke-width="1.2"/><rect x="122" y="334.8" width="30.0" height="7" fill="url(#bar1_4)" stroke="#000" stroke-width="1.2"/><rect x="122" y="343.2" width="25.0" height="7" fill="url(#bar1_5)" stroke="#000" stroke-width="1.2"/><rect x="122" y="374.3" width="26.0" height="7" fill="url(#bar2_0)" stroke="#000" stroke-width="1.2"/><rect x="122" y="382.7" width="30.6" height="7" fill="url(#bar2_1)" stroke="#000" stroke-width="1.2"/><rect x="122" y="391.1" width="36.0" height="7" fill="url(#bar2_2)" stroke="#000" stroke-width="1.2"/><rect x="122" y="399.5" width="30.6" height="7" fill="url(#bar2_3)" stroke="#000" stroke-width="1.2"/><rect x="122" y="407.9" width="26.0" height="7" fill="url(#bar2_4)" stroke="#000" stroke-width="1.2"/><rect x="122" y="416.3" width="23.3" height="7" fill="url(#bar2_5)" stroke="#000" stroke-width="1.2"/><rect x="122" y="447.5" width="23.3" height="7" fill="url(#bar3_0)" stroke="#000" stroke-width="1.2"/><rect x="122" y="455.9" width="18.5" height="7" fill="url(#bar3_1)" stroke="#000" stroke-width="1.2"/><rect x="122" y="464.3" width="19.0" height="7" fill="url(#bar3_2)" stroke="#000" stroke-width="1.2"/><rect x="122" y="472.7" width="26.0" height="7" fill="url(#bar3_3)" stroke="#000" stroke-width="1.2"/><rect x="122" y="481.1" width="26.0" height="7" fill="url(#bar3_4)" stroke="#000" stroke-width="1.2"/><rect x="122" y="489.5" width="20.0" height="7" fill="url(#bar3_5)" stroke="#000" stroke-width="1.2"/><rect x="122" y="520.7" width="21.7" height="7" fill="url(#bar4_0)" stroke="#000" stroke-width="1.2"/><rect x="122" y="529.1" width="8.4" height="7" fill="url(#bar4_1)" stroke="#000" stroke-width="1.2"/><rect x="122" y="537.5" width="20.0" height="7" fill="url(#bar4_2)" stroke="#000" stroke-width="1.2"/><rect x="122" y="545.9" width="17.0" height="7" fill="url(#bar4_3)" stroke="#000" stroke-width="1.2"/><rect x="122" y="554.3" width="21.7" height="7" fill="url(#bar4_4)" stroke="#000" stroke-width="1.2"/><rect x="122" y="562.7" width="17.0" height="7" fill="url(#bar4_5)" stroke="#000" stroke-width="1.2"/><rect x="122" y="646.5" width="36.3" height="7" fill="url(#wbar)" stroke="#000" stroke-width="1.2"/><rect x="510.5" y="149.0" width="153.5" height="336.0" fill="#242424"/><text x="573.5" y="143.3" font-size="15.4" fill="#d0d0d0" text-anchor="middle" textLength="48.0" lengthAdjust="spacingAndGlyphs">Delta L</text><line x1="505.5" y1="149.5" x2="664.0" y2="149.5" stroke="#a8a8a8" stroke-width="1.3"/><text x="504.5" y="156.0" font-size="16.5" fill="#d0d0d0" text-anchor="end" textLength="16.7" lengthAdjust="spacingAndGlyphs">15</text><line x1="505.5" y1="206.2" x2="664.0" y2="206.2" stroke="#a8a8a8" stroke-width="1.3"/><text x="504.5" y="212.7" font-size="16.5" fill="#d0d0d0" text-anchor="end" textLength="16.7" lengthAdjust="spacingAndGlyphs">10</text><line x1="505.5" y1="261.5" x2="664.0" y2="261.5" stroke="#a8a8a8" stroke-width="1.3"/><text x="504.5" y="268.0" font-size="16.5" fill="#d0d0d0" text-anchor="end" textLength="8.3" lengthAdjust="spacingAndGlyphs">5</text><line x1="505.5" y1="317.8" x2="664.0" y2="317.8" stroke="#a8a8a8" stroke-width="1.3"/><text x="504.5" y="324.3" font-size="16.5" fill="#d0d0d0" text-anchor="end" textLength="8.3" lengthAdjust="spacingAndGlyphs">0</text><line x1="505.5" y1="374.2" x2="664.0" y2="374.2" stroke="#a8a8a8" stroke-width="1.3"/><text x="504.5" y="380.7" font-size="16.5" fill="#d0d0d0" text-anchor="end" textLength="13.3" lengthAdjust="spacingAndGlyphs">-5</text><line x1="505.5" y1="430.8" x2="664.0" y2="430.8" stroke="#a8a8a8" stroke-width="1.3"/><text x="504.5" y="437.3" font-size="16.5" fill="#d0d0d0" text-anchor="end" textLength="21.7" lengthAdjust="spacingAndGlyphs">-10</text><line x1="505.5" y1="484.5" x2="664.0" y2="484.5" stroke="#a8a8a8" stroke-width="1.3"/><text x="504.5" y="491.0" font-size="16.5" fill="#d0d0d0" text-anchor="end" textLength="21.7" lengthAdjust="spacingAndGlyphs">-15</text><line x1="510.5" y1="148.0" x2="510.5" y2="490.0" stroke="#a8a8a8" stroke-width="1.5"/><line x1="664.0" y1="148.0" x2="664.0" y2="490.0" stroke="#a8a8a8" stroke-width="1.3"/><line x1="510.5" y1="149.5" x2="664.0" y2="149.5" stroke="#a8a8a8" stroke-width="2.2"/><line x1="510.5" y1="484.5" x2="664.0" y2="484.5" stroke="#a8a8a8" stroke-width="1.6"/><rect x="526.0" y="317.8" width="122.0" height="2.6" fill="#aaa600" stroke="#000" stroke-width="1.1"/><text x="587.5" y="501.8" font-size="16.5" fill="#d0d0d0" text-anchor="middle" textLength="38.4" lengthAdjust="spacingAndGlyphs">100%</text><rect x="720.5" y="149.0" width="153.5" height="336.0" fill="#242424"/><text x="783.5" y="143.3" font-size="15.4" fill="#d0d0d0" text-anchor="middle" textLength="48.0" lengthAdjust="spacingAndGlyphs">Delta C</text><line x1="715.5" y1="149.5" x2="874.0" y2="149.5" stroke="#a8a8a8" stroke-width="1.3"/><text x="714.5" y="156.0" font-size="16.5" fill="#d0d0d0" text-anchor="end" textLength="16.7" lengthAdjust="spacingAndGlyphs">15</text><line x1="715.5" y1="206.2" x2="874.0" y2="206.2" stroke="#a8a8a8" stroke-width="1.3"/><text x="714.5" y="212.7" font-size="16.5" fill="#d0d0d0" text-anchor="end" textLength="16.7" lengthAdjust="spacingAndGlyphs">10</text><line x1="715.5" y1="261.5" x2="874.0" y2="261.5" stroke="#a8a8a8" stroke-width="1.3"/><text x="714.5" y="268.0" font-size="16.5" fill="#d0d0d0" text-anchor="end" textLength="8.3" lengthAdjust="spacingAndGlyphs">5</text><line x1="715.5" y1="317.8" x2="874.0" y2="317.8" stroke="#a8a8a8" stroke-width="1.3"/><text x="714.5" y="324.3" font-size="16.5" fill="#d0d0d0" text-anchor="end" textLength="8.3" lengthAdjust="spacingAndGlyphs">0</text><line x1="715.5" y1="374.2" x2="874.0" y2="374.2" stroke="#a8a8a8" stroke-width="1.3"/><text x="714.5" y="380.7" font-size="16.5" fill="#d0d0d0" text-anchor="end" textLength="13.3" lengthAdjust="spacingAndGlyphs">-5</text><line x1="715.5" y1="430.8" x2="874.0" y2="430.8" stroke="#a8a8a8" stroke-width="1.3"/><text x="714.5" y="437.3" font-size="16.5" fill="#d0d0d0" text-anchor="end" textLength="21.7" lengthAdjust="spacingAndGlyphs">-10</text><line x1="715.5" y1="484.5" x2="874.0" y2="484.5" stroke="#a8a8a8" stroke-width="1.3"/><text x="714.5" y="491.0" font-size="16.5" fill="#d0d0d0" text-anchor="end" textLength="21.7" lengthAdjust="spacingAndGlyphs">-15</text><line x1="720.5" y1="148.0" x2="720.5" y2="490.0" stroke="#a8a8a8" stroke-width="1.5"/><line x1="874.0" y1="148.0" x2="874.0" y2="490.0" stroke="#a8a8a8" stroke-width="1.3"/><line x1="720.5" y1="149.5" x2="874.0" y2="149.5" stroke="#a8a8a8" stroke-width="2.2"/><line x1="720.5" y1="484.5" x2="874.0" y2="484.5" stroke="#a8a8a8" stroke-width="1.6"/><rect x="737.0" y="317.0" width="120.6" height="51.0" fill="url(#ybar)" stroke="#000" stroke-width="1.3"/><text x="797.5" y="501.8" font-size="16.5" fill="#d0d0d0" text-anchor="middle" textLength="38.4" lengthAdjust="spacingAndGlyphs">100%</text><rect x="930.5" y="149.0" width="153.5" height="336.0" fill="#242424"/><text x="993.5" y="143.3" font-size="15.4" fill="#d0d0d0" text-anchor="middle" textLength="48.0" lengthAdjust="spacingAndGlyphs">Delta H</text><line x1="925.5" y1="149.5" x2="1084.0" y2="149.5" stroke="#a8a8a8" stroke-width="1.3"/><text x="924.5" y="156.0" font-size="16.5" fill="#d0d0d0" text-anchor="end" textLength="16.7" lengthAdjust="spacingAndGlyphs">15</text><line x1="925.5" y1="206.2" x2="1084.0" y2="206.2" stroke="#a8a8a8" stroke-width="1.3"/><text x="924.5" y="212.7" font-size="16.5" fill="#d0d0d0" text-anchor="end" textLength="16.7" lengthAdjust="spacingAndGlyphs">10</text><line x1="925.5" y1="261.5" x2="1084.0" y2="261.5" stroke="#a8a8a8" stroke-width="1.3"/><text x="924.5" y="268.0" font-size="16.5" fill="#d0d0d0" text-anchor="end" textLength="8.3" lengthAdjust="spacingAndGlyphs">5</text><line x1="925.5" y1="317.8" x2="1084.0" y2="317.8" stroke="#a8a8a8" stroke-width="1.3"/><text x="924.5" y="324.3" font-size="16.5" fill="#d0d0d0" text-anchor="end" textLength="8.3" lengthAdjust="spacingAndGlyphs">0</text><line x1="925.5" y1="374.2" x2="1084.0" y2="374.2" stroke="#a8a8a8" stroke-width="1.3"/><text x="924.5" y="380.7" font-size="16.5" fill="#d0d0d0" text-anchor="end" textLength="13.3" lengthAdjust="spacingAndGlyphs">-5</text><line x1="925.5" y1="430.8" x2="1084.0" y2="430.8" stroke="#a8a8a8" stroke-width="1.3"/><text x="924.5" y="437.3" font-size="16.5" fill="#d0d0d0" text-anchor="end" textLength="21.7" lengthAdjust="spacingAndGlyphs">-10</text><line x1="925.5" y1="484.5" x2="1084.0" y2="484.5" stroke="#a8a8a8" stroke-width="1.3"/><text x="924.5" y="491.0" font-size="16.5" fill="#d0d0d0" text-anchor="end" textLength="21.7" lengthAdjust="spacingAndGlyphs">-15</text><line x1="930.5" y1="148.0" x2="930.5" y2="490.0" stroke="#a8a8a8" stroke-width="1.5"/><line x1="1084.0" y1="148.0" x2="1084.0" y2="490.0" stroke="#a8a8a8" stroke-width="1.3"/><line x1="930.5" y1="149.5" x2="1084.0" y2="149.5" stroke="#a8a8a8" stroke-width="2.2"/><line x1="930.5" y1="484.5" x2="1084.0" y2="484.5" stroke="#a8a8a8" stroke-width="1.6"/><rect x="947.0" y="317.0" width="121.0" height="19.4" fill="url(#ybar)" stroke="#000" stroke-width="1.3"/><text x="1007.5" y="501.8" font-size="16.5" fill="#d0d0d0" text-anchor="middle" textLength="38.4" lengthAdjust="spacingAndGlyphs">100%</text><rect x="475.0" y="520.0" width="630.0" height="173.5" fill="#000000"/><rect x="497.5" y="528.5" width="106.0" height="70.0" fill="#c2c3a9"/><rect x="497.5" y="598.0" width="106.0" height="71.0" fill="#c0c2a6"/><rect x="497.5" y="528.5" width="106" height="140.5" fill="none" stroke="#fff" stroke-width="1.6"/><text x="550.5" y="685.0" font-size="14.0" fill="#f0f0f0" text-anchor="middle" textLength="26.0" lengthAdjust="spacingAndGlyphs">20%</text><rect x="620.6" y="528.5" width="106.0" height="70.0" fill="#c3c28a"/><rect x="620.6" y="598.0" width="106.0" height="71.0" fill="#c2c188"/><rect x="620.6" y="528.5" width="106" height="140.5" fill="none" stroke="#fff" stroke-width="1.6"/><text x="673.6" y="685.0" font-size="14.0" fill="#f0f0f0" text-anchor="middle" textLength="26.0" lengthAdjust="spacingAndGlyphs">40%</text><rect x="743.7" y="528.5" width="106.0" height="70.0" fill="#c4c06f"/><rect x="743.7" y="598.0" width="106.0" height="71.0" fill="#c3bf6c"/><rect x="743.7" y="528.5" width="106" height="140.5" fill="none" stroke="#fff" stroke-width="1.6"/><text x="796.7" y="685.0" font-size="14.0" fill="#f0f0f0" text-anchor="middle" textLength="26.0" lengthAdjust="spacingAndGlyphs">60%</text><rect x="866.8" y="528.5" width="106.0" height="70.0" fill="#c4bc4b"/><rect x="866.8" y="598.0" width="106.0" height="71.0" fill="#c3bd47"/><rect x="866.8" y="528.5" width="106" height="140.5" fill="none" stroke="#fff" stroke-width="1.6"/><text x="919.8" y="685.0" font-size="14.0" fill="#f0f0f0" text-anchor="middle" textLength="26.0" lengthAdjust="spacingAndGlyphs">80%</text><rect x="989.9" y="528.5" width="106.0" height="70.0" fill="#c8bf24"/><rect x="989.9" y="598.0" width="106.0" height="71.0" fill="#c4c000"/><rect x="989.9" y="528.5" width="106" height="140.5" fill="none" stroke="#fff" stroke-width="1.6"/><text x="1042.9" y="685.0" font-size="14.0" fill="#f0f0f0" text-anchor="middle" textLength="33.2" lengthAdjust="spacingAndGlyphs">100%</text><text transform="translate(490,558) rotate(-90)" font-size="12.5" fill="#f0f0f0" text-anchor="middle">Actual</text><text transform="translate(490,637) rotate(-90)" font-size="12.5" fill="#f0f0f0" text-anchor="middle">Target</text><rect x="1116.75" y="118.5" width="731" height="586.5" fill="none" stroke="#c6c200" stroke-width="7.5"/><text x="1482.0" y="141.0" font-size="15.4" fill="#d0d0d0" text-anchor="middle" textLength="80.0" lengthAdjust="spacingAndGlyphs">CIE 1931 xy</text><rect x="1151.0" y="147.0" width="690.0" height="523.0" fill="#242424"/><g clip-path="url(#locus)"><rect x="1153" y="150.0" width="598" height="3.6" fill="url(#o0)"/><rect x="1153" y="153.0" width="598" height="3.6" fill="url(#o1)"/><rect x="1153" y="156.0" width="598" height="3.6" fill="url(#o2)"/><rect x="1153" y="159.0" width="598" height="3.6" fill="url(#o3)"/><rect x="1153" y="162.0" width="598" height="3.6" fill="url(#o4)"/><rect x="1153" y="165.0" width="598" height="3.6" fill="url(#o5)"/><rect x="1153" y="168.0" width="598" height="3.6" fill="url(#o6)"/><rect x="1153" y="171.0" width="598" height="3.6" fill="url(#o7)"/><rect x="1153" y="174.0" width="598" height="3.6" fill="url(#o8)"/><rect x="1153" y="177.0" width="598" height="3.6" fill="url(#o9)"/><rect x="1153" y="180.0" width="598" height="3.6" fill="url(#o10)"/><rect x="1153" y="183.0" width="598" height="3.6" fill="url(#o11)"/><rect x="1153" y="186.0" width="598" height="3.6" fill="url(#o12)"/><rect x="1153" y="189.0" width="598" height="3.6" fill="url(#o13)"/><rect x="1153" y="192.0" width="598" height="3.6" fill="url(#o14)"/><rect x="1153" y="195.0" width="598" height="3.6" fill="url(#o15)"/><rect x="1153" y="198.0" width="598" height="3.6" fill="url(#o16)"/><rect x="1153" y="201.0" width="598" height="3.6" fill="url(#o17)"/><rect x="1153" y="204.0" width="598" height="3.6" fill="url(#o18)"/><rect x="1153" y="207.0" width="598" height="3.6" fill="url(#o19)"/><rect x="1153" y="210.0" width="598" height="3.6" fill="url(#o20)"/><rect x="1153" y="213.0" width="598" height="3.6" fill="url(#o21)"/><rect x="1153" y="216.0" width="598" height="3.6" fill="url(#o22)"/><rect x="1153" y="219.0" width="598" height="3.6" fill="url(#o23)"/><rect x="1153" y="222.0" width="598" height="3.6" fill="url(#o24)"/><rect x="1153" y="225.0" width="598" height="3.6" fill="url(#o25)"/><rect x="1153" y="228.0" width="598" height="3.6" fill="url(#o26)"/><rect x="1153" y="231.0" width="598" height="3.6" fill="url(#o27)"/><rect x="1153" y="234.0" width="598" height="3.6" fill="url(#o28)"/><rect x="1153" y="237.0" width="598" height="3.6" fill="url(#o29)"/><rect x="1153" y="240.0" width="598" height="3.6" fill="url(#o30)"/><rect x="1153" y="243.0" width="598" height="3.6" fill="url(#o31)"/><rect x="1153" y="246.0" width="598" height="3.6" fill="url(#o32)"/><rect x="1153" y="249.0" width="598" height="3.6" fill="url(#o33)"/><rect x="1153" y="252.0" width="598" height="3.6" fill="url(#o34)"/><rect x="1153" y="255.0" width="598" height="3.6" fill="url(#o35)"/><rect x="1153" y="258.0" width="598" height="3.6" fill="url(#o36)"/><rect x="1153" y="261.0" width="598" height="3.6" fill="url(#o37)"/><rect x="1153" y="264.0" width="598" height="3.6" fill="url(#o38)"/><rect x="1153" y="267.0" width="598" height="3.6" fill="url(#o39)"/><rect x="1153" y="270.0" width="598" height="3.6" fill="url(#o40)"/><rect x="1153" y="273.0" width="598" height="3.6" fill="url(#o41)"/><rect x="1153" y="276.0" width="598" height="3.6" fill="url(#o42)"/><rect x="1153" y="279.0" width="598" height="3.6" fill="url(#o43)"/><rect x="1153" y="282.0" width="598" height="3.6" fill="url(#o44)"/><rect x="1153" y="285.0" width="598" height="3.6" fill="url(#o45)"/><rect x="1153" y="288.0" width="598" height="3.6" fill="url(#o46)"/><rect x="1153" y="291.0" width="598" height="3.6" fill="url(#o47)"/><rect x="1153" y="294.0" width="598" height="3.6" fill="url(#o48)"/><rect x="1153" y="297.0" width="598" height="3.6" fill="url(#o49)"/><rect x="1153" y="300.0" width="598" height="3.6" fill="url(#o50)"/><rect x="1153" y="303.0" width="598" height="3.6" fill="url(#o51)"/><rect x="1153" y="306.0" width="598" height="3.6" fill="url(#o52)"/><rect x="1153" y="309.0" width="598" height="3.6" fill="url(#o53)"/><rect x="1153" y="312.0" width="598" height="3.6" fill="url(#o54)"/><rect x="1153" y="315.0" width="598" height="3.6" fill="url(#o55)"/><rect x="1153" y="318.0" width="598" height="3.6" fill="url(#o56)"/><rect x="1153" y="321.0" width="598" height="3.6" fill="url(#o57)"/><rect x="1153" y="324.0" width="598" height="3.6" fill="url(#o58)"/><rect x="1153" y="327.0" width="598" height="3.6" fill="url(#o59)"/><rect x="1153" y="330.0" width="598" height="3.6" fill="url(#o60)"/><rect x="1153" y="333.0" width="598" height="3.6" fill="url(#o61)"/><rect x="1153" y="336.0" width="598" height="3.6" fill="url(#o62)"/><rect x="1153" y="339.0" width="598" height="3.6" fill="url(#o63)"/><rect x="1153" y="342.0" width="598" height="3.6" fill="url(#o64)"/><rect x="1153" y="345.0" width="598" height="3.6" fill="url(#o65)"/><rect x="1153" y="348.0" width="598" height="3.6" fill="url(#o66)"/><rect x="1153" y="351.0" width="598" height="3.6" fill="url(#o67)"/><rect x="1153" y="354.0" width="598" height="3.6" fill="url(#o68)"/><rect x="1153" y="357.0" width="598" height="3.6" fill="url(#o69)"/><rect x="1153" y="360.0" width="598" height="3.6" fill="url(#o70)"/><rect x="1153" y="363.0" width="598" height="3.6" fill="url(#o71)"/><rect x="1153" y="366.0" width="598" height="3.6" fill="url(#o72)"/><rect x="1153" y="369.0" width="598" height="3.6" fill="url(#o73)"/><rect x="1153" y="372.0" width="598" height="3.6" fill="url(#o74)"/><rect x="1153" y="375.0" width="598" height="3.6" fill="url(#o75)"/><rect x="1153" y="378.0" width="598" height="3.6" fill="url(#o76)"/><rect x="1153" y="381.0" width="598" height="3.6" fill="url(#o77)"/><rect x="1153" y="384.0" width="598" height="3.6" fill="url(#o78)"/><rect x="1153" y="387.0" width="598" height="3.6" fill="url(#o79)"/><rect x="1153" y="390.0" width="598" height="3.6" fill="url(#o80)"/><rect x="1153" y="393.0" width="598" height="3.6" fill="url(#o81)"/><rect x="1153" y="396.0" width="598" height="3.6" fill="url(#o82)"/><rect x="1153" y="399.0" width="598" height="3.6" fill="url(#o83)"/><rect x="1153" y="402.0" width="598" height="3.6" fill="url(#o84)"/><rect x="1153" y="405.0" width="598" height="3.6" fill="url(#o85)"/><rect x="1153" y="408.0" width="598" height="3.6" fill="url(#o86)"/><rect x="1153" y="411.0" width="598" height="3.6" fill="url(#o87)"/><rect x="1153" y="414.0" width="598" height="3.6" fill="url(#o88)"/><rect x="1153" y="417.0" width="598" height="3.6" fill="url(#o89)"/><rect x="1153" y="420.0" width="598" height="3.6" fill="url(#o90)"/><rect x="1153" y="423.0" width="598" height="3.6" fill="url(#o91)"/><rect x="1153" y="426.0" width="598" height="3.6" fill="url(#o92)"/><rect x="1153" y="429.0" width="598" height="3.6" fill="url(#o93)"/><rect x="1153" y="432.0" width="598" height="3.6" fill="url(#o94)"/><rect x="1153" y="435.0" width="598" height="3.6" fill="url(#o95)"/><rect x="1153" y="438.0" width="598" height="3.6" fill="url(#o96)"/><rect x="1153" y="441.0" width="598" height="3.6" fill="url(#o97)"/><rect x="1153" y="444.0" width="598" height="3.6" fill="url(#o98)"/><rect x="1153" y="447.0" width="598" height="3.6" fill="url(#o99)"/><rect x="1153" y="450.0" width="598" height="3.6" fill="url(#o100)"/><rect x="1153" y="453.0" width="598" height="3.6" fill="url(#o101)"/><rect x="1153" y="456.0" width="598" height="3.6" fill="url(#o102)"/><rect x="1153" y="459.0" width="598" height="3.6" fill="url(#o103)"/><rect x="1153" y="462.0" width="598" height="3.6" fill="url(#o104)"/><rect x="1153" y="465.0" width="598" height="3.6" fill="url(#o105)"/><rect x="1153" y="468.0" width="598" height="3.6" fill="url(#o106)"/><rect x="1153" y="471.0" width="598" height="3.6" fill="url(#o107)"/><rect x="1153" y="474.0" width="598" height="3.6" fill="url(#o108)"/><rect x="1153" y="477.0" width="598" height="3.6" fill="url(#o109)"/><rect x="1153" y="480.0" width="598" height="3.6" fill="url(#o110)"/><rect x="1153" y="483.0" width="598" height="3.6" fill="url(#o111)"/><rect x="1153" y="486.0" width="598" height="3.6" fill="url(#o112)"/><rect x="1153" y="489.0" width="598" height="3.6" fill="url(#o113)"/><rect x="1153" y="492.0" width="598" height="3.6" fill="url(#o114)"/><rect x="1153" y="495.0" width="598" height="3.6" fill="url(#o115)"/><rect x="1153" y="498.0" width="598" height="3.6" fill="url(#o116)"/><rect x="1153" y="501.0" width="598" height="3.6" fill="url(#o117)"/><rect x="1153" y="504.0" width="598" height="3.6" fill="url(#o118)"/><rect x="1153" y="507.0" width="598" height="3.6" fill="url(#o119)"/><rect x="1153" y="510.0" width="598" height="3.6" fill="url(#o120)"/><rect x="1153" y="513.0" width="598" height="3.6" fill="url(#o121)"/><rect x="1153" y="516.0" width="598" height="3.6" fill="url(#o122)"/><rect x="1153" y="519.0" width="598" height="3.6" fill="url(#o123)"/><rect x="1153" y="522.0" width="598" height="3.6" fill="url(#o124)"/><rect x="1153" y="525.0" width="598" height="3.6" fill="url(#o125)"/><rect x="1153" y="528.0" width="598" height="3.6" fill="url(#o126)"/><rect x="1153" y="531.0" width="598" height="3.6" fill="url(#o127)"/><rect x="1153" y="534.0" width="598" height="3.6" fill="url(#o128)"/><rect x="1153" y="537.0" width="598" height="3.6" fill="url(#o129)"/><rect x="1153" y="540.0" width="598" height="3.6" fill="url(#o130)"/><rect x="1153" y="543.0" width="598" height="3.6" fill="url(#o131)"/><rect x="1153" y="546.0" width="598" height="3.6" fill="url(#o132)"/><rect x="1153" y="549.0" width="598" height="3.6" fill="url(#o133)"/><rect x="1153" y="552.0" width="598" height="3.6" fill="url(#o134)"/><rect x="1153" y="555.0" width="598" height="3.6" fill="url(#o135)"/><rect x="1153" y="558.0" width="598" height="3.6" fill="url(#o136)"/><rect x="1153" y="561.0" width="598" height="3.6" fill="url(#o137)"/><rect x="1153" y="564.0" width="598" height="3.6" fill="url(#o138)"/><rect x="1153" y="567.0" width="598" height="3.6" fill="url(#o139)"/><rect x="1153" y="570.0" width="598" height="3.6" fill="url(#o140)"/><rect x="1153" y="573.0" width="598" height="3.6" fill="url(#o141)"/><rect x="1153" y="576.0" width="598" height="3.6" fill="url(#o142)"/><rect x="1153" y="579.0" width="598" height="3.6" fill="url(#o143)"/><rect x="1153" y="582.0" width="598" height="3.6" fill="url(#o144)"/><rect x="1153" y="585.0" width="598" height="3.6" fill="url(#o145)"/><rect x="1153" y="588.0" width="598" height="3.6" fill="url(#o146)"/><rect x="1153" y="591.0" width="598" height="3.6" fill="url(#o147)"/><rect x="1153" y="594.0" width="598" height="3.6" fill="url(#o148)"/><rect x="1153" y="597.0" width="598" height="3.6" fill="url(#o149)"/><rect x="1153" y="600.0" width="598" height="3.6" fill="url(#o150)"/><rect x="1153" y="603.0" width="598" height="3.6" fill="url(#o151)"/><rect x="1153" y="606.0" width="598" height="3.6" fill="url(#o152)"/><rect x="1153" y="609.0" width="598" height="3.6" fill="url(#o153)"/><rect x="1153" y="612.0" width="598" height="3.6" fill="url(#o154)"/><rect x="1153" y="615.0" width="598" height="3.6" fill="url(#o155)"/><rect x="1153" y="618.0" width="598" height="3.6" fill="url(#o156)"/><rect x="1153" y="621.0" width="598" height="3.6" fill="url(#o157)"/><rect x="1153" y="624.0" width="598" height="3.6" fill="url(#o158)"/><rect x="1153" y="627.0" width="598" height="3.6" fill="url(#o159)"/><rect x="1153" y="630.0" width="598" height="3.6" fill="url(#o160)"/><rect x="1153" y="633.0" width="598" height="3.6" fill="url(#o161)"/><rect x="1153" y="636.0" width="598" height="3.6" fill="url(#o162)"/><rect x="1153" y="639.0" width="598" height="3.6" fill="url(#o163)"/><rect x="1153" y="642.0" width="598" height="3.6" fill="url(#o164)"/><rect x="1153" y="645.0" width="598" height="3.6" fill="url(#o165)"/><rect x="1153" y="648.0" width="598" height="3.6" fill="url(#o166)"/><rect x="1153" y="651.0" width="598" height="3.6" fill="url(#o167)"/><rect x="1153" y="654.0" width="598" height="3.6" fill="url(#o168)"/><rect x="1153" y="657.0" width="598" height="3.6" fill="url(#o169)"/><rect x="1153" y="660.0" width="598" height="3.6" fill="url(#o170)"/><rect x="1153" y="663.0" width="598" height="3.6" fill="url(#o171)"/><rect x="1153" y="666.0" width="598" height="3.6" fill="url(#o172)"/></g><g clip-path="url(#tri)"><rect x="1273" y="295.0" width="405" height="3.6" fill="url(#i0)"/><rect x="1273" y="298.0" width="405" height="3.6" fill="url(#i1)"/><rect x="1273" y="301.0" width="405" height="3.6" fill="url(#i2)"/><rect x="1273" y="304.0" width="405" height="3.6" fill="url(#i3)"/><rect x="1273" y="307.0" width="405" height="3.6" fill="url(#i4)"/><rect x="1273" y="310.0" width="405" height="3.6" fill="url(#i5)"/><rect x="1273" y="313.0" width="405" height="3.6" fill="url(#i6)"/><rect x="1273" y="316.0" width="405" height="3.6" fill="url(#i7)"/><rect x="1273" y="319.0" width="405" height="3.6" fill="url(#i8)"/><rect x="1273" y="322.0" width="405" height="3.6" fill="url(#i9)"/><rect x="1273" y="325.0" width="405" height="3.6" fill="url(#i10)"/><rect x="1273" y="328.0" width="405" height="3.6" fill="url(#i11)"/><rect x="1273" y="331.0" width="405" height="3.6" fill="url(#i12)"/><rect x="1273" y="334.0" width="405" height="3.6" fill="url(#i13)"/><rect x="1273" y="337.0" width="405" height="3.6" fill="url(#i14)"/><rect x="1273" y="340.0" width="405" height="3.6" fill="url(#i15)"/><rect x="1273" y="343.0" width="405" height="3.6" fill="url(#i16)"/><rect x="1273" y="346.0" width="405" height="3.6" fill="url(#i17)"/><rect x="1273" y="349.0" width="405" height="3.6" fill="url(#i18)"/><rect x="1273" y="352.0" width="405" height="3.6" fill="url(#i19)"/><rect x="1273" y="355.0" width="405" height="3.6" fill="url(#i20)"/><rect x="1273" y="358.0" width="405" height="3.6" fill="url(#i21)"/><rect x="1273" y="361.0" width="405" height="3.6" fill="url(#i22)"/><rect x="1273" y="364.0" width="405" height="3.6" fill="url(#i23)"/><rect x="1273" y="367.0" width="405" height="3.6" fill="url(#i24)"/><rect x="1273" y="370.0" width="405" height="3.6" fill="url(#i25)"/><rect x="1273" y="373.0" width="405" height="3.6" fill="url(#i26)"/><rect x="1273" y="376.0" width="405" height="3.6" fill="url(#i27)"/><rect x="1273" y="379.0" width="405" height="3.6" fill="url(#i28)"/><rect x="1273" y="382.0" width="405" height="3.6" fill="url(#i29)"/><rect x="1273" y="385.0" width="405" height="3.6" fill="url(#i30)"/><rect x="1273" y="388.0" width="405" height="3.6" fill="url(#i31)"/><rect x="1273" y="391.0" width="405" height="3.6" fill="url(#i32)"/><rect x="1273" y="394.0" width="405" height="3.6" fill="url(#i33)"/><rect x="1273" y="397.0" width="405" height="3.6" fill="url(#i34)"/><rect x="1273" y="400.0" width="405" height="3.6" fill="url(#i35)"/><rect x="1273" y="403.0" width="405" height="3.6" fill="url(#i36)"/><rect x="1273" y="406.0" width="405" height="3.6" fill="url(#i37)"/><rect x="1273" y="409.0" width="405" height="3.6" fill="url(#i38)"/><rect x="1273" y="412.0" width="405" height="3.6" fill="url(#i39)"/><rect x="1273" y="415.0" width="405" height="3.6" fill="url(#i40)"/><rect x="1273" y="418.0" width="405" height="3.6" fill="url(#i41)"/><rect x="1273" y="421.0" width="405" height="3.6" fill="url(#i42)"/><rect x="1273" y="424.0" width="405" height="3.6" fill="url(#i43)"/><rect x="1273" y="427.0" width="405" height="3.6" fill="url(#i44)"/><rect x="1273" y="430.0" width="405" height="3.6" fill="url(#i45)"/><rect x="1273" y="433.0" width="405" height="3.6" fill="url(#i46)"/><rect x="1273" y="436.0" width="405" height="3.6" fill="url(#i47)"/><rect x="1273" y="439.0" width="405" height="3.6" fill="url(#i48)"/><rect x="1273" y="442.0" width="405" height="3.6" fill="url(#i49)"/><rect x="1273" y="445.0" width="405" height="3.6" fill="url(#i50)"/><rect x="1273" y="448.0" width="405" height="3.6" fill="url(#i51)"/><rect x="1273" y="451.0" width="405" height="3.6" fill="url(#i52)"/><rect x="1273" y="454.0" width="405" height="3.6" fill="url(#i53)"/><rect x="1273" y="457.0" width="405" height="3.6" fill="url(#i54)"/><rect x="1273" y="460.0" width="405" height="3.6" fill="url(#i55)"/><rect x="1273" y="463.0" width="405" height="3.6" fill="url(#i56)"/><rect x="1273" y="466.0" width="405" height="3.6" fill="url(#i57)"/><rect x="1273" y="469.0" width="405" height="3.6" fill="url(#i58)"/><rect x="1273" y="472.0" width="405" height="3.6" fill="url(#i59)"/><rect x="1273" y="475.0" width="405" height="3.6" fill="url(#i60)"/><rect x="1273" y="478.0" width="405" height="3.6" fill="url(#i61)"/><rect x="1273" y="481.0" width="405" height="3.6" fill="url(#i62)"/><rect x="1273" y="484.0" width="405" height="3.6" fill="url(#i63)"/><rect x="1273" y="487.0" width="405" height="3.6" fill="url(#i64)"/><rect x="1273" y="490.0" width="405" height="3.6" fill="url(#i65)"/><rect x="1273" y="493.0" width="405" height="3.6" fill="url(#i66)"/><rect x="1273" y="496.0" width="405" height="3.6" fill="url(#i67)"/><rect x="1273" y="499.0" width="405" height="3.6" fill="url(#i68)"/><rect x="1273" y="502.0" width="405" height="3.6" fill="url(#i69)"/><rect x="1273" y="505.0" width="405" height="3.6" fill="url(#i70)"/><rect x="1273" y="508.0" width="405" height="3.6" fill="url(#i71)"/><rect x="1273" y="511.0" width="405" height="3.6" fill="url(#i72)"/><rect x="1273" y="514.0" width="405" height="3.6" fill="url(#i73)"/><rect x="1273" y="517.0" width="405" height="3.6" fill="url(#i74)"/><rect x="1273" y="520.0" width="405" height="3.6" fill="url(#i75)"/><rect x="1273" y="523.0" width="405" height="3.6" fill="url(#i76)"/><rect x="1273" y="526.0" width="405" height="3.6" fill="url(#i77)"/><rect x="1273" y="529.0" width="405" height="3.6" fill="url(#i78)"/><rect x="1273" y="532.0" width="405" height="3.6" fill="url(#i79)"/><rect x="1273" y="535.0" width="405" height="3.6" fill="url(#i80)"/><rect x="1273" y="538.0" width="405" height="3.6" fill="url(#i81)"/><rect x="1273" y="541.0" width="405" height="3.6" fill="url(#i82)"/><rect x="1273" y="544.0" width="405" height="3.6" fill="url(#i83)"/><rect x="1273" y="547.0" width="405" height="3.6" fill="url(#i84)"/><rect x="1273" y="550.0" width="405" height="3.6" fill="url(#i85)"/><rect x="1273" y="553.0" width="405" height="3.6" fill="url(#i86)"/><rect x="1273" y="556.0" width="405" height="3.6" fill="url(#i87)"/><rect x="1273" y="559.0" width="405" height="3.6" fill="url(#i88)"/><rect x="1273" y="562.0" width="405" height="3.6" fill="url(#i89)"/><rect x="1273" y="565.0" width="405" height="3.6" fill="url(#i90)"/><rect x="1273" y="568.0" width="405" height="3.6" fill="url(#i91)"/><rect x="1273" y="571.0" width="405" height="3.6" fill="url(#i92)"/><rect x="1273" y="574.0" width="405" height="3.6" fill="url(#i93)"/><rect x="1273" y="577.0" width="405" height="3.6" fill="url(#i94)"/><rect x="1273" y="580.0" width="405" height="3.6" fill="url(#i95)"/><rect x="1273" y="583.0" width="405" height="3.6" fill="url(#i96)"/><rect x="1273" y="586.0" width="405" height="3.6" fill="url(#i97)"/><rect x="1273" y="589.0" width="405" height="3.6" fill="url(#i98)"/><rect x="1273" y="592.0" width="405" height="3.6" fill="url(#i99)"/><rect x="1273" y="595.0" width="405" height="3.6" fill="url(#i100)"/><rect x="1273" y="598.0" width="405" height="3.6" fill="url(#i101)"/><rect x="1273" y="601.0" width="405" height="3.6" fill="url(#i102)"/><rect x="1273" y="604.0" width="405" height="3.6" fill="url(#i103)"/><rect x="1273" y="607.0" width="405" height="3.6" fill="url(#i104)"/><rect x="1273" y="610.0" width="405" height="3.6" fill="url(#i105)"/><rect x="1273" y="613.0" width="405" height="3.6" fill="url(#i106)"/><rect x="1273" y="616.0" width="405" height="3.6" fill="url(#i107)"/><rect x="1273" y="619.0" width="405" height="3.6" fill="url(#i108)"/><rect x="1273" y="622.0" width="405" height="3.6" fill="url(#i109)"/><rect x="1273" y="625.0" width="405" height="3.6" fill="url(#i110)"/><rect x="1273" y="628.0" width="405" height="3.6" fill="url(#i111)"/><rect x="1273" y="631.0" width="405" height="3.6" fill="url(#i112)"/></g><line x1="1151.0" y1="147.0" x2="1841.0" y2="147.0" stroke="#a8a8a8" stroke-width="1.5"/><line x1="1841.0" y1="147.0" x2="1841.0" y2="670.0" stroke="#a8a8a8" stroke-width="1.5"/><line x1="1151.0" y1="147.0" x2="1151.0" y2="676.0" stroke="#a8a8a8" stroke-width="1.5"/><line x1="1144.0" y1="670.0" x2="1841.0" y2="670.0" stroke="#a8a8a8" stroke-width="1.5"/><line x1="1144.0" y1="670.0" x2="1151.0" y2="670.0" stroke="#a8a8a8" stroke-width="1.3"/><line x1="1151.0" y1="670.0" x2="1151.0" y2="676.0" stroke="#a8a8a8" stroke-width="1.3"/><text x="1143.5" y="676.0" font-size="16.3" fill="#d0d0d0" text-anchor="end" textLength="8.6" lengthAdjust="spacingAndGlyphs">0</text><text x="1151.0" y="693.0" font-size="16.3" fill="#d0d0d0" text-anchor="middle" textLength="8.6" lengthAdjust="spacingAndGlyphs">0</text><line x1="1144.0" y1="607.8" x2="1151.0" y2="607.8" stroke="#a8a8a8" stroke-width="1.3"/><line x1="1233.1" y1="670.0" x2="1233.1" y2="676.0" stroke="#a8a8a8" stroke-width="1.3"/><text x="1143.5" y="613.8" font-size="16.3" fill="#d0d0d0" text-anchor="end" textLength="21.4" lengthAdjust="spacingAndGlyphs">0,1</text><text x="1233.1" y="693.0" font-size="16.3" fill="#d0d0d0" text-anchor="middle" textLength="21.4" lengthAdjust="spacingAndGlyphs">0,1</text><line x1="1144.0" y1="545.6" x2="1151.0" y2="545.6" stroke="#a8a8a8" stroke-width="1.3"/><line x1="1315.2" y1="670.0" x2="1315.2" y2="676.0" stroke="#a8a8a8" stroke-width="1.3"/><text x="1143.5" y="551.6" font-size="16.3" fill="#d0d0d0" text-anchor="end" textLength="21.4" lengthAdjust="spacingAndGlyphs">0,2</text><text x="1315.2" y="693.0" font-size="16.3" fill="#d0d0d0" text-anchor="middle" textLength="21.4" lengthAdjust="spacingAndGlyphs">0,2</text><line x1="1144.0" y1="483.4" x2="1151.0" y2="483.4" stroke="#a8a8a8" stroke-width="1.3"/><line x1="1397.2" y1="670.0" x2="1397.2" y2="676.0" stroke="#a8a8a8" stroke-width="1.3"/><text x="1143.5" y="489.4" font-size="16.3" fill="#d0d0d0" text-anchor="end" textLength="21.4" lengthAdjust="spacingAndGlyphs">0,3</text><text x="1397.2" y="693.0" font-size="16.3" fill="#d0d0d0" text-anchor="middle" textLength="21.4" lengthAdjust="spacingAndGlyphs">0,3</text><line x1="1144.0" y1="421.2" x2="1151.0" y2="421.2" stroke="#a8a8a8" stroke-width="1.3"/><line x1="1479.3" y1="670.0" x2="1479.3" y2="676.0" stroke="#a8a8a8" stroke-width="1.3"/><text x="1143.5" y="427.2" font-size="16.3" fill="#d0d0d0" text-anchor="end" textLength="21.4" lengthAdjust="spacingAndGlyphs">0,4</text><text x="1479.3" y="693.0" font-size="16.3" fill="#d0d0d0" text-anchor="middle" textLength="21.4" lengthAdjust="spacingAndGlyphs">0,4</text><line x1="1144.0" y1="359.0" x2="1151.0" y2="359.0" stroke="#a8a8a8" stroke-width="1.3"/><line x1="1561.4" y1="670.0" x2="1561.4" y2="676.0" stroke="#a8a8a8" stroke-width="1.3"/><text x="1143.5" y="365.0" font-size="16.3" fill="#d0d0d0" text-anchor="end" textLength="21.4" lengthAdjust="spacingAndGlyphs">0,5</text><text x="1561.4" y="693.0" font-size="16.3" fill="#d0d0d0" text-anchor="middle" textLength="21.4" lengthAdjust="spacingAndGlyphs">0,5</text><line x1="1144.0" y1="296.8" x2="1151.0" y2="296.8" stroke="#a8a8a8" stroke-width="1.3"/><line x1="1643.5" y1="670.0" x2="1643.5" y2="676.0" stroke="#a8a8a8" stroke-width="1.3"/><text x="1143.5" y="302.8" font-size="16.3" fill="#d0d0d0" text-anchor="end" textLength="21.4" lengthAdjust="spacingAndGlyphs">0,6</text><text x="1643.5" y="693.0" font-size="16.3" fill="#d0d0d0" text-anchor="middle" textLength="21.4" lengthAdjust="spacingAndGlyphs">0,6</text><line x1="1144.0" y1="234.6" x2="1151.0" y2="234.6" stroke="#a8a8a8" stroke-width="1.3"/><line x1="1725.6" y1="670.0" x2="1725.6" y2="676.0" stroke="#a8a8a8" stroke-width="1.3"/><text x="1143.5" y="240.6" font-size="16.3" fill="#d0d0d0" text-anchor="end" textLength="21.4" lengthAdjust="spacingAndGlyphs">0,7</text><text x="1725.6" y="693.0" font-size="16.3" fill="#d0d0d0" text-anchor="middle" textLength="21.4" lengthAdjust="spacingAndGlyphs">0,7</text><line x1="1144.0" y1="172.4" x2="1151.0" y2="172.4" stroke="#a8a8a8" stroke-width="1.3"/><line x1="1807.6" y1="670.0" x2="1807.6" y2="676.0" stroke="#a8a8a8" stroke-width="1.3"/><text x="1143.5" y="178.4" font-size="16.3" fill="#d0d0d0" text-anchor="end" textLength="21.4" lengthAdjust="spacingAndGlyphs">0,8</text><text x="1807.6" y="693.0" font-size="16.3" fill="#d0d0d0" text-anchor="middle" textLength="21.4" lengthAdjust="spacingAndGlyphs">0,8</text><g clip-path="url(#insbox)"><rect x="1601" y="154.5" width="234" height="4.6" fill="url(#nu0)"/><rect x="1601" y="158.5" width="234" height="4.6" fill="url(#nu1)"/><rect x="1601" y="162.5" width="234" height="4.6" fill="url(#nu2)"/><rect x="1601" y="166.5" width="234" height="4.6" fill="url(#nu3)"/><rect x="1601" y="170.5" width="234" height="4.6" fill="url(#nu4)"/><rect x="1601" y="174.5" width="234" height="4.6" fill="url(#nu5)"/><rect x="1601" y="178.5" width="234" height="4.6" fill="url(#nu6)"/><rect x="1601" y="182.5" width="234" height="4.6" fill="url(#nu7)"/><rect x="1601" y="186.5" width="234" height="4.6" fill="url(#nu8)"/><rect x="1601" y="190.5" width="234" height="4.6" fill="url(#nu9)"/><rect x="1601" y="194.5" width="234" height="4.6" fill="url(#nu10)"/><rect x="1601" y="198.5" width="234" height="4.6" fill="url(#nu11)"/><rect x="1601" y="202.5" width="234" height="4.6" fill="url(#nu12)"/><rect x="1601" y="206.5" width="234" height="4.6" fill="url(#nu13)"/><rect x="1601" y="210.5" width="234" height="4.6" fill="url(#nu14)"/><rect x="1601" y="214.5" width="234" height="4.6" fill="url(#nu15)"/><rect x="1601" y="218.5" width="234" height="4.6" fill="url(#nu16)"/><rect x="1601" y="222.5" width="234" height="4.6" fill="url(#nu17)"/><rect x="1601" y="226.5" width="234" height="4.6" fill="url(#nu18)"/><rect x="1601" y="230.5" width="234" height="4.6" fill="url(#nu19)"/><rect x="1601" y="234.5" width="234" height="4.6" fill="url(#nu20)"/><rect x="1601" y="238.5" width="234" height="4.6" fill="url(#nu21)"/><rect x="1601" y="242.5" width="234" height="4.6" fill="url(#nu22)"/><rect x="1601" y="246.5" width="234" height="4.6" fill="url(#nu23)"/><rect x="1601" y="250.5" width="234" height="4.6" fill="url(#nu24)"/><rect x="1601" y="254.5" width="234" height="4.6" fill="url(#nu25)"/><rect x="1601" y="258.5" width="234" height="4.6" fill="url(#nu26)"/><rect x="1601" y="262.5" width="234" height="4.6" fill="url(#nu27)"/><rect x="1601" y="266.5" width="234" height="4.6" fill="url(#nu28)"/><rect x="1601" y="270.5" width="234" height="4.6" fill="url(#nu29)"/><rect x="1601" y="274.5" width="234" height="4.6" fill="url(#nu30)"/><rect x="1601" y="278.5" width="234" height="4.6" fill="url(#nu31)"/><rect x="1601" y="282.5" width="234" height="4.6" fill="url(#nu32)"/><rect x="1601" y="286.5" width="234" height="4.6" fill="url(#nu33)"/><rect x="1601" y="290.5" width="234" height="4.6" fill="url(#nu34)"/><rect x="1601" y="294.5" width="234" height="4.6" fill="url(#nu35)"/><rect x="1601" y="298.5" width="234" height="4.6" fill="url(#nu36)"/><rect x="1601" y="302.5" width="234" height="4.6" fill="url(#nu37)"/><rect x="1601" y="306.5" width="234" height="4.6" fill="url(#nu38)"/><rect x="1601" y="310.5" width="234" height="4.6" fill="url(#nu39)"/><rect x="1601" y="314.5" width="234" height="4.6" fill="url(#nu40)"/><rect x="1601" y="318.5" width="234" height="4.6" fill="url(#nu41)"/><rect x="1601" y="322.5" width="234" height="4.6" fill="url(#nu42)"/><rect x="1601" y="326.5" width="234" height="4.6" fill="url(#nu43)"/><rect x="1601" y="330.5" width="234" height="4.6" fill="url(#nu44)"/><rect x="1601" y="334.5" width="234" height="4.6" fill="url(#nu45)"/><rect x="1601" y="338.5" width="234" height="4.6" fill="url(#nu46)"/><rect x="1601" y="342.5" width="234" height="4.6" fill="url(#nu47)"/><rect x="1601" y="346.5" width="234" height="4.6" fill="url(#nu48)"/></g><g clip-path="url(#inslo)"><rect x="1601" y="154.5" width="234" height="4.6" fill="url(#nl0)"/><rect x="1601" y="158.5" width="234" height="4.6" fill="url(#nl1)"/><rect x="1601" y="162.5" width="234" height="4.6" fill="url(#nl2)"/><rect x="1601" y="166.5" width="234" height="4.6" fill="url(#nl3)"/><rect x="1601" y="170.5" width="234" height="4.6" fill="url(#nl4)"/><rect x="1601" y="174.5" width="234" height="4.6" fill="url(#nl5)"/><rect x="1601" y="178.5" width="234" height="4.6" fill="url(#nl6)"/><rect x="1601" y="182.5" width="234" height="4.6" fill="url(#nl7)"/><rect x="1601" y="186.5" width="234" height="4.6" fill="url(#nl8)"/><rect x="1601" y="190.5" width="234" height="4.6" fill="url(#nl9)"/><rect x="1601" y="194.5" width="234" height="4.6" fill="url(#nl10)"/><rect x="1601" y="198.5" width="234" height="4.6" fill="url(#nl11)"/><rect x="1601" y="202.5" width="234" height="4.6" fill="url(#nl12)"/><rect x="1601" y="206.5" width="234" height="4.6" fill="url(#nl13)"/><rect x="1601" y="210.5" width="234" height="4.6" fill="url(#nl14)"/><rect x="1601" y="214.5" width="234" height="4.6" fill="url(#nl15)"/><rect x="1601" y="218.5" width="234" height="4.6" fill="url(#nl16)"/><rect x="1601" y="222.5" width="234" height="4.6" fill="url(#nl17)"/><rect x="1601" y="226.5" width="234" height="4.6" fill="url(#nl18)"/><rect x="1601" y="230.5" width="234" height="4.6" fill="url(#nl19)"/><rect x="1601" y="234.5" width="234" height="4.6" fill="url(#nl20)"/><rect x="1601" y="238.5" width="234" height="4.6" fill="url(#nl21)"/><rect x="1601" y="242.5" width="234" height="4.6" fill="url(#nl22)"/><rect x="1601" y="246.5" width="234" height="4.6" fill="url(#nl23)"/><rect x="1601" y="250.5" width="234" height="4.6" fill="url(#nl24)"/><rect x="1601" y="254.5" width="234" height="4.6" fill="url(#nl25)"/><rect x="1601" y="258.5" width="234" height="4.6" fill="url(#nl26)"/><rect x="1601" y="262.5" width="234" height="4.6" fill="url(#nl27)"/><rect x="1601" y="266.5" width="234" height="4.6" fill="url(#nl28)"/><rect x="1601" y="270.5" width="234" height="4.6" fill="url(#nl29)"/><rect x="1601" y="274.5" width="234" height="4.6" fill="url(#nl30)"/><rect x="1601" y="278.5" width="234" height="4.6" fill="url(#nl31)"/><rect x="1601" y="282.5" width="234" height="4.6" fill="url(#nl32)"/><rect x="1601" y="286.5" width="234" height="4.6" fill="url(#nl33)"/><rect x="1601" y="290.5" width="234" height="4.6" fill="url(#nl34)"/><rect x="1601" y="294.5" width="234" height="4.6" fill="url(#nl35)"/><rect x="1601" y="298.5" width="234" height="4.6" fill="url(#nl36)"/><rect x="1601" y="302.5" width="234" height="4.6" fill="url(#nl37)"/><rect x="1601" y="306.5" width="234" height="4.6" fill="url(#nl38)"/><rect x="1601" y="310.5" width="234" height="4.6" fill="url(#nl39)"/><rect x="1601" y="314.5" width="234" height="4.6" fill="url(#nl40)"/><rect x="1601" y="318.5" width="234" height="4.6" fill="url(#nl41)"/><rect x="1601" y="322.5" width="234" height="4.6" fill="url(#nl42)"/><rect x="1601" y="326.5" width="234" height="4.6" fill="url(#nl43)"/><rect x="1601" y="330.5" width="234" height="4.6" fill="url(#nl44)"/><rect x="1601" y="334.5" width="234" height="4.6" fill="url(#nl45)"/><rect x="1601" y="338.5" width="234" height="4.6" fill="url(#nl46)"/><rect x="1601" y="342.5" width="234" height="4.6" fill="url(#nl47)"/><rect x="1601" y="346.5" width="234" height="4.6" fill="url(#nl48)"/></g><rect x="1601" y="154.5" width="233" height="195" fill="none" stroke="#a0a0a0" stroke-width="1.5"/><rect x="1708.5" y="244" width="14.5" height="14.5" fill="none" stroke="#fff" stroke-width="1.6"/><circle cx="1715.7" cy="292" r="5" fill="#a8a020" stroke="#222" stroke-width="1.3"/><rect x="1388.7" y="288.1" width="14.5" height="14.5" fill="none" stroke="#fff" stroke-width="1.9" stroke-opacity="0.9"/><rect x="1391.3" y="324.8" width="14.5" height="14.5" fill="none" stroke="#fff" stroke-width="1.9" stroke-opacity="0.9"/><rect x="1393.2" y="357.8" width="14.5" height="14.5" fill="none" stroke="#fff" stroke-width="1.9" stroke-opacity="0.9"/><rect x="1395.5" y="389.4" width="14.5" height="14.5" fill="none" stroke="#fff" stroke-width="1.9" stroke-opacity="0.9"/><rect x="1397.0" y="422.1" width="14.5" height="14.5" fill="none" stroke="#fff" stroke-width="1.9" stroke-opacity="0.9"/><rect x="1417.5" y="434.4" width="14.5" height="14.5" fill="none" stroke="#fff" stroke-width="1.9" stroke-opacity="0.9"/><rect x="1434.8" y="411.4" width="14.5" height="14.5" fill="none" stroke="#fff" stroke-width="1.9" stroke-opacity="0.9"/><rect x="1452.5" y="390.8" width="14.5" height="14.5" fill="none" stroke="#fff" stroke-width="1.9" stroke-opacity="0.9"/><rect x="1468.3" y="370.6" width="14.5" height="14.5" fill="none" stroke="#fff" stroke-width="1.9" stroke-opacity="0.9"/><rect x="1487.2" y="347.4" width="14.5" height="14.5" fill="none" stroke="#fff" stroke-width="1.9" stroke-opacity="0.9"/><rect x="1452.8" y="456.4" width="14.5" height="14.5" fill="none" stroke="#fff" stroke-width="1.9" stroke-opacity="0.9"/><rect x="1507.5" y="456.4" width="14.5" height="14.5" fill="none" stroke="#fff" stroke-width="1.9" stroke-opacity="0.9"/><rect x="1556.0" y="456.4" width="14.5" height="14.5" fill="none" stroke="#fff" stroke-width="1.9" stroke-opacity="0.9"/><rect x="1608.0" y="456.4" width="14.5" height="14.5" fill="none" stroke="#fff" stroke-width="1.9" stroke-opacity="0.9"/><rect x="1668.0" y="456.4" width="14.5" height="14.5" fill="none" stroke="#fff" stroke-width="1.9" stroke-opacity="0.9"/><rect x="1327.8" y="457.6" width="14.5" height="14.5" fill="none" stroke="#fff" stroke-width="1.9" stroke-opacity="0.9"/><rect x="1343.2" y="457.6" width="14.5" height="14.5" fill="none" stroke="#fff" stroke-width="1.9" stroke-opacity="0.9"/><rect x="1357.5" y="457.6" width="14.5" height="14.5" fill="none" stroke="#fff" stroke-width="1.9" stroke-opacity="0.9"/><rect x="1372.0" y="457.6" width="14.5" height="14.5" fill="none" stroke="#fff" stroke-width="1.9" stroke-opacity="0.9"/><rect x="1385.5" y="457.6" width="14.5" height="14.5" fill="none" stroke="#fff" stroke-width="1.9" stroke-opacity="0.9"/><rect x="1372.8" y="490.9" width="14.5" height="14.5" fill="none" stroke="#fff" stroke-width="1.9" stroke-opacity="0.9"/><rect x="1346.2" y="524.0" width="14.5" height="14.5" fill="none" stroke="#fff" stroke-width="1.9" stroke-opacity="0.9"/><rect x="1320.2" y="555.8" width="14.5" height="14.5" fill="none" stroke="#fff" stroke-width="1.9" stroke-opacity="0.9"/><rect x="1294.3" y="588.4" width="14.5" height="14.5" fill="none" stroke="#fff" stroke-width="1.9" stroke-opacity="0.9"/><rect x="1265.0" y="624.1" width="14.5" height="14.5" fill="none" stroke="#fff" stroke-width="1.9" stroke-opacity="0.9"/><rect x="1401.0" y="478.8" width="14.5" height="14.5" fill="none" stroke="#fff" stroke-width="1.9" stroke-opacity="0.9"/><rect x="1402.8" y="502.6" width="14.5" height="14.5" fill="none" stroke="#fff" stroke-width="1.9" stroke-opacity="0.9"/><rect x="1402.8" y="521.0" width="14.5" height="14.5" fill="none" stroke="#fff" stroke-width="1.9" stroke-opacity="0.9"/><rect x="1404.8" y="543.4" width="14.5" height="14.5" fill="none" stroke="#fff" stroke-width="1.9" stroke-opacity="0.9"/><rect x="1406.0" y="566.5" width="14.5" height="14.5" fill="none" stroke="#fff" stroke-width="1.9" stroke-opacity="0.9"/><rect x="1400.2" y="457.9" width="14.5" height="14.5" fill="none" stroke="#000" stroke-width="1.9" stroke-opacity="0.9"/><circle cx="1385.9" cy="297.3" r="4.9" fill="#2e8a2e" stroke="#161616" stroke-width="1.5"/><circle cx="1390.0" cy="330.4" r="4.9" fill="#6a9c6a" stroke="#161616" stroke-width="1.5"/><circle cx="1394.3" cy="365.0" r="4.9" fill="#80a480" stroke="#161616" stroke-width="1.5"/><circle cx="1400.0" cy="396.6" r="4.9" fill="#90aa90" stroke="#161616" stroke-width="1.5"/><circle cx="1404.7" cy="430.5" r="4.9" fill="#a4aca4" stroke="#161616" stroke-width="1.5"/><circle cx="1426.3" cy="441.7" r="4.9" fill="#b4b4a4" stroke="#161616" stroke-width="1.5"/><circle cx="1444.0" cy="421.6" r="4.9" fill="#b8b894" stroke="#161616" stroke-width="1.5"/><circle cx="1461.0" cy="401.2" r="4.9" fill="#b8b880" stroke="#161616" stroke-width="1.5"/><circle cx="1477.0" cy="381.2" r="4.9" fill="#b4b468" stroke="#161616" stroke-width="1.5"/><circle cx="1494.4" cy="360.8" r="4.9" fill="#aaaa44" stroke="#161616" stroke-width="1.5"/><circle cx="1464.4" cy="463.6" r="4.9" fill="#b09494" stroke="#161616" stroke-width="1.5"/><circle cx="1522.0" cy="465.0" r="4.9" fill="#b08080" stroke="#161616" stroke-width="1.5"/><circle cx="1571.0" cy="465.0" r="4.9" fill="#ac6c6c" stroke="#161616" stroke-width="1.5"/><circle cx="1621.8" cy="465.0" r="4.9" fill="#a85858" stroke="#161616" stroke-width="1.5"/><circle cx="1668.8" cy="466.7" r="4.9" fill="#9a2020" stroke="#161616" stroke-width="1.5"/><circle cx="1327.7" cy="461.7" r="4.9" fill="#2aa4a4" stroke="#161616" stroke-width="1.5"/><circle cx="1344.0" cy="463.6" r="4.9" fill="#6aa8a8" stroke="#161616" stroke-width="1.5"/><circle cx="1360.0" cy="463.6" r="4.9" fill="#88acac" stroke="#161616" stroke-width="1.5"/><circle cx="1377.0" cy="463.6" r="4.9" fill="#9cb0b0" stroke="#161616" stroke-width="1.5"/><circle cx="1391.6" cy="463.6" r="4.9" fill="#a8b0b0" stroke="#161616" stroke-width="1.5"/><circle cx="1381.2" cy="495.5" r="4.9" fill="#a4a4b8" stroke="#161616" stroke-width="1.5"/><circle cx="1354.0" cy="528.3" r="4.9" fill="#8e8ebc" stroke="#161616" stroke-width="1.5"/><circle cx="1326.6" cy="561.0" r="4.9" fill="#7272b8" stroke="#161616" stroke-width="1.5"/><circle cx="1297.3" cy="595.6" r="4.9" fill="#5050b0" stroke="#161616" stroke-width="1.5"/><circle cx="1270.4" cy="630.3" r="4.9" fill="#2a2a9a" stroke="#161616" stroke-width="1.5"/><circle cx="1410.0" cy="484.0" r="4.9" fill="#b0a4b0" stroke="#161616" stroke-width="1.5"/><circle cx="1413.2" cy="506.3" r="4.9" fill="#b092b0" stroke="#161616" stroke-width="1.5"/><circle cx="1416.7" cy="524.4" r="4.9" fill="#b080b0" stroke="#161616" stroke-width="1.5"/><circle cx="1419.4" cy="545.6" r="4.9" fill="#aa6aaa" stroke="#161616" stroke-width="1.5"/><circle cx="1422.4" cy="568.0" r="4.9" fill="#a050a0" stroke="#161616" stroke-width="1.5"/><circle cx="1409.3" cy="461.7" r="5" fill="#fff" stroke="#1a1a1a" stroke-width="1.4"/><text x="91.5" y="771.7" font-size="33.5" fill="#f4f4f4" textLength="232.5" lengthAdjust="spacingAndGlyphs">Current Reading</text><text x="91.5" y="816.0" font-size="28.4" fill="#f4f4f4" textLength="109.5" lengthAdjust="spacingAndGlyphs">x: 0,4192</text><text x="91.5" y="860.2" font-size="28.4" fill="#f4f4f4" textLength="109.5" lengthAdjust="spacingAndGlyphs">y: 0,4947</text><text x="91.5" y="902.7" font-size="28.4" fill="#f4f4f4" textLength="102.5" lengthAdjust="spacingAndGlyphs">fL: 61,15</text><text x="91.5" y="947.0" font-size="28.4" fill="#f4f4f4" textLength="170.5" lengthAdjust="spacingAndGlyphs">cd/m²: 209,53</text><text x="573.0" y="744.0" font-size="15.4" fill="#d0d0d0" text-anchor="middle" textLength="87.5" lengthAdjust="spacingAndGlyphs">RGB Balance</text><rect x="455.0" y="750.0" width="267.5" height="192.0" fill="#242424"/><line x1="449.0" y1="749.7" x2="722.2" y2="749.7" stroke="#a8a8a8" stroke-width="1.3"/><text x="449.5" y="755.7" font-size="16.5" fill="#d0d0d0" text-anchor="end" textLength="25.0" lengthAdjust="spacingAndGlyphs">120</text><line x1="449.0" y1="797.7" x2="722.2" y2="797.7" stroke="#a8a8a8" stroke-width="1.3"/><text x="449.5" y="803.7" font-size="16.5" fill="#d0d0d0" text-anchor="end" textLength="23.9" lengthAdjust="spacingAndGlyphs">110</text><line x1="449.0" y1="845.7" x2="722.2" y2="845.7" stroke="#a8a8a8" stroke-width="1.3"/><text x="449.5" y="851.7" font-size="16.5" fill="#d0d0d0" text-anchor="end" textLength="25.0" lengthAdjust="spacingAndGlyphs">100</text><line x1="449.0" y1="893.6" x2="722.2" y2="893.6" stroke="#a8a8a8" stroke-width="1.3"/><text x="449.5" y="899.6" font-size="16.5" fill="#d0d0d0" text-anchor="end" textLength="16.7" lengthAdjust="spacingAndGlyphs">90</text><line x1="449.0" y1="941.6" x2="722.2" y2="941.6" stroke="#a8a8a8" stroke-width="1.3"/><text x="449.5" y="947.6" font-size="16.5" fill="#d0d0d0" text-anchor="end" textLength="16.7" lengthAdjust="spacingAndGlyphs">80</text><line x1="455.0" y1="749.7" x2="455.0" y2="948.0" stroke="#a8a8a8" stroke-width="1.5"/><line x1="722.2" y1="749.7" x2="722.2" y2="948.0" stroke="#a8a8a8" stroke-width="1.3"/><line x1="455.0" y1="749.7" x2="722.2" y2="749.7" stroke="#a8a8a8" stroke-width="2.0"/><rect x="482.4" y="841.8" width="68.7" height="100" fill="url(#rb)" stroke="#000" stroke-width="1.2"/><rect x="551.1" y="851.3" width="71.2" height="90.5" fill="url(#gb)" stroke="#000" stroke-width="1.2"/><rect x="622.3" y="791.1" width="71.6" height="150.7" fill="url(#bb)" stroke="#000" stroke-width="1.2"/><text x="589.4" y="958.6" font-size="16.5" fill="#d0d0d0" text-anchor="middle" textLength="38.4" lengthAdjust="spacingAndGlyphs">100%</text><rect x="744.0" y="722.5" width="775.5" height="217.0" fill="#111"/><rect x="746.0" y="724.5" width="771.5" height="32.5" fill="url(#thead)"/><text x="1009.0" y="748.0" font-size="19.0" fill="#f0f0f0" text-anchor="middle" textLength="43.0" lengthAdjust="spacingAndGlyphs">20%</text><text x="1122.3" y="748.0" font-size="19.0" fill="#f0f0f0" text-anchor="middle" textLength="43.0" lengthAdjust="spacingAndGlyphs">40%</text><text x="1235.6" y="748.0" font-size="19.0" fill="#f0f0f0" text-anchor="middle" textLength="43.0" lengthAdjust="spacingAndGlyphs">60%</text><text x="1348.9" y="748.0" font-size="19.0" fill="#f0f0f0" text-anchor="middle" textLength="43.0" lengthAdjust="spacingAndGlyphs">80%</text><text x="1462.2" y="748.0" font-size="19.0" fill="#f0f0f0" text-anchor="middle" textLength="54.3" lengthAdjust="spacingAndGlyphs">100%</text><rect x="746.0" y="757.0" width="771.5" height="30.3" fill="#3c3c3c"/><text x="764.5" y="779.0" font-size="19.5" fill="#f4f4f4" textLength="92.0" lengthAdjust="spacingAndGlyphs" font-weight="bold">x: CIE31</text><text x="958.0" y="779.0" font-size="19.5" fill="#f4f4f4" textLength="73.0" lengthAdjust="spacingAndGlyphs">0,3355</text><text x="1071.2" y="779.0" font-size="19.5" fill="#f4f4f4" textLength="73.0" lengthAdjust="spacingAndGlyphs">0,3576</text><text x="1184.4" y="779.0" font-size="19.5" fill="#f4f4f4" textLength="73.0" lengthAdjust="spacingAndGlyphs">0,3781</text><text x="1297.6" y="779.0" font-size="19.5" fill="#f4f4f4" textLength="73.0" lengthAdjust="spacingAndGlyphs">0,3982</text><text x="1410.8" y="779.0" font-size="19.5" fill="#f4f4f4" textLength="73.0" lengthAdjust="spacingAndGlyphs">0,4192</text><rect x="746.0" y="787.3" width="771.5" height="30.3" fill="#7c7c7c"/><text x="764.5" y="809.3" font-size="19.5" fill="#f4f4f4" textLength="92.0" lengthAdjust="spacingAndGlyphs" font-weight="bold">y: CIE31</text><text x="958.0" y="809.3" font-size="19.5" fill="#f4f4f4" textLength="73.0" lengthAdjust="spacingAndGlyphs">0,3640</text><text x="1071.2" y="809.3" font-size="19.5" fill="#f4f4f4" textLength="73.0" lengthAdjust="spacingAndGlyphs">0,3987</text><text x="1184.4" y="809.3" font-size="19.5" fill="#f4f4f4" textLength="73.0" lengthAdjust="spacingAndGlyphs">0,4308</text><text x="1297.6" y="809.3" font-size="19.5" fill="#f4f4f4" textLength="73.0" lengthAdjust="spacingAndGlyphs">0,4624</text><text x="1410.8" y="809.3" font-size="19.5" fill="#f4f4f4" textLength="73.0" lengthAdjust="spacingAndGlyphs">0,4947</text><rect x="746.0" y="817.7" width="771.5" height="30.3" fill="#3c3c3c"/><text x="764.5" y="839.7" font-size="19.5" fill="#f4f4f4" textLength="13.6" lengthAdjust="spacingAndGlyphs" font-weight="bold">Y</text><text x="958.0" y="839.7" font-size="19.5" fill="#f4f4f4" textLength="99.5" lengthAdjust="spacingAndGlyphs">222,6348</text><text x="1071.2" y="839.7" font-size="19.5" fill="#f4f4f4" textLength="99.5" lengthAdjust="spacingAndGlyphs">218,5060</text><text x="1184.4" y="839.7" font-size="19.5" fill="#f4f4f4" textLength="99.5" lengthAdjust="spacingAndGlyphs">215,3532</text><text x="1297.6" y="839.7" font-size="19.5" fill="#f4f4f4" textLength="99.5" lengthAdjust="spacingAndGlyphs">212,7136</text><text x="1410.8" y="839.7" font-size="19.5" fill="#f4f4f4" textLength="99.5" lengthAdjust="spacingAndGlyphs">209,5304</text><rect x="746.0" y="848.0" width="771.5" height="30.3" fill="#7c7c7c"/><text x="764.5" y="870.0" font-size="19.5" fill="#f4f4f4" textLength="166.7" lengthAdjust="spacingAndGlyphs" font-weight="bold">Target x:CIE31</text><text x="958.0" y="870.0" font-size="19.5" fill="#f4f4f4" textLength="73.0" lengthAdjust="spacingAndGlyphs">0,3344</text><text x="1071.2" y="870.0" font-size="19.5" fill="#f4f4f4" textLength="73.0" lengthAdjust="spacingAndGlyphs">0,3564</text><text x="1184.4" y="870.0" font-size="19.5" fill="#f4f4f4" textLength="73.0" lengthAdjust="spacingAndGlyphs">0,3773</text><text x="1297.6" y="870.0" font-size="19.5" fill="#f4f4f4" textLength="73.0" lengthAdjust="spacingAndGlyphs">0,3969</text><text x="1410.8" y="870.0" font-size="19.5" fill="#f4f4f4" textLength="73.0" lengthAdjust="spacingAndGlyphs">0,4193</text><rect x="746.0" y="878.3" width="771.5" height="30.3" fill="#3c3c3c"/><text x="764.5" y="900.3" font-size="19.5" fill="#f4f4f4" textLength="166.7" lengthAdjust="spacingAndGlyphs" font-weight="bold">Target y:CIE31</text><text x="958.0" y="900.3" font-size="19.5" fill="#f4f4f4" textLength="73.0" lengthAdjust="spacingAndGlyphs">0,3648</text><text x="1071.2" y="900.3" font-size="19.5" fill="#f4f4f4" textLength="73.0" lengthAdjust="spacingAndGlyphs">0,4013</text><text x="1184.4" y="900.3" font-size="19.5" fill="#f4f4f4" textLength="73.0" lengthAdjust="spacingAndGlyphs">0,4358</text><text x="1297.6" y="900.3" font-size="19.5" fill="#f4f4f4" textLength="73.0" lengthAdjust="spacingAndGlyphs">0,4682</text><text x="1410.8" y="900.3" font-size="19.5" fill="#f4f4f4" textLength="73.0" lengthAdjust="spacingAndGlyphs">0,5053</text><rect x="746.0" y="908.6" width="771.5" height="30.3" fill="#7c7c7c"/><text x="764.5" y="930.6" font-size="19.5" fill="#f4f4f4" textLength="96.7" lengthAdjust="spacingAndGlyphs" font-weight="bold">Target Y</text><text x="958.0" y="930.6" font-size="19.5" fill="#f4f4f4" textLength="99.5" lengthAdjust="spacingAndGlyphs">223,4678</text><text x="1071.2" y="930.6" font-size="19.5" fill="#f4f4f4" textLength="99.5" lengthAdjust="spacingAndGlyphs">219,5452</text><text x="1184.4" y="930.6" font-size="19.5" fill="#f4f4f4" textLength="99.5" lengthAdjust="spacingAndGlyphs">216,5313</text><text x="1297.6" y="930.6" font-size="19.5" fill="#f4f4f4" textLength="99.5" lengthAdjust="spacingAndGlyphs">214,1660</text><text x="1410.8" y="930.6" font-size="19.5" fill="#f4f4f4" textLength="99.5" lengthAdjust="spacingAndGlyphs">211,8793</text><rect x="0.0" y="969.0" width="1920.0" height="70.0" fill="url(#bbar)"/><rect x="1" y="969" width="51" height="75" rx="4" fill="url(#bbtn)"/><circle cx="26.5" cy="979.5" r="8.5" fill="#888"/><path d="M21.5,982 L31.5,982 L26.5,976.5 Z" fill="#222"/><rect x="7" y="998" width="39.5" height="34.5" rx="4" fill="#ffff00" stroke="#c8c800" stroke-width="1"/><rect x="59.0" y="969" width="169.5" height="75" rx="4" fill="url(#bbtn)"/><rect x="65.5" y="975" width="157.5" height="40.5" rx="3" fill="#c2c3a9" stroke="#9a9a80" stroke-width="1"/><text x="143.5" y="1032.5" font-size="11.5" fill="#2a2a2a" text-anchor="middle" font-weight="bold">20%</text><rect x="231.0" y="969" width="169.5" height="75" rx="4" fill="url(#bbtn)"/><rect x="237.5" y="975" width="157.5" height="40.5" rx="3" fill="#c3c28a" stroke="#9a9a80" stroke-width="1"/><text x="315.5" y="1032.5" font-size="11.5" fill="#2a2a2a" text-anchor="middle" font-weight="bold">40%</text><rect x="402.5" y="969" width="169.5" height="75" rx="4" fill="url(#bbtn)"/><rect x="409.0" y="975" width="157.5" height="40.5" rx="3" fill="#c4c06f" stroke="#9a9a80" stroke-width="1"/><text x="487.0" y="1032.5" font-size="11.5" fill="#2a2a2a" text-anchor="middle" font-weight="bold">60%</text><rect x="573.5" y="969" width="169.5" height="75" rx="4" fill="url(#bbtn)"/><rect x="580.0" y="975" width="157.5" height="40.5" rx="3" fill="#c4bc4b" stroke="#9a9a80" stroke-width="1"/><text x="658.0" y="1032.5" font-size="11.5" fill="#2a2a2a" text-anchor="middle" font-weight="bold">80%</text><rect x="745" y="969" width="169.5" height="75" rx="4" fill="url(#selbtn)"/><rect x="751" y="974" width="159" height="42" rx="4" fill="#c8c400" stroke="#6a6800" stroke-width="1.2"/><text x="830.0" y="1032.5" font-size="11.5" fill="#ffffff" text-anchor="middle" font-weight="bold">100%</text><rect x="1563.5" y="969" width="54" height="21" rx="3.5" fill="url(#cbtn)"/><circle cx="1590.5" cy="978.5" r="8.0" fill="url(#ckn)"/><path d="M1585.5,981 L1595.5,981 L1590.5,975.5 Z" fill="#222"/><line x1="1563.5" y1="990.0" x2="1617.5" y2="990.0" stroke="#555" stroke-width="1.2"/><rect x="1563.5" y="990.5" width="54" height="50" rx="3" fill="url(#cbtn)"/><rect x="1574" y="997.5" width="32" height="32" rx="4.5" fill="#b4b4b4" stroke="#1e1e1e" stroke-width="2.6"/><rect x="1582.0" y="1006.0" width="16.0" height="7.5" fill="#262626"/><rect x="1582.0" y="1013.5" width="16.0" height="7.5" fill="#000"/><rect x="1619" y="969" width="256" height="33" rx="3" fill="url(#cbtn)"/><line x1="1670.5" y1="969.0" x2="1670.5" y2="1002.0" stroke="#2a2a2a" stroke-width="1.3"/><line x1="1721.5" y1="969.0" x2="1721.5" y2="1002.0" stroke="#2a2a2a" stroke-width="1.3"/><line x1="1772.5" y1="969.0" x2="1772.5" y2="1002.0" stroke="#2a2a2a" stroke-width="1.3"/><line x1="1823.5" y1="969.0" x2="1823.5" y2="1002.0" stroke="#2a2a2a" stroke-width="1.3"/><circle cx="1644.8" cy="985.5" r="11.0" fill="url(#ckn)"/><circle cx="1696.4" cy="985.5" r="11.0" fill="url(#ckn)"/><circle cx="1747.4" cy="985.5" r="11.0" fill="url(#ckn)"/><circle cx="1798.5" cy="985.5" r="11.0" fill="url(#ckn)"/><circle cx="1849.0" cy="985.5" r="11.0" fill="url(#ckn)"/><rect x="1640.5" y="981" width="9" height="9.5" fill="#262626"/><path d="M1693,979.5 L1702.5,986 L1693,992.5 Z" fill="#262626"/><path d="M1744,979.5 H1741.5 V991.5 H1744 M1751,979.5 H1753.5 V991.5 H1751" fill="none" stroke="#262626" stroke-width="2"/><circle cx="1746" cy="985.5" r="1" fill="#262626"/><circle cx="1749" cy="985.5" r="1" fill="#262626"/><path d="M1798.5,985.5 C1796,982.5 1791,982.5 1791,985.5 C1791,988.5 1796,988.5 1798.5,985.5 C1801,982.5 1806,982.5 1806,985.5 C1806,988.5 1801,988.5 1798.5,985.5 Z" fill="none" stroke="#262626" stroke-width="2"/><path d="M1843.5,985 A5.5,5.5 0 0 1 1853.5,982.5 M1854.5,986 A5.5,5.5 0 0 1 1844.5,988.5" fill="none" stroke="#262626" stroke-width="2.3"/><path d="M1851,979 L1856,983.5 L1850,984.5 Z M1846.5,992 L1841.5,987.5 L1847.5,986.5 Z" fill="#262626"/><rect x="1875.0" y="969.0" width="45.0" height="33.0" fill="#2c2c2c"/><circle cx="1901" cy="985.5" r="11" fill="#262626"/><rect x="1619" y="1004" width="154" height="40" rx="3" fill="url(#cbtn)"/><rect x="1773" y="1004" width="150" height="40" rx="3" fill="url(#cbtn)"/><line x1="1773.0" y1="1004.0" x2="1773.0" y2="1039.0" stroke="#333" stroke-width="1.2"/><circle cx="1653.0" cy="1021.0" r="10.0" fill="url(#ckn)"/><circle cx="1894.0" cy="1021.0" r="10.0" fill="url(#ckn)"/><path d="M1652,1016 L1648,1021 L1652,1026 M1656,1016 L1652,1021 L1656,1026" fill="none" stroke="#333" stroke-width="1.8"/><path d="M1891,1016 L1895,1021 L1891,1026 M1895,1016 L1899,1021 L1895,1026" fill="none" stroke="#333" stroke-width="1.8"/><text x="1684.0" y="1031.0" font-size="26.0" fill="#2e2e2e" textLength="57.0" lengthAdjust="spacingAndGlyphs" font-weight="bold">Back</text><text x="1804.0" y="1031.0" font-size="26.0" fill="#2e2e2e" textLength="58.0" lengthAdjust="spacingAndGlyphs" font-weight="bold">Next</text></svg></body></html>
